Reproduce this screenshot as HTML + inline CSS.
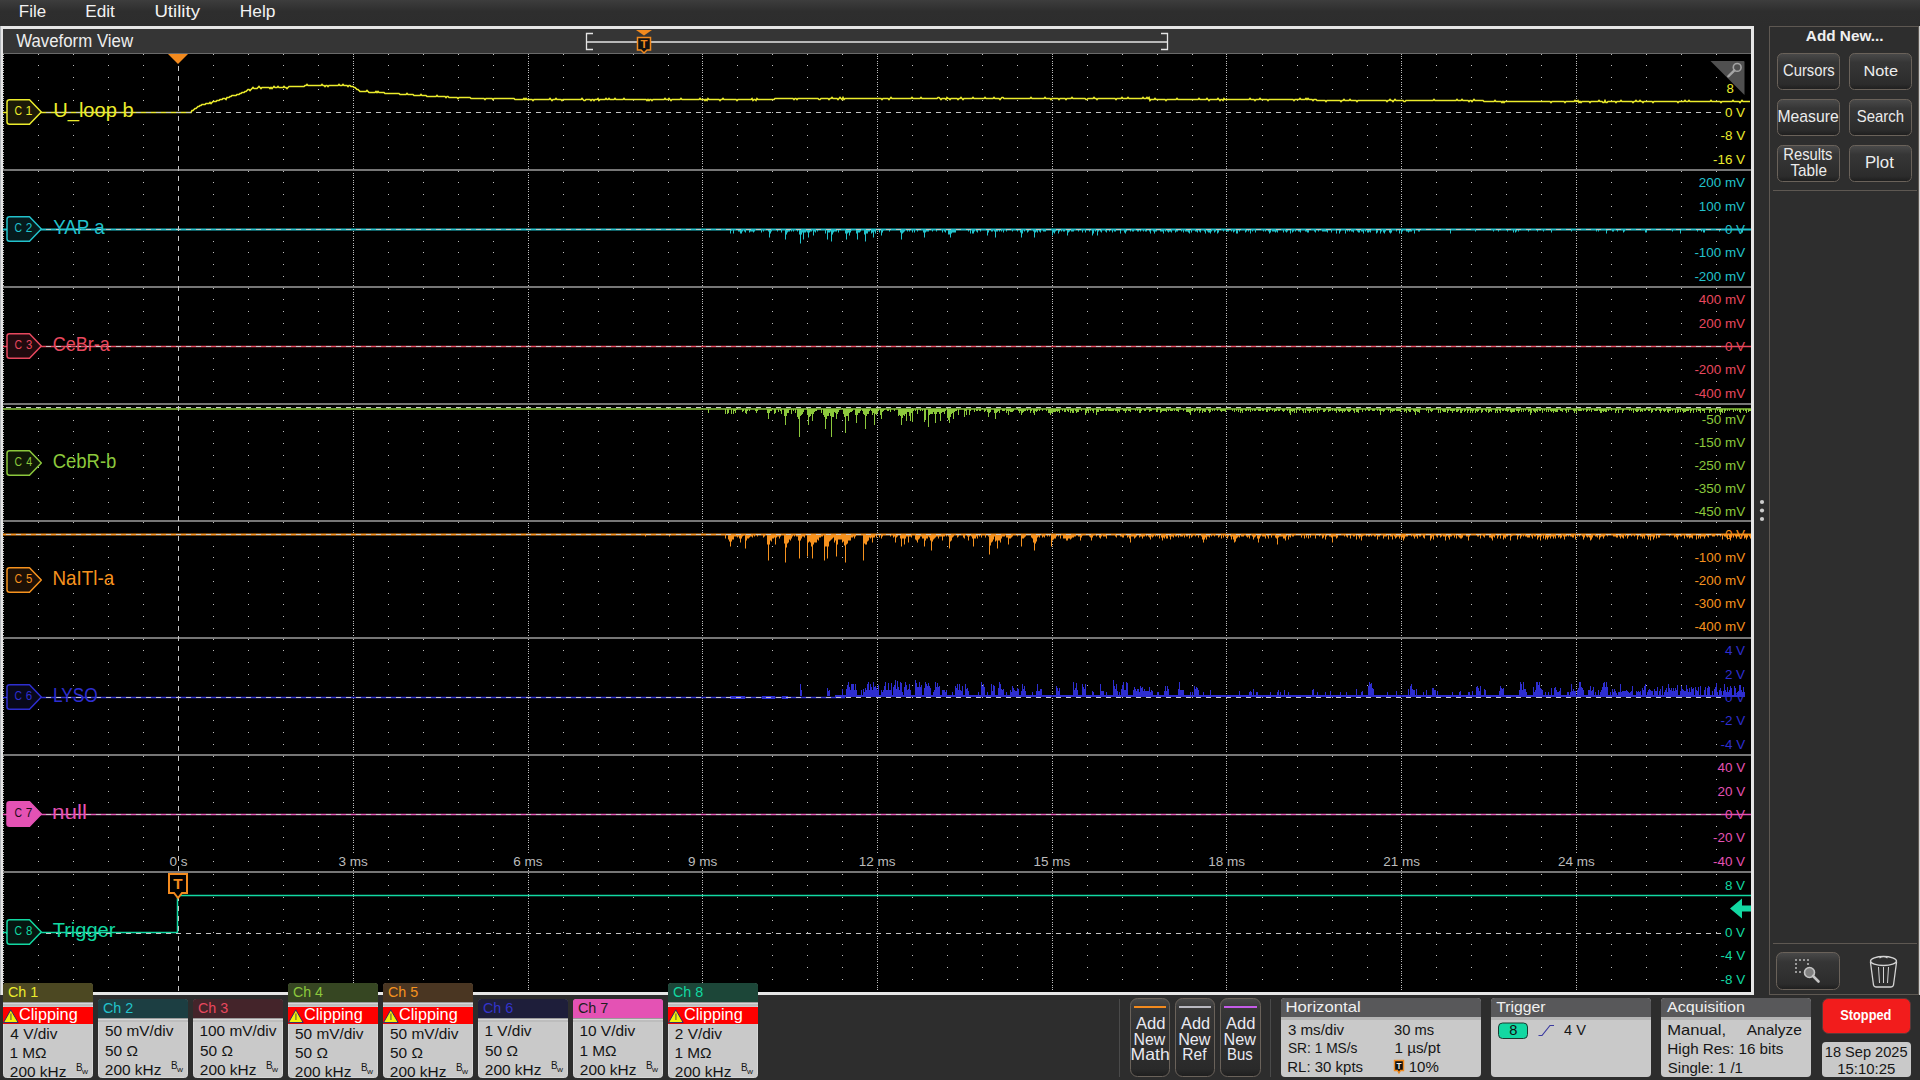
<!DOCTYPE html><html><head><meta charset="utf-8"><title>Waveform View</title><style>html,body{margin:0;padding:0;width:1920px;height:1080px;overflow:hidden;background:#2d2d2d;font-family:"Liberation Sans", sans-serif}</style></head><body><svg width="1920" height="1080" viewBox="0 0 1920 1080" style="position:absolute;left:0;top:0;font-family:'Liberation Sans', sans-serif"><rect x="0" y="0" width="1920" height="1080" fill="#2d2d2d" /><defs><linearGradient id="mb" x1="0" y1="0" x2="0" y2="1"><stop offset="0" stop-color="#3d3d3d"/><stop offset="0.45" stop-color="#2e2e2e"/><stop offset="1" stop-color="#2d2d2d"/></linearGradient><linearGradient id="btn" x1="0" y1="0" x2="0" y2="1"><stop offset="0" stop-color="#4a4a4a"/><stop offset="0.25" stop-color="#363636"/><stop offset="0.85" stop-color="#2c2c2c"/><stop offset="1" stop-color="#1e1e1e"/></linearGradient><linearGradient id="bbtn" x1="0" y1="0" x2="0" y2="1"><stop offset="0" stop-color="#4a4a4a"/><stop offset="0.15" stop-color="#363636"/><stop offset="0.9" stop-color="#2a2a2a"/><stop offset="1" stop-color="#1e1e1e"/></linearGradient></defs><rect x="0" y="0" width="1920" height="25" fill="url(#mb)" /><text x="18.85" y="17.10" font-size="16.42" font-weight="normal" fill="#f2f2f2" textLength="27.24" lengthAdjust="spacingAndGlyphs" >File</text><text x="85.23" y="17.10" font-size="16.42" font-weight="normal" fill="#f2f2f2" textLength="29.62" lengthAdjust="spacingAndGlyphs" >Edit</text><text x="154.40" y="17.10" font-size="16.42" font-weight="normal" fill="#f2f2f2" textLength="45.59" lengthAdjust="spacingAndGlyphs" >Utility</text><text x="239.71" y="17.10" font-size="16.42" font-weight="normal" fill="#f2f2f2" textLength="35.71" lengthAdjust="spacingAndGlyphs" >Help</text><rect x="0" y="26" width="1754" height="969" fill="#e6e6e6" /><rect x="0" y="26" width="1" height="969" fill="#b4b8bc" /><rect x="3" y="29" width="1748" height="25" fill="#353535" /><rect x="3" y="53" width="1748" height="1" fill="#6a6a6a" /><rect x="3" y="54" width="1748" height="938" fill="#000" /><text x="16.22" y="46.90" font-size="17.44" font-weight="normal" fill="#eeeeee" textLength="116.82" lengthAdjust="spacingAndGlyphs" >Waveform View</text><path d="M38 54h1v1h-1zM38 65h1v1h-1zM38 77h1v1h-1zM38 89h1v1h-1zM38 100h1v1h-1zM38 112h1v1h-1zM38 124h1v1h-1zM38 135h1v1h-1zM38 147h1v1h-1zM38 159h1v1h-1zM73 54h1v1h-1zM73 65h1v1h-1zM73 77h1v1h-1zM73 89h1v1h-1zM73 100h1v1h-1zM73 112h1v1h-1zM73 124h1v1h-1zM73 135h1v1h-1zM73 147h1v1h-1zM73 159h1v1h-1zM108 54h1v1h-1zM108 65h1v1h-1zM108 77h1v1h-1zM108 89h1v1h-1zM108 100h1v1h-1zM108 112h1v1h-1zM108 124h1v1h-1zM108 135h1v1h-1zM108 147h1v1h-1zM108 159h1v1h-1zM143 54h1v1h-1zM143 65h1v1h-1zM143 77h1v1h-1zM143 89h1v1h-1zM143 100h1v1h-1zM143 112h1v1h-1zM143 124h1v1h-1zM143 135h1v1h-1zM143 147h1v1h-1zM143 159h1v1h-1zM213 54h1v1h-1zM213 65h1v1h-1zM213 77h1v1h-1zM213 89h1v1h-1zM213 100h1v1h-1zM213 112h1v1h-1zM213 124h1v1h-1zM213 135h1v1h-1zM213 147h1v1h-1zM213 159h1v1h-1zM248 54h1v1h-1zM248 65h1v1h-1zM248 77h1v1h-1zM248 89h1v1h-1zM248 100h1v1h-1zM248 112h1v1h-1zM248 124h1v1h-1zM248 135h1v1h-1zM248 147h1v1h-1zM248 159h1v1h-1zM283 54h1v1h-1zM283 65h1v1h-1zM283 77h1v1h-1zM283 89h1v1h-1zM283 100h1v1h-1zM283 112h1v1h-1zM283 124h1v1h-1zM283 135h1v1h-1zM283 147h1v1h-1zM283 159h1v1h-1zM318 54h1v1h-1zM318 65h1v1h-1zM318 77h1v1h-1zM318 89h1v1h-1zM318 100h1v1h-1zM318 112h1v1h-1zM318 124h1v1h-1zM318 135h1v1h-1zM318 147h1v1h-1zM318 159h1v1h-1zM388 54h1v1h-1zM388 65h1v1h-1zM388 77h1v1h-1zM388 89h1v1h-1zM388 100h1v1h-1zM388 112h1v1h-1zM388 124h1v1h-1zM388 135h1v1h-1zM388 147h1v1h-1zM388 159h1v1h-1zM423 54h1v1h-1zM423 65h1v1h-1zM423 77h1v1h-1zM423 89h1v1h-1zM423 100h1v1h-1zM423 112h1v1h-1zM423 124h1v1h-1zM423 135h1v1h-1zM423 147h1v1h-1zM423 159h1v1h-1zM458 54h1v1h-1zM458 65h1v1h-1zM458 77h1v1h-1zM458 89h1v1h-1zM458 100h1v1h-1zM458 112h1v1h-1zM458 124h1v1h-1zM458 135h1v1h-1zM458 147h1v1h-1zM458 159h1v1h-1zM493 54h1v1h-1zM493 65h1v1h-1zM493 77h1v1h-1zM493 89h1v1h-1zM493 100h1v1h-1zM493 112h1v1h-1zM493 124h1v1h-1zM493 135h1v1h-1zM493 147h1v1h-1zM493 159h1v1h-1zM563 54h1v1h-1zM563 65h1v1h-1zM563 77h1v1h-1zM563 89h1v1h-1zM563 100h1v1h-1zM563 112h1v1h-1zM563 124h1v1h-1zM563 135h1v1h-1zM563 147h1v1h-1zM563 159h1v1h-1zM598 54h1v1h-1zM598 65h1v1h-1zM598 77h1v1h-1zM598 89h1v1h-1zM598 100h1v1h-1zM598 112h1v1h-1zM598 124h1v1h-1zM598 135h1v1h-1zM598 147h1v1h-1zM598 159h1v1h-1zM633 54h1v1h-1zM633 65h1v1h-1zM633 77h1v1h-1zM633 89h1v1h-1zM633 100h1v1h-1zM633 112h1v1h-1zM633 124h1v1h-1zM633 135h1v1h-1zM633 147h1v1h-1zM633 159h1v1h-1zM668 54h1v1h-1zM668 65h1v1h-1zM668 77h1v1h-1zM668 89h1v1h-1zM668 100h1v1h-1zM668 112h1v1h-1zM668 124h1v1h-1zM668 135h1v1h-1zM668 147h1v1h-1zM668 159h1v1h-1zM737 54h1v1h-1zM737 65h1v1h-1zM737 77h1v1h-1zM737 89h1v1h-1zM737 100h1v1h-1zM737 112h1v1h-1zM737 124h1v1h-1zM737 135h1v1h-1zM737 147h1v1h-1zM737 159h1v1h-1zM772 54h1v1h-1zM772 65h1v1h-1zM772 77h1v1h-1zM772 89h1v1h-1zM772 100h1v1h-1zM772 112h1v1h-1zM772 124h1v1h-1zM772 135h1v1h-1zM772 147h1v1h-1zM772 159h1v1h-1zM807 54h1v1h-1zM807 65h1v1h-1zM807 77h1v1h-1zM807 89h1v1h-1zM807 100h1v1h-1zM807 112h1v1h-1zM807 124h1v1h-1zM807 135h1v1h-1zM807 147h1v1h-1zM807 159h1v1h-1zM842 54h1v1h-1zM842 65h1v1h-1zM842 77h1v1h-1zM842 89h1v1h-1zM842 100h1v1h-1zM842 112h1v1h-1zM842 124h1v1h-1zM842 135h1v1h-1zM842 147h1v1h-1zM842 159h1v1h-1zM912 54h1v1h-1zM912 65h1v1h-1zM912 77h1v1h-1zM912 89h1v1h-1zM912 100h1v1h-1zM912 112h1v1h-1zM912 124h1v1h-1zM912 135h1v1h-1zM912 147h1v1h-1zM912 159h1v1h-1zM947 54h1v1h-1zM947 65h1v1h-1zM947 77h1v1h-1zM947 89h1v1h-1zM947 100h1v1h-1zM947 112h1v1h-1zM947 124h1v1h-1zM947 135h1v1h-1zM947 147h1v1h-1zM947 159h1v1h-1zM982 54h1v1h-1zM982 65h1v1h-1zM982 77h1v1h-1zM982 89h1v1h-1zM982 100h1v1h-1zM982 112h1v1h-1zM982 124h1v1h-1zM982 135h1v1h-1zM982 147h1v1h-1zM982 159h1v1h-1zM1017 54h1v1h-1zM1017 65h1v1h-1zM1017 77h1v1h-1zM1017 89h1v1h-1zM1017 100h1v1h-1zM1017 112h1v1h-1zM1017 124h1v1h-1zM1017 135h1v1h-1zM1017 147h1v1h-1zM1017 159h1v1h-1zM1087 54h1v1h-1zM1087 65h1v1h-1zM1087 77h1v1h-1zM1087 89h1v1h-1zM1087 100h1v1h-1zM1087 112h1v1h-1zM1087 124h1v1h-1zM1087 135h1v1h-1zM1087 147h1v1h-1zM1087 159h1v1h-1zM1122 54h1v1h-1zM1122 65h1v1h-1zM1122 77h1v1h-1zM1122 89h1v1h-1zM1122 100h1v1h-1zM1122 112h1v1h-1zM1122 124h1v1h-1zM1122 135h1v1h-1zM1122 147h1v1h-1zM1122 159h1v1h-1zM1157 54h1v1h-1zM1157 65h1v1h-1zM1157 77h1v1h-1zM1157 89h1v1h-1zM1157 100h1v1h-1zM1157 112h1v1h-1zM1157 124h1v1h-1zM1157 135h1v1h-1zM1157 147h1v1h-1zM1157 159h1v1h-1zM1192 54h1v1h-1zM1192 65h1v1h-1zM1192 77h1v1h-1zM1192 89h1v1h-1zM1192 100h1v1h-1zM1192 112h1v1h-1zM1192 124h1v1h-1zM1192 135h1v1h-1zM1192 147h1v1h-1zM1192 159h1v1h-1zM1262 54h1v1h-1zM1262 65h1v1h-1zM1262 77h1v1h-1zM1262 89h1v1h-1zM1262 100h1v1h-1zM1262 112h1v1h-1zM1262 124h1v1h-1zM1262 135h1v1h-1zM1262 147h1v1h-1zM1262 159h1v1h-1zM1297 54h1v1h-1zM1297 65h1v1h-1zM1297 77h1v1h-1zM1297 89h1v1h-1zM1297 100h1v1h-1zM1297 112h1v1h-1zM1297 124h1v1h-1zM1297 135h1v1h-1zM1297 147h1v1h-1zM1297 159h1v1h-1zM1332 54h1v1h-1zM1332 65h1v1h-1zM1332 77h1v1h-1zM1332 89h1v1h-1zM1332 100h1v1h-1zM1332 112h1v1h-1zM1332 124h1v1h-1zM1332 135h1v1h-1zM1332 147h1v1h-1zM1332 159h1v1h-1zM1367 54h1v1h-1zM1367 65h1v1h-1zM1367 77h1v1h-1zM1367 89h1v1h-1zM1367 100h1v1h-1zM1367 112h1v1h-1zM1367 124h1v1h-1zM1367 135h1v1h-1zM1367 147h1v1h-1zM1367 159h1v1h-1zM1436 54h1v1h-1zM1436 65h1v1h-1zM1436 77h1v1h-1zM1436 89h1v1h-1zM1436 100h1v1h-1zM1436 112h1v1h-1zM1436 124h1v1h-1zM1436 135h1v1h-1zM1436 147h1v1h-1zM1436 159h1v1h-1zM1471 54h1v1h-1zM1471 65h1v1h-1zM1471 77h1v1h-1zM1471 89h1v1h-1zM1471 100h1v1h-1zM1471 112h1v1h-1zM1471 124h1v1h-1zM1471 135h1v1h-1zM1471 147h1v1h-1zM1471 159h1v1h-1zM1506 54h1v1h-1zM1506 65h1v1h-1zM1506 77h1v1h-1zM1506 89h1v1h-1zM1506 100h1v1h-1zM1506 112h1v1h-1zM1506 124h1v1h-1zM1506 135h1v1h-1zM1506 147h1v1h-1zM1506 159h1v1h-1zM1541 54h1v1h-1zM1541 65h1v1h-1zM1541 77h1v1h-1zM1541 89h1v1h-1zM1541 100h1v1h-1zM1541 112h1v1h-1zM1541 124h1v1h-1zM1541 135h1v1h-1zM1541 147h1v1h-1zM1541 159h1v1h-1zM1611 54h1v1h-1zM1611 65h1v1h-1zM1611 77h1v1h-1zM1611 89h1v1h-1zM1611 100h1v1h-1zM1611 112h1v1h-1zM1611 124h1v1h-1zM1611 135h1v1h-1zM1611 147h1v1h-1zM1611 159h1v1h-1zM1646 54h1v1h-1zM1646 65h1v1h-1zM1646 77h1v1h-1zM1646 89h1v1h-1zM1646 100h1v1h-1zM1646 112h1v1h-1zM1646 124h1v1h-1zM1646 135h1v1h-1zM1646 147h1v1h-1zM1646 159h1v1h-1zM1681 54h1v1h-1zM1681 65h1v1h-1zM1681 77h1v1h-1zM1681 89h1v1h-1zM1681 100h1v1h-1zM1681 112h1v1h-1zM1681 124h1v1h-1zM1681 135h1v1h-1zM1681 147h1v1h-1zM1681 159h1v1h-1zM1716 54h1v1h-1zM1716 65h1v1h-1zM1716 77h1v1h-1zM1716 89h1v1h-1zM1716 100h1v1h-1zM1716 112h1v1h-1zM1716 124h1v1h-1zM1716 135h1v1h-1zM1716 147h1v1h-1zM1716 159h1v1h-1zM38 171h1v1h-1zM38 182h1v1h-1zM38 194h1v1h-1zM38 206h1v1h-1zM38 217h1v1h-1zM38 229h1v1h-1zM38 241h1v1h-1zM38 252h1v1h-1zM38 264h1v1h-1zM38 276h1v1h-1zM73 171h1v1h-1zM73 182h1v1h-1zM73 194h1v1h-1zM73 206h1v1h-1zM73 217h1v1h-1zM73 229h1v1h-1zM73 241h1v1h-1zM73 252h1v1h-1zM73 264h1v1h-1zM73 276h1v1h-1zM108 171h1v1h-1zM108 182h1v1h-1zM108 194h1v1h-1zM108 206h1v1h-1zM108 217h1v1h-1zM108 229h1v1h-1zM108 241h1v1h-1zM108 252h1v1h-1zM108 264h1v1h-1zM108 276h1v1h-1zM143 171h1v1h-1zM143 182h1v1h-1zM143 194h1v1h-1zM143 206h1v1h-1zM143 217h1v1h-1zM143 229h1v1h-1zM143 241h1v1h-1zM143 252h1v1h-1zM143 264h1v1h-1zM143 276h1v1h-1zM213 171h1v1h-1zM213 182h1v1h-1zM213 194h1v1h-1zM213 206h1v1h-1zM213 217h1v1h-1zM213 229h1v1h-1zM213 241h1v1h-1zM213 252h1v1h-1zM213 264h1v1h-1zM213 276h1v1h-1zM248 171h1v1h-1zM248 182h1v1h-1zM248 194h1v1h-1zM248 206h1v1h-1zM248 217h1v1h-1zM248 229h1v1h-1zM248 241h1v1h-1zM248 252h1v1h-1zM248 264h1v1h-1zM248 276h1v1h-1zM283 171h1v1h-1zM283 182h1v1h-1zM283 194h1v1h-1zM283 206h1v1h-1zM283 217h1v1h-1zM283 229h1v1h-1zM283 241h1v1h-1zM283 252h1v1h-1zM283 264h1v1h-1zM283 276h1v1h-1zM318 171h1v1h-1zM318 182h1v1h-1zM318 194h1v1h-1zM318 206h1v1h-1zM318 217h1v1h-1zM318 229h1v1h-1zM318 241h1v1h-1zM318 252h1v1h-1zM318 264h1v1h-1zM318 276h1v1h-1zM388 171h1v1h-1zM388 182h1v1h-1zM388 194h1v1h-1zM388 206h1v1h-1zM388 217h1v1h-1zM388 229h1v1h-1zM388 241h1v1h-1zM388 252h1v1h-1zM388 264h1v1h-1zM388 276h1v1h-1zM423 171h1v1h-1zM423 182h1v1h-1zM423 194h1v1h-1zM423 206h1v1h-1zM423 217h1v1h-1zM423 229h1v1h-1zM423 241h1v1h-1zM423 252h1v1h-1zM423 264h1v1h-1zM423 276h1v1h-1zM458 171h1v1h-1zM458 182h1v1h-1zM458 194h1v1h-1zM458 206h1v1h-1zM458 217h1v1h-1zM458 229h1v1h-1zM458 241h1v1h-1zM458 252h1v1h-1zM458 264h1v1h-1zM458 276h1v1h-1zM493 171h1v1h-1zM493 182h1v1h-1zM493 194h1v1h-1zM493 206h1v1h-1zM493 217h1v1h-1zM493 229h1v1h-1zM493 241h1v1h-1zM493 252h1v1h-1zM493 264h1v1h-1zM493 276h1v1h-1zM563 171h1v1h-1zM563 182h1v1h-1zM563 194h1v1h-1zM563 206h1v1h-1zM563 217h1v1h-1zM563 229h1v1h-1zM563 241h1v1h-1zM563 252h1v1h-1zM563 264h1v1h-1zM563 276h1v1h-1zM598 171h1v1h-1zM598 182h1v1h-1zM598 194h1v1h-1zM598 206h1v1h-1zM598 217h1v1h-1zM598 229h1v1h-1zM598 241h1v1h-1zM598 252h1v1h-1zM598 264h1v1h-1zM598 276h1v1h-1zM633 171h1v1h-1zM633 182h1v1h-1zM633 194h1v1h-1zM633 206h1v1h-1zM633 217h1v1h-1zM633 229h1v1h-1zM633 241h1v1h-1zM633 252h1v1h-1zM633 264h1v1h-1zM633 276h1v1h-1zM668 171h1v1h-1zM668 182h1v1h-1zM668 194h1v1h-1zM668 206h1v1h-1zM668 217h1v1h-1zM668 229h1v1h-1zM668 241h1v1h-1zM668 252h1v1h-1zM668 264h1v1h-1zM668 276h1v1h-1zM737 171h1v1h-1zM737 182h1v1h-1zM737 194h1v1h-1zM737 206h1v1h-1zM737 217h1v1h-1zM737 229h1v1h-1zM737 241h1v1h-1zM737 252h1v1h-1zM737 264h1v1h-1zM737 276h1v1h-1zM772 171h1v1h-1zM772 182h1v1h-1zM772 194h1v1h-1zM772 206h1v1h-1zM772 217h1v1h-1zM772 229h1v1h-1zM772 241h1v1h-1zM772 252h1v1h-1zM772 264h1v1h-1zM772 276h1v1h-1zM807 171h1v1h-1zM807 182h1v1h-1zM807 194h1v1h-1zM807 206h1v1h-1zM807 217h1v1h-1zM807 229h1v1h-1zM807 241h1v1h-1zM807 252h1v1h-1zM807 264h1v1h-1zM807 276h1v1h-1zM842 171h1v1h-1zM842 182h1v1h-1zM842 194h1v1h-1zM842 206h1v1h-1zM842 217h1v1h-1zM842 229h1v1h-1zM842 241h1v1h-1zM842 252h1v1h-1zM842 264h1v1h-1zM842 276h1v1h-1zM912 171h1v1h-1zM912 182h1v1h-1zM912 194h1v1h-1zM912 206h1v1h-1zM912 217h1v1h-1zM912 229h1v1h-1zM912 241h1v1h-1zM912 252h1v1h-1zM912 264h1v1h-1zM912 276h1v1h-1zM947 171h1v1h-1zM947 182h1v1h-1zM947 194h1v1h-1zM947 206h1v1h-1zM947 217h1v1h-1zM947 229h1v1h-1zM947 241h1v1h-1zM947 252h1v1h-1zM947 264h1v1h-1zM947 276h1v1h-1zM982 171h1v1h-1zM982 182h1v1h-1zM982 194h1v1h-1zM982 206h1v1h-1zM982 217h1v1h-1zM982 229h1v1h-1zM982 241h1v1h-1zM982 252h1v1h-1zM982 264h1v1h-1zM982 276h1v1h-1zM1017 171h1v1h-1zM1017 182h1v1h-1zM1017 194h1v1h-1zM1017 206h1v1h-1zM1017 217h1v1h-1zM1017 229h1v1h-1zM1017 241h1v1h-1zM1017 252h1v1h-1zM1017 264h1v1h-1zM1017 276h1v1h-1zM1087 171h1v1h-1zM1087 182h1v1h-1zM1087 194h1v1h-1zM1087 206h1v1h-1zM1087 217h1v1h-1zM1087 229h1v1h-1zM1087 241h1v1h-1zM1087 252h1v1h-1zM1087 264h1v1h-1zM1087 276h1v1h-1zM1122 171h1v1h-1zM1122 182h1v1h-1zM1122 194h1v1h-1zM1122 206h1v1h-1zM1122 217h1v1h-1zM1122 229h1v1h-1zM1122 241h1v1h-1zM1122 252h1v1h-1zM1122 264h1v1h-1zM1122 276h1v1h-1zM1157 171h1v1h-1zM1157 182h1v1h-1zM1157 194h1v1h-1zM1157 206h1v1h-1zM1157 217h1v1h-1zM1157 229h1v1h-1zM1157 241h1v1h-1zM1157 252h1v1h-1zM1157 264h1v1h-1zM1157 276h1v1h-1zM1192 171h1v1h-1zM1192 182h1v1h-1zM1192 194h1v1h-1zM1192 206h1v1h-1zM1192 217h1v1h-1zM1192 229h1v1h-1zM1192 241h1v1h-1zM1192 252h1v1h-1zM1192 264h1v1h-1zM1192 276h1v1h-1zM1262 171h1v1h-1zM1262 182h1v1h-1zM1262 194h1v1h-1zM1262 206h1v1h-1zM1262 217h1v1h-1zM1262 229h1v1h-1zM1262 241h1v1h-1zM1262 252h1v1h-1zM1262 264h1v1h-1zM1262 276h1v1h-1zM1297 171h1v1h-1zM1297 182h1v1h-1zM1297 194h1v1h-1zM1297 206h1v1h-1zM1297 217h1v1h-1zM1297 229h1v1h-1zM1297 241h1v1h-1zM1297 252h1v1h-1zM1297 264h1v1h-1zM1297 276h1v1h-1zM1332 171h1v1h-1zM1332 182h1v1h-1zM1332 194h1v1h-1zM1332 206h1v1h-1zM1332 217h1v1h-1zM1332 229h1v1h-1zM1332 241h1v1h-1zM1332 252h1v1h-1zM1332 264h1v1h-1zM1332 276h1v1h-1zM1367 171h1v1h-1zM1367 182h1v1h-1zM1367 194h1v1h-1zM1367 206h1v1h-1zM1367 217h1v1h-1zM1367 229h1v1h-1zM1367 241h1v1h-1zM1367 252h1v1h-1zM1367 264h1v1h-1zM1367 276h1v1h-1zM1436 171h1v1h-1zM1436 182h1v1h-1zM1436 194h1v1h-1zM1436 206h1v1h-1zM1436 217h1v1h-1zM1436 229h1v1h-1zM1436 241h1v1h-1zM1436 252h1v1h-1zM1436 264h1v1h-1zM1436 276h1v1h-1zM1471 171h1v1h-1zM1471 182h1v1h-1zM1471 194h1v1h-1zM1471 206h1v1h-1zM1471 217h1v1h-1zM1471 229h1v1h-1zM1471 241h1v1h-1zM1471 252h1v1h-1zM1471 264h1v1h-1zM1471 276h1v1h-1zM1506 171h1v1h-1zM1506 182h1v1h-1zM1506 194h1v1h-1zM1506 206h1v1h-1zM1506 217h1v1h-1zM1506 229h1v1h-1zM1506 241h1v1h-1zM1506 252h1v1h-1zM1506 264h1v1h-1zM1506 276h1v1h-1zM1541 171h1v1h-1zM1541 182h1v1h-1zM1541 194h1v1h-1zM1541 206h1v1h-1zM1541 217h1v1h-1zM1541 229h1v1h-1zM1541 241h1v1h-1zM1541 252h1v1h-1zM1541 264h1v1h-1zM1541 276h1v1h-1zM1611 171h1v1h-1zM1611 182h1v1h-1zM1611 194h1v1h-1zM1611 206h1v1h-1zM1611 217h1v1h-1zM1611 229h1v1h-1zM1611 241h1v1h-1zM1611 252h1v1h-1zM1611 264h1v1h-1zM1611 276h1v1h-1zM1646 171h1v1h-1zM1646 182h1v1h-1zM1646 194h1v1h-1zM1646 206h1v1h-1zM1646 217h1v1h-1zM1646 229h1v1h-1zM1646 241h1v1h-1zM1646 252h1v1h-1zM1646 264h1v1h-1zM1646 276h1v1h-1zM1681 171h1v1h-1zM1681 182h1v1h-1zM1681 194h1v1h-1zM1681 206h1v1h-1zM1681 217h1v1h-1zM1681 229h1v1h-1zM1681 241h1v1h-1zM1681 252h1v1h-1zM1681 264h1v1h-1zM1681 276h1v1h-1zM1716 171h1v1h-1zM1716 182h1v1h-1zM1716 194h1v1h-1zM1716 206h1v1h-1zM1716 217h1v1h-1zM1716 229h1v1h-1zM1716 241h1v1h-1zM1716 252h1v1h-1zM1716 264h1v1h-1zM1716 276h1v1h-1zM38 288h1v1h-1zM38 299h1v1h-1zM38 311h1v1h-1zM38 323h1v1h-1zM38 334h1v1h-1zM38 346h1v1h-1zM38 358h1v1h-1zM38 369h1v1h-1zM38 381h1v1h-1zM38 393h1v1h-1zM73 288h1v1h-1zM73 299h1v1h-1zM73 311h1v1h-1zM73 323h1v1h-1zM73 334h1v1h-1zM73 346h1v1h-1zM73 358h1v1h-1zM73 369h1v1h-1zM73 381h1v1h-1zM73 393h1v1h-1zM108 288h1v1h-1zM108 299h1v1h-1zM108 311h1v1h-1zM108 323h1v1h-1zM108 334h1v1h-1zM108 346h1v1h-1zM108 358h1v1h-1zM108 369h1v1h-1zM108 381h1v1h-1zM108 393h1v1h-1zM143 288h1v1h-1zM143 299h1v1h-1zM143 311h1v1h-1zM143 323h1v1h-1zM143 334h1v1h-1zM143 346h1v1h-1zM143 358h1v1h-1zM143 369h1v1h-1zM143 381h1v1h-1zM143 393h1v1h-1zM213 288h1v1h-1zM213 299h1v1h-1zM213 311h1v1h-1zM213 323h1v1h-1zM213 334h1v1h-1zM213 346h1v1h-1zM213 358h1v1h-1zM213 369h1v1h-1zM213 381h1v1h-1zM213 393h1v1h-1zM248 288h1v1h-1zM248 299h1v1h-1zM248 311h1v1h-1zM248 323h1v1h-1zM248 334h1v1h-1zM248 346h1v1h-1zM248 358h1v1h-1zM248 369h1v1h-1zM248 381h1v1h-1zM248 393h1v1h-1zM283 288h1v1h-1zM283 299h1v1h-1zM283 311h1v1h-1zM283 323h1v1h-1zM283 334h1v1h-1zM283 346h1v1h-1zM283 358h1v1h-1zM283 369h1v1h-1zM283 381h1v1h-1zM283 393h1v1h-1zM318 288h1v1h-1zM318 299h1v1h-1zM318 311h1v1h-1zM318 323h1v1h-1zM318 334h1v1h-1zM318 346h1v1h-1zM318 358h1v1h-1zM318 369h1v1h-1zM318 381h1v1h-1zM318 393h1v1h-1zM388 288h1v1h-1zM388 299h1v1h-1zM388 311h1v1h-1zM388 323h1v1h-1zM388 334h1v1h-1zM388 346h1v1h-1zM388 358h1v1h-1zM388 369h1v1h-1zM388 381h1v1h-1zM388 393h1v1h-1zM423 288h1v1h-1zM423 299h1v1h-1zM423 311h1v1h-1zM423 323h1v1h-1zM423 334h1v1h-1zM423 346h1v1h-1zM423 358h1v1h-1zM423 369h1v1h-1zM423 381h1v1h-1zM423 393h1v1h-1zM458 288h1v1h-1zM458 299h1v1h-1zM458 311h1v1h-1zM458 323h1v1h-1zM458 334h1v1h-1zM458 346h1v1h-1zM458 358h1v1h-1zM458 369h1v1h-1zM458 381h1v1h-1zM458 393h1v1h-1zM493 288h1v1h-1zM493 299h1v1h-1zM493 311h1v1h-1zM493 323h1v1h-1zM493 334h1v1h-1zM493 346h1v1h-1zM493 358h1v1h-1zM493 369h1v1h-1zM493 381h1v1h-1zM493 393h1v1h-1zM563 288h1v1h-1zM563 299h1v1h-1zM563 311h1v1h-1zM563 323h1v1h-1zM563 334h1v1h-1zM563 346h1v1h-1zM563 358h1v1h-1zM563 369h1v1h-1zM563 381h1v1h-1zM563 393h1v1h-1zM598 288h1v1h-1zM598 299h1v1h-1zM598 311h1v1h-1zM598 323h1v1h-1zM598 334h1v1h-1zM598 346h1v1h-1zM598 358h1v1h-1zM598 369h1v1h-1zM598 381h1v1h-1zM598 393h1v1h-1zM633 288h1v1h-1zM633 299h1v1h-1zM633 311h1v1h-1zM633 323h1v1h-1zM633 334h1v1h-1zM633 346h1v1h-1zM633 358h1v1h-1zM633 369h1v1h-1zM633 381h1v1h-1zM633 393h1v1h-1zM668 288h1v1h-1zM668 299h1v1h-1zM668 311h1v1h-1zM668 323h1v1h-1zM668 334h1v1h-1zM668 346h1v1h-1zM668 358h1v1h-1zM668 369h1v1h-1zM668 381h1v1h-1zM668 393h1v1h-1zM737 288h1v1h-1zM737 299h1v1h-1zM737 311h1v1h-1zM737 323h1v1h-1zM737 334h1v1h-1zM737 346h1v1h-1zM737 358h1v1h-1zM737 369h1v1h-1zM737 381h1v1h-1zM737 393h1v1h-1zM772 288h1v1h-1zM772 299h1v1h-1zM772 311h1v1h-1zM772 323h1v1h-1zM772 334h1v1h-1zM772 346h1v1h-1zM772 358h1v1h-1zM772 369h1v1h-1zM772 381h1v1h-1zM772 393h1v1h-1zM807 288h1v1h-1zM807 299h1v1h-1zM807 311h1v1h-1zM807 323h1v1h-1zM807 334h1v1h-1zM807 346h1v1h-1zM807 358h1v1h-1zM807 369h1v1h-1zM807 381h1v1h-1zM807 393h1v1h-1zM842 288h1v1h-1zM842 299h1v1h-1zM842 311h1v1h-1zM842 323h1v1h-1zM842 334h1v1h-1zM842 346h1v1h-1zM842 358h1v1h-1zM842 369h1v1h-1zM842 381h1v1h-1zM842 393h1v1h-1zM912 288h1v1h-1zM912 299h1v1h-1zM912 311h1v1h-1zM912 323h1v1h-1zM912 334h1v1h-1zM912 346h1v1h-1zM912 358h1v1h-1zM912 369h1v1h-1zM912 381h1v1h-1zM912 393h1v1h-1zM947 288h1v1h-1zM947 299h1v1h-1zM947 311h1v1h-1zM947 323h1v1h-1zM947 334h1v1h-1zM947 346h1v1h-1zM947 358h1v1h-1zM947 369h1v1h-1zM947 381h1v1h-1zM947 393h1v1h-1zM982 288h1v1h-1zM982 299h1v1h-1zM982 311h1v1h-1zM982 323h1v1h-1zM982 334h1v1h-1zM982 346h1v1h-1zM982 358h1v1h-1zM982 369h1v1h-1zM982 381h1v1h-1zM982 393h1v1h-1zM1017 288h1v1h-1zM1017 299h1v1h-1zM1017 311h1v1h-1zM1017 323h1v1h-1zM1017 334h1v1h-1zM1017 346h1v1h-1zM1017 358h1v1h-1zM1017 369h1v1h-1zM1017 381h1v1h-1zM1017 393h1v1h-1zM1087 288h1v1h-1zM1087 299h1v1h-1zM1087 311h1v1h-1zM1087 323h1v1h-1zM1087 334h1v1h-1zM1087 346h1v1h-1zM1087 358h1v1h-1zM1087 369h1v1h-1zM1087 381h1v1h-1zM1087 393h1v1h-1zM1122 288h1v1h-1zM1122 299h1v1h-1zM1122 311h1v1h-1zM1122 323h1v1h-1zM1122 334h1v1h-1zM1122 346h1v1h-1zM1122 358h1v1h-1zM1122 369h1v1h-1zM1122 381h1v1h-1zM1122 393h1v1h-1zM1157 288h1v1h-1zM1157 299h1v1h-1zM1157 311h1v1h-1zM1157 323h1v1h-1zM1157 334h1v1h-1zM1157 346h1v1h-1zM1157 358h1v1h-1zM1157 369h1v1h-1zM1157 381h1v1h-1zM1157 393h1v1h-1zM1192 288h1v1h-1zM1192 299h1v1h-1zM1192 311h1v1h-1zM1192 323h1v1h-1zM1192 334h1v1h-1zM1192 346h1v1h-1zM1192 358h1v1h-1zM1192 369h1v1h-1zM1192 381h1v1h-1zM1192 393h1v1h-1zM1262 288h1v1h-1zM1262 299h1v1h-1zM1262 311h1v1h-1zM1262 323h1v1h-1zM1262 334h1v1h-1zM1262 346h1v1h-1zM1262 358h1v1h-1zM1262 369h1v1h-1zM1262 381h1v1h-1zM1262 393h1v1h-1zM1297 288h1v1h-1zM1297 299h1v1h-1zM1297 311h1v1h-1zM1297 323h1v1h-1zM1297 334h1v1h-1zM1297 346h1v1h-1zM1297 358h1v1h-1zM1297 369h1v1h-1zM1297 381h1v1h-1zM1297 393h1v1h-1zM1332 288h1v1h-1zM1332 299h1v1h-1zM1332 311h1v1h-1zM1332 323h1v1h-1zM1332 334h1v1h-1zM1332 346h1v1h-1zM1332 358h1v1h-1zM1332 369h1v1h-1zM1332 381h1v1h-1zM1332 393h1v1h-1zM1367 288h1v1h-1zM1367 299h1v1h-1zM1367 311h1v1h-1zM1367 323h1v1h-1zM1367 334h1v1h-1zM1367 346h1v1h-1zM1367 358h1v1h-1zM1367 369h1v1h-1zM1367 381h1v1h-1zM1367 393h1v1h-1zM1436 288h1v1h-1zM1436 299h1v1h-1zM1436 311h1v1h-1zM1436 323h1v1h-1zM1436 334h1v1h-1zM1436 346h1v1h-1zM1436 358h1v1h-1zM1436 369h1v1h-1zM1436 381h1v1h-1zM1436 393h1v1h-1zM1471 288h1v1h-1zM1471 299h1v1h-1zM1471 311h1v1h-1zM1471 323h1v1h-1zM1471 334h1v1h-1zM1471 346h1v1h-1zM1471 358h1v1h-1zM1471 369h1v1h-1zM1471 381h1v1h-1zM1471 393h1v1h-1zM1506 288h1v1h-1zM1506 299h1v1h-1zM1506 311h1v1h-1zM1506 323h1v1h-1zM1506 334h1v1h-1zM1506 346h1v1h-1zM1506 358h1v1h-1zM1506 369h1v1h-1zM1506 381h1v1h-1zM1506 393h1v1h-1zM1541 288h1v1h-1zM1541 299h1v1h-1zM1541 311h1v1h-1zM1541 323h1v1h-1zM1541 334h1v1h-1zM1541 346h1v1h-1zM1541 358h1v1h-1zM1541 369h1v1h-1zM1541 381h1v1h-1zM1541 393h1v1h-1zM1611 288h1v1h-1zM1611 299h1v1h-1zM1611 311h1v1h-1zM1611 323h1v1h-1zM1611 334h1v1h-1zM1611 346h1v1h-1zM1611 358h1v1h-1zM1611 369h1v1h-1zM1611 381h1v1h-1zM1611 393h1v1h-1zM1646 288h1v1h-1zM1646 299h1v1h-1zM1646 311h1v1h-1zM1646 323h1v1h-1zM1646 334h1v1h-1zM1646 346h1v1h-1zM1646 358h1v1h-1zM1646 369h1v1h-1zM1646 381h1v1h-1zM1646 393h1v1h-1zM1681 288h1v1h-1zM1681 299h1v1h-1zM1681 311h1v1h-1zM1681 323h1v1h-1zM1681 334h1v1h-1zM1681 346h1v1h-1zM1681 358h1v1h-1zM1681 369h1v1h-1zM1681 381h1v1h-1zM1681 393h1v1h-1zM1716 288h1v1h-1zM1716 299h1v1h-1zM1716 311h1v1h-1zM1716 323h1v1h-1zM1716 334h1v1h-1zM1716 346h1v1h-1zM1716 358h1v1h-1zM1716 369h1v1h-1zM1716 381h1v1h-1zM1716 393h1v1h-1zM38 408h1v1h-1zM38 420h1v1h-1zM38 431h1v1h-1zM38 443h1v1h-1zM38 455h1v1h-1zM38 467h1v1h-1zM38 478h1v1h-1zM38 490h1v1h-1zM38 502h1v1h-1zM38 513h1v1h-1zM73 408h1v1h-1zM73 420h1v1h-1zM73 431h1v1h-1zM73 443h1v1h-1zM73 455h1v1h-1zM73 467h1v1h-1zM73 478h1v1h-1zM73 490h1v1h-1zM73 502h1v1h-1zM73 513h1v1h-1zM108 408h1v1h-1zM108 420h1v1h-1zM108 431h1v1h-1zM108 443h1v1h-1zM108 455h1v1h-1zM108 467h1v1h-1zM108 478h1v1h-1zM108 490h1v1h-1zM108 502h1v1h-1zM108 513h1v1h-1zM143 408h1v1h-1zM143 420h1v1h-1zM143 431h1v1h-1zM143 443h1v1h-1zM143 455h1v1h-1zM143 467h1v1h-1zM143 478h1v1h-1zM143 490h1v1h-1zM143 502h1v1h-1zM143 513h1v1h-1zM213 408h1v1h-1zM213 420h1v1h-1zM213 431h1v1h-1zM213 443h1v1h-1zM213 455h1v1h-1zM213 467h1v1h-1zM213 478h1v1h-1zM213 490h1v1h-1zM213 502h1v1h-1zM213 513h1v1h-1zM248 408h1v1h-1zM248 420h1v1h-1zM248 431h1v1h-1zM248 443h1v1h-1zM248 455h1v1h-1zM248 467h1v1h-1zM248 478h1v1h-1zM248 490h1v1h-1zM248 502h1v1h-1zM248 513h1v1h-1zM283 408h1v1h-1zM283 420h1v1h-1zM283 431h1v1h-1zM283 443h1v1h-1zM283 455h1v1h-1zM283 467h1v1h-1zM283 478h1v1h-1zM283 490h1v1h-1zM283 502h1v1h-1zM283 513h1v1h-1zM318 408h1v1h-1zM318 420h1v1h-1zM318 431h1v1h-1zM318 443h1v1h-1zM318 455h1v1h-1zM318 467h1v1h-1zM318 478h1v1h-1zM318 490h1v1h-1zM318 502h1v1h-1zM318 513h1v1h-1zM388 408h1v1h-1zM388 420h1v1h-1zM388 431h1v1h-1zM388 443h1v1h-1zM388 455h1v1h-1zM388 467h1v1h-1zM388 478h1v1h-1zM388 490h1v1h-1zM388 502h1v1h-1zM388 513h1v1h-1zM423 408h1v1h-1zM423 420h1v1h-1zM423 431h1v1h-1zM423 443h1v1h-1zM423 455h1v1h-1zM423 467h1v1h-1zM423 478h1v1h-1zM423 490h1v1h-1zM423 502h1v1h-1zM423 513h1v1h-1zM458 408h1v1h-1zM458 420h1v1h-1zM458 431h1v1h-1zM458 443h1v1h-1zM458 455h1v1h-1zM458 467h1v1h-1zM458 478h1v1h-1zM458 490h1v1h-1zM458 502h1v1h-1zM458 513h1v1h-1zM493 408h1v1h-1zM493 420h1v1h-1zM493 431h1v1h-1zM493 443h1v1h-1zM493 455h1v1h-1zM493 467h1v1h-1zM493 478h1v1h-1zM493 490h1v1h-1zM493 502h1v1h-1zM493 513h1v1h-1zM563 408h1v1h-1zM563 420h1v1h-1zM563 431h1v1h-1zM563 443h1v1h-1zM563 455h1v1h-1zM563 467h1v1h-1zM563 478h1v1h-1zM563 490h1v1h-1zM563 502h1v1h-1zM563 513h1v1h-1zM598 408h1v1h-1zM598 420h1v1h-1zM598 431h1v1h-1zM598 443h1v1h-1zM598 455h1v1h-1zM598 467h1v1h-1zM598 478h1v1h-1zM598 490h1v1h-1zM598 502h1v1h-1zM598 513h1v1h-1zM633 408h1v1h-1zM633 420h1v1h-1zM633 431h1v1h-1zM633 443h1v1h-1zM633 455h1v1h-1zM633 467h1v1h-1zM633 478h1v1h-1zM633 490h1v1h-1zM633 502h1v1h-1zM633 513h1v1h-1zM668 408h1v1h-1zM668 420h1v1h-1zM668 431h1v1h-1zM668 443h1v1h-1zM668 455h1v1h-1zM668 467h1v1h-1zM668 478h1v1h-1zM668 490h1v1h-1zM668 502h1v1h-1zM668 513h1v1h-1zM737 408h1v1h-1zM737 420h1v1h-1zM737 431h1v1h-1zM737 443h1v1h-1zM737 455h1v1h-1zM737 467h1v1h-1zM737 478h1v1h-1zM737 490h1v1h-1zM737 502h1v1h-1zM737 513h1v1h-1zM772 408h1v1h-1zM772 420h1v1h-1zM772 431h1v1h-1zM772 443h1v1h-1zM772 455h1v1h-1zM772 467h1v1h-1zM772 478h1v1h-1zM772 490h1v1h-1zM772 502h1v1h-1zM772 513h1v1h-1zM807 408h1v1h-1zM807 420h1v1h-1zM807 431h1v1h-1zM807 443h1v1h-1zM807 455h1v1h-1zM807 467h1v1h-1zM807 478h1v1h-1zM807 490h1v1h-1zM807 502h1v1h-1zM807 513h1v1h-1zM842 408h1v1h-1zM842 420h1v1h-1zM842 431h1v1h-1zM842 443h1v1h-1zM842 455h1v1h-1zM842 467h1v1h-1zM842 478h1v1h-1zM842 490h1v1h-1zM842 502h1v1h-1zM842 513h1v1h-1zM912 408h1v1h-1zM912 420h1v1h-1zM912 431h1v1h-1zM912 443h1v1h-1zM912 455h1v1h-1zM912 467h1v1h-1zM912 478h1v1h-1zM912 490h1v1h-1zM912 502h1v1h-1zM912 513h1v1h-1zM947 408h1v1h-1zM947 420h1v1h-1zM947 431h1v1h-1zM947 443h1v1h-1zM947 455h1v1h-1zM947 467h1v1h-1zM947 478h1v1h-1zM947 490h1v1h-1zM947 502h1v1h-1zM947 513h1v1h-1zM982 408h1v1h-1zM982 420h1v1h-1zM982 431h1v1h-1zM982 443h1v1h-1zM982 455h1v1h-1zM982 467h1v1h-1zM982 478h1v1h-1zM982 490h1v1h-1zM982 502h1v1h-1zM982 513h1v1h-1zM1017 408h1v1h-1zM1017 420h1v1h-1zM1017 431h1v1h-1zM1017 443h1v1h-1zM1017 455h1v1h-1zM1017 467h1v1h-1zM1017 478h1v1h-1zM1017 490h1v1h-1zM1017 502h1v1h-1zM1017 513h1v1h-1zM1087 408h1v1h-1zM1087 420h1v1h-1zM1087 431h1v1h-1zM1087 443h1v1h-1zM1087 455h1v1h-1zM1087 467h1v1h-1zM1087 478h1v1h-1zM1087 490h1v1h-1zM1087 502h1v1h-1zM1087 513h1v1h-1zM1122 408h1v1h-1zM1122 420h1v1h-1zM1122 431h1v1h-1zM1122 443h1v1h-1zM1122 455h1v1h-1zM1122 467h1v1h-1zM1122 478h1v1h-1zM1122 490h1v1h-1zM1122 502h1v1h-1zM1122 513h1v1h-1zM1157 408h1v1h-1zM1157 420h1v1h-1zM1157 431h1v1h-1zM1157 443h1v1h-1zM1157 455h1v1h-1zM1157 467h1v1h-1zM1157 478h1v1h-1zM1157 490h1v1h-1zM1157 502h1v1h-1zM1157 513h1v1h-1zM1192 408h1v1h-1zM1192 420h1v1h-1zM1192 431h1v1h-1zM1192 443h1v1h-1zM1192 455h1v1h-1zM1192 467h1v1h-1zM1192 478h1v1h-1zM1192 490h1v1h-1zM1192 502h1v1h-1zM1192 513h1v1h-1zM1262 408h1v1h-1zM1262 420h1v1h-1zM1262 431h1v1h-1zM1262 443h1v1h-1zM1262 455h1v1h-1zM1262 467h1v1h-1zM1262 478h1v1h-1zM1262 490h1v1h-1zM1262 502h1v1h-1zM1262 513h1v1h-1zM1297 408h1v1h-1zM1297 420h1v1h-1zM1297 431h1v1h-1zM1297 443h1v1h-1zM1297 455h1v1h-1zM1297 467h1v1h-1zM1297 478h1v1h-1zM1297 490h1v1h-1zM1297 502h1v1h-1zM1297 513h1v1h-1zM1332 408h1v1h-1zM1332 420h1v1h-1zM1332 431h1v1h-1zM1332 443h1v1h-1zM1332 455h1v1h-1zM1332 467h1v1h-1zM1332 478h1v1h-1zM1332 490h1v1h-1zM1332 502h1v1h-1zM1332 513h1v1h-1zM1367 408h1v1h-1zM1367 420h1v1h-1zM1367 431h1v1h-1zM1367 443h1v1h-1zM1367 455h1v1h-1zM1367 467h1v1h-1zM1367 478h1v1h-1zM1367 490h1v1h-1zM1367 502h1v1h-1zM1367 513h1v1h-1zM1436 408h1v1h-1zM1436 420h1v1h-1zM1436 431h1v1h-1zM1436 443h1v1h-1zM1436 455h1v1h-1zM1436 467h1v1h-1zM1436 478h1v1h-1zM1436 490h1v1h-1zM1436 502h1v1h-1zM1436 513h1v1h-1zM1471 408h1v1h-1zM1471 420h1v1h-1zM1471 431h1v1h-1zM1471 443h1v1h-1zM1471 455h1v1h-1zM1471 467h1v1h-1zM1471 478h1v1h-1zM1471 490h1v1h-1zM1471 502h1v1h-1zM1471 513h1v1h-1zM1506 408h1v1h-1zM1506 420h1v1h-1zM1506 431h1v1h-1zM1506 443h1v1h-1zM1506 455h1v1h-1zM1506 467h1v1h-1zM1506 478h1v1h-1zM1506 490h1v1h-1zM1506 502h1v1h-1zM1506 513h1v1h-1zM1541 408h1v1h-1zM1541 420h1v1h-1zM1541 431h1v1h-1zM1541 443h1v1h-1zM1541 455h1v1h-1zM1541 467h1v1h-1zM1541 478h1v1h-1zM1541 490h1v1h-1zM1541 502h1v1h-1zM1541 513h1v1h-1zM1611 408h1v1h-1zM1611 420h1v1h-1zM1611 431h1v1h-1zM1611 443h1v1h-1zM1611 455h1v1h-1zM1611 467h1v1h-1zM1611 478h1v1h-1zM1611 490h1v1h-1zM1611 502h1v1h-1zM1611 513h1v1h-1zM1646 408h1v1h-1zM1646 420h1v1h-1zM1646 431h1v1h-1zM1646 443h1v1h-1zM1646 455h1v1h-1zM1646 467h1v1h-1zM1646 478h1v1h-1zM1646 490h1v1h-1zM1646 502h1v1h-1zM1646 513h1v1h-1zM1681 408h1v1h-1zM1681 420h1v1h-1zM1681 431h1v1h-1zM1681 443h1v1h-1zM1681 455h1v1h-1zM1681 467h1v1h-1zM1681 478h1v1h-1zM1681 490h1v1h-1zM1681 502h1v1h-1zM1681 513h1v1h-1zM1716 408h1v1h-1zM1716 420h1v1h-1zM1716 431h1v1h-1zM1716 443h1v1h-1zM1716 455h1v1h-1zM1716 467h1v1h-1zM1716 478h1v1h-1zM1716 490h1v1h-1zM1716 502h1v1h-1zM1716 513h1v1h-1zM38 522h1v1h-1zM38 534h1v1h-1zM38 546h1v1h-1zM38 557h1v1h-1zM38 569h1v1h-1zM38 581h1v1h-1zM38 593h1v1h-1zM38 604h1v1h-1zM38 616h1v1h-1zM38 628h1v1h-1zM73 522h1v1h-1zM73 534h1v1h-1zM73 546h1v1h-1zM73 557h1v1h-1zM73 569h1v1h-1zM73 581h1v1h-1zM73 593h1v1h-1zM73 604h1v1h-1zM73 616h1v1h-1zM73 628h1v1h-1zM108 522h1v1h-1zM108 534h1v1h-1zM108 546h1v1h-1zM108 557h1v1h-1zM108 569h1v1h-1zM108 581h1v1h-1zM108 593h1v1h-1zM108 604h1v1h-1zM108 616h1v1h-1zM108 628h1v1h-1zM143 522h1v1h-1zM143 534h1v1h-1zM143 546h1v1h-1zM143 557h1v1h-1zM143 569h1v1h-1zM143 581h1v1h-1zM143 593h1v1h-1zM143 604h1v1h-1zM143 616h1v1h-1zM143 628h1v1h-1zM213 522h1v1h-1zM213 534h1v1h-1zM213 546h1v1h-1zM213 557h1v1h-1zM213 569h1v1h-1zM213 581h1v1h-1zM213 593h1v1h-1zM213 604h1v1h-1zM213 616h1v1h-1zM213 628h1v1h-1zM248 522h1v1h-1zM248 534h1v1h-1zM248 546h1v1h-1zM248 557h1v1h-1zM248 569h1v1h-1zM248 581h1v1h-1zM248 593h1v1h-1zM248 604h1v1h-1zM248 616h1v1h-1zM248 628h1v1h-1zM283 522h1v1h-1zM283 534h1v1h-1zM283 546h1v1h-1zM283 557h1v1h-1zM283 569h1v1h-1zM283 581h1v1h-1zM283 593h1v1h-1zM283 604h1v1h-1zM283 616h1v1h-1zM283 628h1v1h-1zM318 522h1v1h-1zM318 534h1v1h-1zM318 546h1v1h-1zM318 557h1v1h-1zM318 569h1v1h-1zM318 581h1v1h-1zM318 593h1v1h-1zM318 604h1v1h-1zM318 616h1v1h-1zM318 628h1v1h-1zM388 522h1v1h-1zM388 534h1v1h-1zM388 546h1v1h-1zM388 557h1v1h-1zM388 569h1v1h-1zM388 581h1v1h-1zM388 593h1v1h-1zM388 604h1v1h-1zM388 616h1v1h-1zM388 628h1v1h-1zM423 522h1v1h-1zM423 534h1v1h-1zM423 546h1v1h-1zM423 557h1v1h-1zM423 569h1v1h-1zM423 581h1v1h-1zM423 593h1v1h-1zM423 604h1v1h-1zM423 616h1v1h-1zM423 628h1v1h-1zM458 522h1v1h-1zM458 534h1v1h-1zM458 546h1v1h-1zM458 557h1v1h-1zM458 569h1v1h-1zM458 581h1v1h-1zM458 593h1v1h-1zM458 604h1v1h-1zM458 616h1v1h-1zM458 628h1v1h-1zM493 522h1v1h-1zM493 534h1v1h-1zM493 546h1v1h-1zM493 557h1v1h-1zM493 569h1v1h-1zM493 581h1v1h-1zM493 593h1v1h-1zM493 604h1v1h-1zM493 616h1v1h-1zM493 628h1v1h-1zM563 522h1v1h-1zM563 534h1v1h-1zM563 546h1v1h-1zM563 557h1v1h-1zM563 569h1v1h-1zM563 581h1v1h-1zM563 593h1v1h-1zM563 604h1v1h-1zM563 616h1v1h-1zM563 628h1v1h-1zM598 522h1v1h-1zM598 534h1v1h-1zM598 546h1v1h-1zM598 557h1v1h-1zM598 569h1v1h-1zM598 581h1v1h-1zM598 593h1v1h-1zM598 604h1v1h-1zM598 616h1v1h-1zM598 628h1v1h-1zM633 522h1v1h-1zM633 534h1v1h-1zM633 546h1v1h-1zM633 557h1v1h-1zM633 569h1v1h-1zM633 581h1v1h-1zM633 593h1v1h-1zM633 604h1v1h-1zM633 616h1v1h-1zM633 628h1v1h-1zM668 522h1v1h-1zM668 534h1v1h-1zM668 546h1v1h-1zM668 557h1v1h-1zM668 569h1v1h-1zM668 581h1v1h-1zM668 593h1v1h-1zM668 604h1v1h-1zM668 616h1v1h-1zM668 628h1v1h-1zM737 522h1v1h-1zM737 534h1v1h-1zM737 546h1v1h-1zM737 557h1v1h-1zM737 569h1v1h-1zM737 581h1v1h-1zM737 593h1v1h-1zM737 604h1v1h-1zM737 616h1v1h-1zM737 628h1v1h-1zM772 522h1v1h-1zM772 534h1v1h-1zM772 546h1v1h-1zM772 557h1v1h-1zM772 569h1v1h-1zM772 581h1v1h-1zM772 593h1v1h-1zM772 604h1v1h-1zM772 616h1v1h-1zM772 628h1v1h-1zM807 522h1v1h-1zM807 534h1v1h-1zM807 546h1v1h-1zM807 557h1v1h-1zM807 569h1v1h-1zM807 581h1v1h-1zM807 593h1v1h-1zM807 604h1v1h-1zM807 616h1v1h-1zM807 628h1v1h-1zM842 522h1v1h-1zM842 534h1v1h-1zM842 546h1v1h-1zM842 557h1v1h-1zM842 569h1v1h-1zM842 581h1v1h-1zM842 593h1v1h-1zM842 604h1v1h-1zM842 616h1v1h-1zM842 628h1v1h-1zM912 522h1v1h-1zM912 534h1v1h-1zM912 546h1v1h-1zM912 557h1v1h-1zM912 569h1v1h-1zM912 581h1v1h-1zM912 593h1v1h-1zM912 604h1v1h-1zM912 616h1v1h-1zM912 628h1v1h-1zM947 522h1v1h-1zM947 534h1v1h-1zM947 546h1v1h-1zM947 557h1v1h-1zM947 569h1v1h-1zM947 581h1v1h-1zM947 593h1v1h-1zM947 604h1v1h-1zM947 616h1v1h-1zM947 628h1v1h-1zM982 522h1v1h-1zM982 534h1v1h-1zM982 546h1v1h-1zM982 557h1v1h-1zM982 569h1v1h-1zM982 581h1v1h-1zM982 593h1v1h-1zM982 604h1v1h-1zM982 616h1v1h-1zM982 628h1v1h-1zM1017 522h1v1h-1zM1017 534h1v1h-1zM1017 546h1v1h-1zM1017 557h1v1h-1zM1017 569h1v1h-1zM1017 581h1v1h-1zM1017 593h1v1h-1zM1017 604h1v1h-1zM1017 616h1v1h-1zM1017 628h1v1h-1zM1087 522h1v1h-1zM1087 534h1v1h-1zM1087 546h1v1h-1zM1087 557h1v1h-1zM1087 569h1v1h-1zM1087 581h1v1h-1zM1087 593h1v1h-1zM1087 604h1v1h-1zM1087 616h1v1h-1zM1087 628h1v1h-1zM1122 522h1v1h-1zM1122 534h1v1h-1zM1122 546h1v1h-1zM1122 557h1v1h-1zM1122 569h1v1h-1zM1122 581h1v1h-1zM1122 593h1v1h-1zM1122 604h1v1h-1zM1122 616h1v1h-1zM1122 628h1v1h-1zM1157 522h1v1h-1zM1157 534h1v1h-1zM1157 546h1v1h-1zM1157 557h1v1h-1zM1157 569h1v1h-1zM1157 581h1v1h-1zM1157 593h1v1h-1zM1157 604h1v1h-1zM1157 616h1v1h-1zM1157 628h1v1h-1zM1192 522h1v1h-1zM1192 534h1v1h-1zM1192 546h1v1h-1zM1192 557h1v1h-1zM1192 569h1v1h-1zM1192 581h1v1h-1zM1192 593h1v1h-1zM1192 604h1v1h-1zM1192 616h1v1h-1zM1192 628h1v1h-1zM1262 522h1v1h-1zM1262 534h1v1h-1zM1262 546h1v1h-1zM1262 557h1v1h-1zM1262 569h1v1h-1zM1262 581h1v1h-1zM1262 593h1v1h-1zM1262 604h1v1h-1zM1262 616h1v1h-1zM1262 628h1v1h-1zM1297 522h1v1h-1zM1297 534h1v1h-1zM1297 546h1v1h-1zM1297 557h1v1h-1zM1297 569h1v1h-1zM1297 581h1v1h-1zM1297 593h1v1h-1zM1297 604h1v1h-1zM1297 616h1v1h-1zM1297 628h1v1h-1zM1332 522h1v1h-1zM1332 534h1v1h-1zM1332 546h1v1h-1zM1332 557h1v1h-1zM1332 569h1v1h-1zM1332 581h1v1h-1zM1332 593h1v1h-1zM1332 604h1v1h-1zM1332 616h1v1h-1zM1332 628h1v1h-1zM1367 522h1v1h-1zM1367 534h1v1h-1zM1367 546h1v1h-1zM1367 557h1v1h-1zM1367 569h1v1h-1zM1367 581h1v1h-1zM1367 593h1v1h-1zM1367 604h1v1h-1zM1367 616h1v1h-1zM1367 628h1v1h-1zM1436 522h1v1h-1zM1436 534h1v1h-1zM1436 546h1v1h-1zM1436 557h1v1h-1zM1436 569h1v1h-1zM1436 581h1v1h-1zM1436 593h1v1h-1zM1436 604h1v1h-1zM1436 616h1v1h-1zM1436 628h1v1h-1zM1471 522h1v1h-1zM1471 534h1v1h-1zM1471 546h1v1h-1zM1471 557h1v1h-1zM1471 569h1v1h-1zM1471 581h1v1h-1zM1471 593h1v1h-1zM1471 604h1v1h-1zM1471 616h1v1h-1zM1471 628h1v1h-1zM1506 522h1v1h-1zM1506 534h1v1h-1zM1506 546h1v1h-1zM1506 557h1v1h-1zM1506 569h1v1h-1zM1506 581h1v1h-1zM1506 593h1v1h-1zM1506 604h1v1h-1zM1506 616h1v1h-1zM1506 628h1v1h-1zM1541 522h1v1h-1zM1541 534h1v1h-1zM1541 546h1v1h-1zM1541 557h1v1h-1zM1541 569h1v1h-1zM1541 581h1v1h-1zM1541 593h1v1h-1zM1541 604h1v1h-1zM1541 616h1v1h-1zM1541 628h1v1h-1zM1611 522h1v1h-1zM1611 534h1v1h-1zM1611 546h1v1h-1zM1611 557h1v1h-1zM1611 569h1v1h-1zM1611 581h1v1h-1zM1611 593h1v1h-1zM1611 604h1v1h-1zM1611 616h1v1h-1zM1611 628h1v1h-1zM1646 522h1v1h-1zM1646 534h1v1h-1zM1646 546h1v1h-1zM1646 557h1v1h-1zM1646 569h1v1h-1zM1646 581h1v1h-1zM1646 593h1v1h-1zM1646 604h1v1h-1zM1646 616h1v1h-1zM1646 628h1v1h-1zM1681 522h1v1h-1zM1681 534h1v1h-1zM1681 546h1v1h-1zM1681 557h1v1h-1zM1681 569h1v1h-1zM1681 581h1v1h-1zM1681 593h1v1h-1zM1681 604h1v1h-1zM1681 616h1v1h-1zM1681 628h1v1h-1zM1716 522h1v1h-1zM1716 534h1v1h-1zM1716 546h1v1h-1zM1716 557h1v1h-1zM1716 569h1v1h-1zM1716 581h1v1h-1zM1716 593h1v1h-1zM1716 604h1v1h-1zM1716 616h1v1h-1zM1716 628h1v1h-1zM38 639h1v1h-1zM38 650h1v1h-1zM38 662h1v1h-1zM38 674h1v1h-1zM38 685h1v1h-1zM38 697h1v1h-1zM38 709h1v1h-1zM38 720h1v1h-1zM38 732h1v1h-1zM38 744h1v1h-1zM73 639h1v1h-1zM73 650h1v1h-1zM73 662h1v1h-1zM73 674h1v1h-1zM73 685h1v1h-1zM73 697h1v1h-1zM73 709h1v1h-1zM73 720h1v1h-1zM73 732h1v1h-1zM73 744h1v1h-1zM108 639h1v1h-1zM108 650h1v1h-1zM108 662h1v1h-1zM108 674h1v1h-1zM108 685h1v1h-1zM108 697h1v1h-1zM108 709h1v1h-1zM108 720h1v1h-1zM108 732h1v1h-1zM108 744h1v1h-1zM143 639h1v1h-1zM143 650h1v1h-1zM143 662h1v1h-1zM143 674h1v1h-1zM143 685h1v1h-1zM143 697h1v1h-1zM143 709h1v1h-1zM143 720h1v1h-1zM143 732h1v1h-1zM143 744h1v1h-1zM213 639h1v1h-1zM213 650h1v1h-1zM213 662h1v1h-1zM213 674h1v1h-1zM213 685h1v1h-1zM213 697h1v1h-1zM213 709h1v1h-1zM213 720h1v1h-1zM213 732h1v1h-1zM213 744h1v1h-1zM248 639h1v1h-1zM248 650h1v1h-1zM248 662h1v1h-1zM248 674h1v1h-1zM248 685h1v1h-1zM248 697h1v1h-1zM248 709h1v1h-1zM248 720h1v1h-1zM248 732h1v1h-1zM248 744h1v1h-1zM283 639h1v1h-1zM283 650h1v1h-1zM283 662h1v1h-1zM283 674h1v1h-1zM283 685h1v1h-1zM283 697h1v1h-1zM283 709h1v1h-1zM283 720h1v1h-1zM283 732h1v1h-1zM283 744h1v1h-1zM318 639h1v1h-1zM318 650h1v1h-1zM318 662h1v1h-1zM318 674h1v1h-1zM318 685h1v1h-1zM318 697h1v1h-1zM318 709h1v1h-1zM318 720h1v1h-1zM318 732h1v1h-1zM318 744h1v1h-1zM388 639h1v1h-1zM388 650h1v1h-1zM388 662h1v1h-1zM388 674h1v1h-1zM388 685h1v1h-1zM388 697h1v1h-1zM388 709h1v1h-1zM388 720h1v1h-1zM388 732h1v1h-1zM388 744h1v1h-1zM423 639h1v1h-1zM423 650h1v1h-1zM423 662h1v1h-1zM423 674h1v1h-1zM423 685h1v1h-1zM423 697h1v1h-1zM423 709h1v1h-1zM423 720h1v1h-1zM423 732h1v1h-1zM423 744h1v1h-1zM458 639h1v1h-1zM458 650h1v1h-1zM458 662h1v1h-1zM458 674h1v1h-1zM458 685h1v1h-1zM458 697h1v1h-1zM458 709h1v1h-1zM458 720h1v1h-1zM458 732h1v1h-1zM458 744h1v1h-1zM493 639h1v1h-1zM493 650h1v1h-1zM493 662h1v1h-1zM493 674h1v1h-1zM493 685h1v1h-1zM493 697h1v1h-1zM493 709h1v1h-1zM493 720h1v1h-1zM493 732h1v1h-1zM493 744h1v1h-1zM563 639h1v1h-1zM563 650h1v1h-1zM563 662h1v1h-1zM563 674h1v1h-1zM563 685h1v1h-1zM563 697h1v1h-1zM563 709h1v1h-1zM563 720h1v1h-1zM563 732h1v1h-1zM563 744h1v1h-1zM598 639h1v1h-1zM598 650h1v1h-1zM598 662h1v1h-1zM598 674h1v1h-1zM598 685h1v1h-1zM598 697h1v1h-1zM598 709h1v1h-1zM598 720h1v1h-1zM598 732h1v1h-1zM598 744h1v1h-1zM633 639h1v1h-1zM633 650h1v1h-1zM633 662h1v1h-1zM633 674h1v1h-1zM633 685h1v1h-1zM633 697h1v1h-1zM633 709h1v1h-1zM633 720h1v1h-1zM633 732h1v1h-1zM633 744h1v1h-1zM668 639h1v1h-1zM668 650h1v1h-1zM668 662h1v1h-1zM668 674h1v1h-1zM668 685h1v1h-1zM668 697h1v1h-1zM668 709h1v1h-1zM668 720h1v1h-1zM668 732h1v1h-1zM668 744h1v1h-1zM737 639h1v1h-1zM737 650h1v1h-1zM737 662h1v1h-1zM737 674h1v1h-1zM737 685h1v1h-1zM737 697h1v1h-1zM737 709h1v1h-1zM737 720h1v1h-1zM737 732h1v1h-1zM737 744h1v1h-1zM772 639h1v1h-1zM772 650h1v1h-1zM772 662h1v1h-1zM772 674h1v1h-1zM772 685h1v1h-1zM772 697h1v1h-1zM772 709h1v1h-1zM772 720h1v1h-1zM772 732h1v1h-1zM772 744h1v1h-1zM807 639h1v1h-1zM807 650h1v1h-1zM807 662h1v1h-1zM807 674h1v1h-1zM807 685h1v1h-1zM807 697h1v1h-1zM807 709h1v1h-1zM807 720h1v1h-1zM807 732h1v1h-1zM807 744h1v1h-1zM842 639h1v1h-1zM842 650h1v1h-1zM842 662h1v1h-1zM842 674h1v1h-1zM842 685h1v1h-1zM842 697h1v1h-1zM842 709h1v1h-1zM842 720h1v1h-1zM842 732h1v1h-1zM842 744h1v1h-1zM912 639h1v1h-1zM912 650h1v1h-1zM912 662h1v1h-1zM912 674h1v1h-1zM912 685h1v1h-1zM912 697h1v1h-1zM912 709h1v1h-1zM912 720h1v1h-1zM912 732h1v1h-1zM912 744h1v1h-1zM947 639h1v1h-1zM947 650h1v1h-1zM947 662h1v1h-1zM947 674h1v1h-1zM947 685h1v1h-1zM947 697h1v1h-1zM947 709h1v1h-1zM947 720h1v1h-1zM947 732h1v1h-1zM947 744h1v1h-1zM982 639h1v1h-1zM982 650h1v1h-1zM982 662h1v1h-1zM982 674h1v1h-1zM982 685h1v1h-1zM982 697h1v1h-1zM982 709h1v1h-1zM982 720h1v1h-1zM982 732h1v1h-1zM982 744h1v1h-1zM1017 639h1v1h-1zM1017 650h1v1h-1zM1017 662h1v1h-1zM1017 674h1v1h-1zM1017 685h1v1h-1zM1017 697h1v1h-1zM1017 709h1v1h-1zM1017 720h1v1h-1zM1017 732h1v1h-1zM1017 744h1v1h-1zM1087 639h1v1h-1zM1087 650h1v1h-1zM1087 662h1v1h-1zM1087 674h1v1h-1zM1087 685h1v1h-1zM1087 697h1v1h-1zM1087 709h1v1h-1zM1087 720h1v1h-1zM1087 732h1v1h-1zM1087 744h1v1h-1zM1122 639h1v1h-1zM1122 650h1v1h-1zM1122 662h1v1h-1zM1122 674h1v1h-1zM1122 685h1v1h-1zM1122 697h1v1h-1zM1122 709h1v1h-1zM1122 720h1v1h-1zM1122 732h1v1h-1zM1122 744h1v1h-1zM1157 639h1v1h-1zM1157 650h1v1h-1zM1157 662h1v1h-1zM1157 674h1v1h-1zM1157 685h1v1h-1zM1157 697h1v1h-1zM1157 709h1v1h-1zM1157 720h1v1h-1zM1157 732h1v1h-1zM1157 744h1v1h-1zM1192 639h1v1h-1zM1192 650h1v1h-1zM1192 662h1v1h-1zM1192 674h1v1h-1zM1192 685h1v1h-1zM1192 697h1v1h-1zM1192 709h1v1h-1zM1192 720h1v1h-1zM1192 732h1v1h-1zM1192 744h1v1h-1zM1262 639h1v1h-1zM1262 650h1v1h-1zM1262 662h1v1h-1zM1262 674h1v1h-1zM1262 685h1v1h-1zM1262 697h1v1h-1zM1262 709h1v1h-1zM1262 720h1v1h-1zM1262 732h1v1h-1zM1262 744h1v1h-1zM1297 639h1v1h-1zM1297 650h1v1h-1zM1297 662h1v1h-1zM1297 674h1v1h-1zM1297 685h1v1h-1zM1297 697h1v1h-1zM1297 709h1v1h-1zM1297 720h1v1h-1zM1297 732h1v1h-1zM1297 744h1v1h-1zM1332 639h1v1h-1zM1332 650h1v1h-1zM1332 662h1v1h-1zM1332 674h1v1h-1zM1332 685h1v1h-1zM1332 697h1v1h-1zM1332 709h1v1h-1zM1332 720h1v1h-1zM1332 732h1v1h-1zM1332 744h1v1h-1zM1367 639h1v1h-1zM1367 650h1v1h-1zM1367 662h1v1h-1zM1367 674h1v1h-1zM1367 685h1v1h-1zM1367 697h1v1h-1zM1367 709h1v1h-1zM1367 720h1v1h-1zM1367 732h1v1h-1zM1367 744h1v1h-1zM1436 639h1v1h-1zM1436 650h1v1h-1zM1436 662h1v1h-1zM1436 674h1v1h-1zM1436 685h1v1h-1zM1436 697h1v1h-1zM1436 709h1v1h-1zM1436 720h1v1h-1zM1436 732h1v1h-1zM1436 744h1v1h-1zM1471 639h1v1h-1zM1471 650h1v1h-1zM1471 662h1v1h-1zM1471 674h1v1h-1zM1471 685h1v1h-1zM1471 697h1v1h-1zM1471 709h1v1h-1zM1471 720h1v1h-1zM1471 732h1v1h-1zM1471 744h1v1h-1zM1506 639h1v1h-1zM1506 650h1v1h-1zM1506 662h1v1h-1zM1506 674h1v1h-1zM1506 685h1v1h-1zM1506 697h1v1h-1zM1506 709h1v1h-1zM1506 720h1v1h-1zM1506 732h1v1h-1zM1506 744h1v1h-1zM1541 639h1v1h-1zM1541 650h1v1h-1zM1541 662h1v1h-1zM1541 674h1v1h-1zM1541 685h1v1h-1zM1541 697h1v1h-1zM1541 709h1v1h-1zM1541 720h1v1h-1zM1541 732h1v1h-1zM1541 744h1v1h-1zM1611 639h1v1h-1zM1611 650h1v1h-1zM1611 662h1v1h-1zM1611 674h1v1h-1zM1611 685h1v1h-1zM1611 697h1v1h-1zM1611 709h1v1h-1zM1611 720h1v1h-1zM1611 732h1v1h-1zM1611 744h1v1h-1zM1646 639h1v1h-1zM1646 650h1v1h-1zM1646 662h1v1h-1zM1646 674h1v1h-1zM1646 685h1v1h-1zM1646 697h1v1h-1zM1646 709h1v1h-1zM1646 720h1v1h-1zM1646 732h1v1h-1zM1646 744h1v1h-1zM1681 639h1v1h-1zM1681 650h1v1h-1zM1681 662h1v1h-1zM1681 674h1v1h-1zM1681 685h1v1h-1zM1681 697h1v1h-1zM1681 709h1v1h-1zM1681 720h1v1h-1zM1681 732h1v1h-1zM1681 744h1v1h-1zM1716 639h1v1h-1zM1716 650h1v1h-1zM1716 662h1v1h-1zM1716 674h1v1h-1zM1716 685h1v1h-1zM1716 697h1v1h-1zM1716 709h1v1h-1zM1716 720h1v1h-1zM1716 732h1v1h-1zM1716 744h1v1h-1zM38 756h1v1h-1zM38 767h1v1h-1zM38 779h1v1h-1zM38 791h1v1h-1zM38 802h1v1h-1zM38 814h1v1h-1zM38 826h1v1h-1zM38 837h1v1h-1zM38 849h1v1h-1zM38 861h1v1h-1zM73 756h1v1h-1zM73 767h1v1h-1zM73 779h1v1h-1zM73 791h1v1h-1zM73 802h1v1h-1zM73 814h1v1h-1zM73 826h1v1h-1zM73 837h1v1h-1zM73 849h1v1h-1zM73 861h1v1h-1zM108 756h1v1h-1zM108 767h1v1h-1zM108 779h1v1h-1zM108 791h1v1h-1zM108 802h1v1h-1zM108 814h1v1h-1zM108 826h1v1h-1zM108 837h1v1h-1zM108 849h1v1h-1zM108 861h1v1h-1zM143 756h1v1h-1zM143 767h1v1h-1zM143 779h1v1h-1zM143 791h1v1h-1zM143 802h1v1h-1zM143 814h1v1h-1zM143 826h1v1h-1zM143 837h1v1h-1zM143 849h1v1h-1zM143 861h1v1h-1zM213 756h1v1h-1zM213 767h1v1h-1zM213 779h1v1h-1zM213 791h1v1h-1zM213 802h1v1h-1zM213 814h1v1h-1zM213 826h1v1h-1zM213 837h1v1h-1zM213 849h1v1h-1zM213 861h1v1h-1zM248 756h1v1h-1zM248 767h1v1h-1zM248 779h1v1h-1zM248 791h1v1h-1zM248 802h1v1h-1zM248 814h1v1h-1zM248 826h1v1h-1zM248 837h1v1h-1zM248 849h1v1h-1zM248 861h1v1h-1zM283 756h1v1h-1zM283 767h1v1h-1zM283 779h1v1h-1zM283 791h1v1h-1zM283 802h1v1h-1zM283 814h1v1h-1zM283 826h1v1h-1zM283 837h1v1h-1zM283 849h1v1h-1zM283 861h1v1h-1zM318 756h1v1h-1zM318 767h1v1h-1zM318 779h1v1h-1zM318 791h1v1h-1zM318 802h1v1h-1zM318 814h1v1h-1zM318 826h1v1h-1zM318 837h1v1h-1zM318 849h1v1h-1zM318 861h1v1h-1zM388 756h1v1h-1zM388 767h1v1h-1zM388 779h1v1h-1zM388 791h1v1h-1zM388 802h1v1h-1zM388 814h1v1h-1zM388 826h1v1h-1zM388 837h1v1h-1zM388 849h1v1h-1zM388 861h1v1h-1zM423 756h1v1h-1zM423 767h1v1h-1zM423 779h1v1h-1zM423 791h1v1h-1zM423 802h1v1h-1zM423 814h1v1h-1zM423 826h1v1h-1zM423 837h1v1h-1zM423 849h1v1h-1zM423 861h1v1h-1zM458 756h1v1h-1zM458 767h1v1h-1zM458 779h1v1h-1zM458 791h1v1h-1zM458 802h1v1h-1zM458 814h1v1h-1zM458 826h1v1h-1zM458 837h1v1h-1zM458 849h1v1h-1zM458 861h1v1h-1zM493 756h1v1h-1zM493 767h1v1h-1zM493 779h1v1h-1zM493 791h1v1h-1zM493 802h1v1h-1zM493 814h1v1h-1zM493 826h1v1h-1zM493 837h1v1h-1zM493 849h1v1h-1zM493 861h1v1h-1zM563 756h1v1h-1zM563 767h1v1h-1zM563 779h1v1h-1zM563 791h1v1h-1zM563 802h1v1h-1zM563 814h1v1h-1zM563 826h1v1h-1zM563 837h1v1h-1zM563 849h1v1h-1zM563 861h1v1h-1zM598 756h1v1h-1zM598 767h1v1h-1zM598 779h1v1h-1zM598 791h1v1h-1zM598 802h1v1h-1zM598 814h1v1h-1zM598 826h1v1h-1zM598 837h1v1h-1zM598 849h1v1h-1zM598 861h1v1h-1zM633 756h1v1h-1zM633 767h1v1h-1zM633 779h1v1h-1zM633 791h1v1h-1zM633 802h1v1h-1zM633 814h1v1h-1zM633 826h1v1h-1zM633 837h1v1h-1zM633 849h1v1h-1zM633 861h1v1h-1zM668 756h1v1h-1zM668 767h1v1h-1zM668 779h1v1h-1zM668 791h1v1h-1zM668 802h1v1h-1zM668 814h1v1h-1zM668 826h1v1h-1zM668 837h1v1h-1zM668 849h1v1h-1zM668 861h1v1h-1zM737 756h1v1h-1zM737 767h1v1h-1zM737 779h1v1h-1zM737 791h1v1h-1zM737 802h1v1h-1zM737 814h1v1h-1zM737 826h1v1h-1zM737 837h1v1h-1zM737 849h1v1h-1zM737 861h1v1h-1zM772 756h1v1h-1zM772 767h1v1h-1zM772 779h1v1h-1zM772 791h1v1h-1zM772 802h1v1h-1zM772 814h1v1h-1zM772 826h1v1h-1zM772 837h1v1h-1zM772 849h1v1h-1zM772 861h1v1h-1zM807 756h1v1h-1zM807 767h1v1h-1zM807 779h1v1h-1zM807 791h1v1h-1zM807 802h1v1h-1zM807 814h1v1h-1zM807 826h1v1h-1zM807 837h1v1h-1zM807 849h1v1h-1zM807 861h1v1h-1zM842 756h1v1h-1zM842 767h1v1h-1zM842 779h1v1h-1zM842 791h1v1h-1zM842 802h1v1h-1zM842 814h1v1h-1zM842 826h1v1h-1zM842 837h1v1h-1zM842 849h1v1h-1zM842 861h1v1h-1zM912 756h1v1h-1zM912 767h1v1h-1zM912 779h1v1h-1zM912 791h1v1h-1zM912 802h1v1h-1zM912 814h1v1h-1zM912 826h1v1h-1zM912 837h1v1h-1zM912 849h1v1h-1zM912 861h1v1h-1zM947 756h1v1h-1zM947 767h1v1h-1zM947 779h1v1h-1zM947 791h1v1h-1zM947 802h1v1h-1zM947 814h1v1h-1zM947 826h1v1h-1zM947 837h1v1h-1zM947 849h1v1h-1zM947 861h1v1h-1zM982 756h1v1h-1zM982 767h1v1h-1zM982 779h1v1h-1zM982 791h1v1h-1zM982 802h1v1h-1zM982 814h1v1h-1zM982 826h1v1h-1zM982 837h1v1h-1zM982 849h1v1h-1zM982 861h1v1h-1zM1017 756h1v1h-1zM1017 767h1v1h-1zM1017 779h1v1h-1zM1017 791h1v1h-1zM1017 802h1v1h-1zM1017 814h1v1h-1zM1017 826h1v1h-1zM1017 837h1v1h-1zM1017 849h1v1h-1zM1017 861h1v1h-1zM1087 756h1v1h-1zM1087 767h1v1h-1zM1087 779h1v1h-1zM1087 791h1v1h-1zM1087 802h1v1h-1zM1087 814h1v1h-1zM1087 826h1v1h-1zM1087 837h1v1h-1zM1087 849h1v1h-1zM1087 861h1v1h-1zM1122 756h1v1h-1zM1122 767h1v1h-1zM1122 779h1v1h-1zM1122 791h1v1h-1zM1122 802h1v1h-1zM1122 814h1v1h-1zM1122 826h1v1h-1zM1122 837h1v1h-1zM1122 849h1v1h-1zM1122 861h1v1h-1zM1157 756h1v1h-1zM1157 767h1v1h-1zM1157 779h1v1h-1zM1157 791h1v1h-1zM1157 802h1v1h-1zM1157 814h1v1h-1zM1157 826h1v1h-1zM1157 837h1v1h-1zM1157 849h1v1h-1zM1157 861h1v1h-1zM1192 756h1v1h-1zM1192 767h1v1h-1zM1192 779h1v1h-1zM1192 791h1v1h-1zM1192 802h1v1h-1zM1192 814h1v1h-1zM1192 826h1v1h-1zM1192 837h1v1h-1zM1192 849h1v1h-1zM1192 861h1v1h-1zM1262 756h1v1h-1zM1262 767h1v1h-1zM1262 779h1v1h-1zM1262 791h1v1h-1zM1262 802h1v1h-1zM1262 814h1v1h-1zM1262 826h1v1h-1zM1262 837h1v1h-1zM1262 849h1v1h-1zM1262 861h1v1h-1zM1297 756h1v1h-1zM1297 767h1v1h-1zM1297 779h1v1h-1zM1297 791h1v1h-1zM1297 802h1v1h-1zM1297 814h1v1h-1zM1297 826h1v1h-1zM1297 837h1v1h-1zM1297 849h1v1h-1zM1297 861h1v1h-1zM1332 756h1v1h-1zM1332 767h1v1h-1zM1332 779h1v1h-1zM1332 791h1v1h-1zM1332 802h1v1h-1zM1332 814h1v1h-1zM1332 826h1v1h-1zM1332 837h1v1h-1zM1332 849h1v1h-1zM1332 861h1v1h-1zM1367 756h1v1h-1zM1367 767h1v1h-1zM1367 779h1v1h-1zM1367 791h1v1h-1zM1367 802h1v1h-1zM1367 814h1v1h-1zM1367 826h1v1h-1zM1367 837h1v1h-1zM1367 849h1v1h-1zM1367 861h1v1h-1zM1436 756h1v1h-1zM1436 767h1v1h-1zM1436 779h1v1h-1zM1436 791h1v1h-1zM1436 802h1v1h-1zM1436 814h1v1h-1zM1436 826h1v1h-1zM1436 837h1v1h-1zM1436 849h1v1h-1zM1436 861h1v1h-1zM1471 756h1v1h-1zM1471 767h1v1h-1zM1471 779h1v1h-1zM1471 791h1v1h-1zM1471 802h1v1h-1zM1471 814h1v1h-1zM1471 826h1v1h-1zM1471 837h1v1h-1zM1471 849h1v1h-1zM1471 861h1v1h-1zM1506 756h1v1h-1zM1506 767h1v1h-1zM1506 779h1v1h-1zM1506 791h1v1h-1zM1506 802h1v1h-1zM1506 814h1v1h-1zM1506 826h1v1h-1zM1506 837h1v1h-1zM1506 849h1v1h-1zM1506 861h1v1h-1zM1541 756h1v1h-1zM1541 767h1v1h-1zM1541 779h1v1h-1zM1541 791h1v1h-1zM1541 802h1v1h-1zM1541 814h1v1h-1zM1541 826h1v1h-1zM1541 837h1v1h-1zM1541 849h1v1h-1zM1541 861h1v1h-1zM1611 756h1v1h-1zM1611 767h1v1h-1zM1611 779h1v1h-1zM1611 791h1v1h-1zM1611 802h1v1h-1zM1611 814h1v1h-1zM1611 826h1v1h-1zM1611 837h1v1h-1zM1611 849h1v1h-1zM1611 861h1v1h-1zM1646 756h1v1h-1zM1646 767h1v1h-1zM1646 779h1v1h-1zM1646 791h1v1h-1zM1646 802h1v1h-1zM1646 814h1v1h-1zM1646 826h1v1h-1zM1646 837h1v1h-1zM1646 849h1v1h-1zM1646 861h1v1h-1zM1681 756h1v1h-1zM1681 767h1v1h-1zM1681 779h1v1h-1zM1681 791h1v1h-1zM1681 802h1v1h-1zM1681 814h1v1h-1zM1681 826h1v1h-1zM1681 837h1v1h-1zM1681 849h1v1h-1zM1681 861h1v1h-1zM1716 756h1v1h-1zM1716 767h1v1h-1zM1716 779h1v1h-1zM1716 791h1v1h-1zM1716 802h1v1h-1zM1716 814h1v1h-1zM1716 826h1v1h-1zM1716 837h1v1h-1zM1716 849h1v1h-1zM1716 861h1v1h-1zM38 874h1v1h-1zM38 885h1v1h-1zM38 897h1v1h-1zM38 909h1v1h-1zM38 920h1v1h-1zM38 932h1v1h-1zM38 944h1v1h-1zM38 955h1v1h-1zM38 967h1v1h-1zM38 979h1v1h-1zM73 874h1v1h-1zM73 885h1v1h-1zM73 897h1v1h-1zM73 909h1v1h-1zM73 920h1v1h-1zM73 932h1v1h-1zM73 944h1v1h-1zM73 955h1v1h-1zM73 967h1v1h-1zM73 979h1v1h-1zM108 874h1v1h-1zM108 885h1v1h-1zM108 897h1v1h-1zM108 909h1v1h-1zM108 920h1v1h-1zM108 932h1v1h-1zM108 944h1v1h-1zM108 955h1v1h-1zM108 967h1v1h-1zM108 979h1v1h-1zM143 874h1v1h-1zM143 885h1v1h-1zM143 897h1v1h-1zM143 909h1v1h-1zM143 920h1v1h-1zM143 932h1v1h-1zM143 944h1v1h-1zM143 955h1v1h-1zM143 967h1v1h-1zM143 979h1v1h-1zM213 874h1v1h-1zM213 885h1v1h-1zM213 897h1v1h-1zM213 909h1v1h-1zM213 920h1v1h-1zM213 932h1v1h-1zM213 944h1v1h-1zM213 955h1v1h-1zM213 967h1v1h-1zM213 979h1v1h-1zM248 874h1v1h-1zM248 885h1v1h-1zM248 897h1v1h-1zM248 909h1v1h-1zM248 920h1v1h-1zM248 932h1v1h-1zM248 944h1v1h-1zM248 955h1v1h-1zM248 967h1v1h-1zM248 979h1v1h-1zM283 874h1v1h-1zM283 885h1v1h-1zM283 897h1v1h-1zM283 909h1v1h-1zM283 920h1v1h-1zM283 932h1v1h-1zM283 944h1v1h-1zM283 955h1v1h-1zM283 967h1v1h-1zM283 979h1v1h-1zM318 874h1v1h-1zM318 885h1v1h-1zM318 897h1v1h-1zM318 909h1v1h-1zM318 920h1v1h-1zM318 932h1v1h-1zM318 944h1v1h-1zM318 955h1v1h-1zM318 967h1v1h-1zM318 979h1v1h-1zM388 874h1v1h-1zM388 885h1v1h-1zM388 897h1v1h-1zM388 909h1v1h-1zM388 920h1v1h-1zM388 932h1v1h-1zM388 944h1v1h-1zM388 955h1v1h-1zM388 967h1v1h-1zM388 979h1v1h-1zM423 874h1v1h-1zM423 885h1v1h-1zM423 897h1v1h-1zM423 909h1v1h-1zM423 920h1v1h-1zM423 932h1v1h-1zM423 944h1v1h-1zM423 955h1v1h-1zM423 967h1v1h-1zM423 979h1v1h-1zM458 874h1v1h-1zM458 885h1v1h-1zM458 897h1v1h-1zM458 909h1v1h-1zM458 920h1v1h-1zM458 932h1v1h-1zM458 944h1v1h-1zM458 955h1v1h-1zM458 967h1v1h-1zM458 979h1v1h-1zM493 874h1v1h-1zM493 885h1v1h-1zM493 897h1v1h-1zM493 909h1v1h-1zM493 920h1v1h-1zM493 932h1v1h-1zM493 944h1v1h-1zM493 955h1v1h-1zM493 967h1v1h-1zM493 979h1v1h-1zM563 874h1v1h-1zM563 885h1v1h-1zM563 897h1v1h-1zM563 909h1v1h-1zM563 920h1v1h-1zM563 932h1v1h-1zM563 944h1v1h-1zM563 955h1v1h-1zM563 967h1v1h-1zM563 979h1v1h-1zM598 874h1v1h-1zM598 885h1v1h-1zM598 897h1v1h-1zM598 909h1v1h-1zM598 920h1v1h-1zM598 932h1v1h-1zM598 944h1v1h-1zM598 955h1v1h-1zM598 967h1v1h-1zM598 979h1v1h-1zM633 874h1v1h-1zM633 885h1v1h-1zM633 897h1v1h-1zM633 909h1v1h-1zM633 920h1v1h-1zM633 932h1v1h-1zM633 944h1v1h-1zM633 955h1v1h-1zM633 967h1v1h-1zM633 979h1v1h-1zM668 874h1v1h-1zM668 885h1v1h-1zM668 897h1v1h-1zM668 909h1v1h-1zM668 920h1v1h-1zM668 932h1v1h-1zM668 944h1v1h-1zM668 955h1v1h-1zM668 967h1v1h-1zM668 979h1v1h-1zM737 874h1v1h-1zM737 885h1v1h-1zM737 897h1v1h-1zM737 909h1v1h-1zM737 920h1v1h-1zM737 932h1v1h-1zM737 944h1v1h-1zM737 955h1v1h-1zM737 967h1v1h-1zM737 979h1v1h-1zM772 874h1v1h-1zM772 885h1v1h-1zM772 897h1v1h-1zM772 909h1v1h-1zM772 920h1v1h-1zM772 932h1v1h-1zM772 944h1v1h-1zM772 955h1v1h-1zM772 967h1v1h-1zM772 979h1v1h-1zM807 874h1v1h-1zM807 885h1v1h-1zM807 897h1v1h-1zM807 909h1v1h-1zM807 920h1v1h-1zM807 932h1v1h-1zM807 944h1v1h-1zM807 955h1v1h-1zM807 967h1v1h-1zM807 979h1v1h-1zM842 874h1v1h-1zM842 885h1v1h-1zM842 897h1v1h-1zM842 909h1v1h-1zM842 920h1v1h-1zM842 932h1v1h-1zM842 944h1v1h-1zM842 955h1v1h-1zM842 967h1v1h-1zM842 979h1v1h-1zM912 874h1v1h-1zM912 885h1v1h-1zM912 897h1v1h-1zM912 909h1v1h-1zM912 920h1v1h-1zM912 932h1v1h-1zM912 944h1v1h-1zM912 955h1v1h-1zM912 967h1v1h-1zM912 979h1v1h-1zM947 874h1v1h-1zM947 885h1v1h-1zM947 897h1v1h-1zM947 909h1v1h-1zM947 920h1v1h-1zM947 932h1v1h-1zM947 944h1v1h-1zM947 955h1v1h-1zM947 967h1v1h-1zM947 979h1v1h-1zM982 874h1v1h-1zM982 885h1v1h-1zM982 897h1v1h-1zM982 909h1v1h-1zM982 920h1v1h-1zM982 932h1v1h-1zM982 944h1v1h-1zM982 955h1v1h-1zM982 967h1v1h-1zM982 979h1v1h-1zM1017 874h1v1h-1zM1017 885h1v1h-1zM1017 897h1v1h-1zM1017 909h1v1h-1zM1017 920h1v1h-1zM1017 932h1v1h-1zM1017 944h1v1h-1zM1017 955h1v1h-1zM1017 967h1v1h-1zM1017 979h1v1h-1zM1087 874h1v1h-1zM1087 885h1v1h-1zM1087 897h1v1h-1zM1087 909h1v1h-1zM1087 920h1v1h-1zM1087 932h1v1h-1zM1087 944h1v1h-1zM1087 955h1v1h-1zM1087 967h1v1h-1zM1087 979h1v1h-1zM1122 874h1v1h-1zM1122 885h1v1h-1zM1122 897h1v1h-1zM1122 909h1v1h-1zM1122 920h1v1h-1zM1122 932h1v1h-1zM1122 944h1v1h-1zM1122 955h1v1h-1zM1122 967h1v1h-1zM1122 979h1v1h-1zM1157 874h1v1h-1zM1157 885h1v1h-1zM1157 897h1v1h-1zM1157 909h1v1h-1zM1157 920h1v1h-1zM1157 932h1v1h-1zM1157 944h1v1h-1zM1157 955h1v1h-1zM1157 967h1v1h-1zM1157 979h1v1h-1zM1192 874h1v1h-1zM1192 885h1v1h-1zM1192 897h1v1h-1zM1192 909h1v1h-1zM1192 920h1v1h-1zM1192 932h1v1h-1zM1192 944h1v1h-1zM1192 955h1v1h-1zM1192 967h1v1h-1zM1192 979h1v1h-1zM1262 874h1v1h-1zM1262 885h1v1h-1zM1262 897h1v1h-1zM1262 909h1v1h-1zM1262 920h1v1h-1zM1262 932h1v1h-1zM1262 944h1v1h-1zM1262 955h1v1h-1zM1262 967h1v1h-1zM1262 979h1v1h-1zM1297 874h1v1h-1zM1297 885h1v1h-1zM1297 897h1v1h-1zM1297 909h1v1h-1zM1297 920h1v1h-1zM1297 932h1v1h-1zM1297 944h1v1h-1zM1297 955h1v1h-1zM1297 967h1v1h-1zM1297 979h1v1h-1zM1332 874h1v1h-1zM1332 885h1v1h-1zM1332 897h1v1h-1zM1332 909h1v1h-1zM1332 920h1v1h-1zM1332 932h1v1h-1zM1332 944h1v1h-1zM1332 955h1v1h-1zM1332 967h1v1h-1zM1332 979h1v1h-1zM1367 874h1v1h-1zM1367 885h1v1h-1zM1367 897h1v1h-1zM1367 909h1v1h-1zM1367 920h1v1h-1zM1367 932h1v1h-1zM1367 944h1v1h-1zM1367 955h1v1h-1zM1367 967h1v1h-1zM1367 979h1v1h-1zM1436 874h1v1h-1zM1436 885h1v1h-1zM1436 897h1v1h-1zM1436 909h1v1h-1zM1436 920h1v1h-1zM1436 932h1v1h-1zM1436 944h1v1h-1zM1436 955h1v1h-1zM1436 967h1v1h-1zM1436 979h1v1h-1zM1471 874h1v1h-1zM1471 885h1v1h-1zM1471 897h1v1h-1zM1471 909h1v1h-1zM1471 920h1v1h-1zM1471 932h1v1h-1zM1471 944h1v1h-1zM1471 955h1v1h-1zM1471 967h1v1h-1zM1471 979h1v1h-1zM1506 874h1v1h-1zM1506 885h1v1h-1zM1506 897h1v1h-1zM1506 909h1v1h-1zM1506 920h1v1h-1zM1506 932h1v1h-1zM1506 944h1v1h-1zM1506 955h1v1h-1zM1506 967h1v1h-1zM1506 979h1v1h-1zM1541 874h1v1h-1zM1541 885h1v1h-1zM1541 897h1v1h-1zM1541 909h1v1h-1zM1541 920h1v1h-1zM1541 932h1v1h-1zM1541 944h1v1h-1zM1541 955h1v1h-1zM1541 967h1v1h-1zM1541 979h1v1h-1zM1611 874h1v1h-1zM1611 885h1v1h-1zM1611 897h1v1h-1zM1611 909h1v1h-1zM1611 920h1v1h-1zM1611 932h1v1h-1zM1611 944h1v1h-1zM1611 955h1v1h-1zM1611 967h1v1h-1zM1611 979h1v1h-1zM1646 874h1v1h-1zM1646 885h1v1h-1zM1646 897h1v1h-1zM1646 909h1v1h-1zM1646 920h1v1h-1zM1646 932h1v1h-1zM1646 944h1v1h-1zM1646 955h1v1h-1zM1646 967h1v1h-1zM1646 979h1v1h-1zM1681 874h1v1h-1zM1681 885h1v1h-1zM1681 897h1v1h-1zM1681 909h1v1h-1zM1681 920h1v1h-1zM1681 932h1v1h-1zM1681 944h1v1h-1zM1681 955h1v1h-1zM1681 967h1v1h-1zM1681 979h1v1h-1zM1716 874h1v1h-1zM1716 885h1v1h-1zM1716 897h1v1h-1zM1716 909h1v1h-1zM1716 920h1v1h-1zM1716 932h1v1h-1zM1716 944h1v1h-1zM1716 955h1v1h-1zM1716 967h1v1h-1zM1716 979h1v1h-1z" fill="#bdbdbd"/><line x1="3.5" y1="54" x2="3.5" y2="992" stroke="#bdbdbd" stroke-width="1" stroke-dasharray="1 1 1 1 1 2"/><line x1="353.5" y1="54" x2="353.5" y2="992" stroke="#bdbdbd" stroke-width="1" stroke-dasharray="1 1 1 1 1 2"/><line x1="528.5" y1="54" x2="528.5" y2="992" stroke="#bdbdbd" stroke-width="1" stroke-dasharray="1 1 1 1 1 2"/><line x1="702.5" y1="54" x2="702.5" y2="992" stroke="#bdbdbd" stroke-width="1" stroke-dasharray="1 1 1 1 1 2"/><line x1="877.5" y1="54" x2="877.5" y2="992" stroke="#bdbdbd" stroke-width="1" stroke-dasharray="1 1 1 1 1 2"/><line x1="1052.5" y1="54" x2="1052.5" y2="992" stroke="#bdbdbd" stroke-width="1" stroke-dasharray="1 1 1 1 1 2"/><line x1="1226.5" y1="54" x2="1226.5" y2="992" stroke="#bdbdbd" stroke-width="1" stroke-dasharray="1 1 1 1 1 2"/><line x1="1401.5" y1="54" x2="1401.5" y2="992" stroke="#bdbdbd" stroke-width="1" stroke-dasharray="1 1 1 1 1 2"/><line x1="1576.5" y1="54" x2="1576.5" y2="992" stroke="#bdbdbd" stroke-width="1" stroke-dasharray="1 1 1 1 1 2"/><rect x="3" y="169" width="1748" height="2" fill="#767676" /><rect x="3" y="286" width="1748" height="2" fill="#767676" /><rect x="3" y="403" width="1748" height="2" fill="#767676" /><rect x="3" y="520" width="1748" height="2" fill="#767676" /><rect x="3" y="637" width="1748" height="2" fill="#767676" /><rect x="3" y="754" width="1748" height="2" fill="#767676" /><rect x="3" y="871" width="1748" height="2" fill="#767676" /><rect x="587" y="41" width="580" height="2" fill="#b8b8b8" /><path d="M593 33.5H586.5V49.5H593M1161 33.5H1167.5V49.5H1161" fill="none" stroke="#e4e4e4" stroke-width="1.3"/><path d="M636 30H652L644 35.5Z" fill="#f28a1e"/><path d="M637.5 37.5H650.5V50H647L644 53L641 50H637.5Z" fill="#111" stroke="#f28a1e" stroke-width="1.5"/><text x="640.48" y="47.60" font-size="11.63" font-weight="bold" fill="#f28a1e" textLength="7.04" lengthAdjust="spacingAndGlyphs" >T</text><rect x="1723.5" y="105.9" width="22.5" height="13" fill="#000"/><text x="1724.93" y="116.90" font-size="13.04" font-weight="normal" fill="#ecec2c" textLength="20.15" lengthAdjust="spacingAndGlyphs" >0 V</text><rect x="1719.1" y="129.2" width="26.9" height="13" fill="#000"/><text x="1720.51" y="140.25" font-size="13.04" font-weight="normal" fill="#ecec2c" textLength="24.62" lengthAdjust="spacingAndGlyphs" >-8 V</text><rect x="1711.6" y="152.6" width="34.4" height="13" fill="#000"/><text x="1712.99" y="163.60" font-size="13.04" font-weight="normal" fill="#ecec2c" textLength="32.08" lengthAdjust="spacingAndGlyphs" >-16 V</text><rect x="1697.5" y="176.2" width="48.5" height="13" fill="#000"/><text x="1698.83" y="187.20" font-size="13.04" font-weight="normal" fill="#22c2cc" textLength="46.26" lengthAdjust="spacingAndGlyphs" >200 mV</text><rect x="1697.8" y="199.6" width="48.2" height="13" fill="#000"/><text x="1698.83" y="210.55" font-size="13.04" font-weight="normal" fill="#22c2cc" textLength="46.26" lengthAdjust="spacingAndGlyphs" >100 mV</text><rect x="1723.5" y="222.9" width="22.5" height="13" fill="#000"/><text x="1724.93" y="233.90" font-size="13.04" font-weight="normal" fill="#22c2cc" textLength="20.15" lengthAdjust="spacingAndGlyphs" >0 V</text><rect x="1693.0" y="246.2" width="53.0" height="13" fill="#000"/><text x="1694.40" y="257.25" font-size="13.04" font-weight="normal" fill="#22c2cc" textLength="50.73" lengthAdjust="spacingAndGlyphs" >-100 mV</text><rect x="1693.0" y="269.6" width="53.0" height="13" fill="#000"/><text x="1694.40" y="280.60" font-size="13.04" font-weight="normal" fill="#22c2cc" textLength="50.73" lengthAdjust="spacingAndGlyphs" >-200 mV</text><rect x="1697.1" y="293.2" width="48.9" height="13" fill="#000"/><text x="1698.83" y="304.20" font-size="13.04" font-weight="normal" fill="#e8485e" textLength="46.26" lengthAdjust="spacingAndGlyphs" >400 mV</text><rect x="1697.5" y="316.5" width="48.5" height="13" fill="#000"/><text x="1698.83" y="327.55" font-size="13.04" font-weight="normal" fill="#e8485e" textLength="46.26" lengthAdjust="spacingAndGlyphs" >200 mV</text><rect x="1723.5" y="339.9" width="22.5" height="13" fill="#000"/><text x="1724.93" y="350.90" font-size="13.04" font-weight="normal" fill="#e8485e" textLength="20.15" lengthAdjust="spacingAndGlyphs" >0 V</text><rect x="1693.0" y="363.2" width="53.0" height="13" fill="#000"/><text x="1694.40" y="374.25" font-size="13.04" font-weight="normal" fill="#e8485e" textLength="50.73" lengthAdjust="spacingAndGlyphs" >-200 mV</text><rect x="1693.0" y="386.6" width="53.0" height="13" fill="#000"/><text x="1694.40" y="397.60" font-size="13.04" font-weight="normal" fill="#e8485e" textLength="50.73" lengthAdjust="spacingAndGlyphs" >-400 mV</text><rect x="1700.5" y="412.7" width="45.5" height="13" fill="#000"/><text x="1701.85" y="423.70" font-size="13.04" font-weight="normal" fill="#8cc83c" textLength="43.26" lengthAdjust="spacingAndGlyphs" >-50 mV</text><rect x="1693.0" y="435.8" width="53.0" height="13" fill="#000"/><text x="1694.40" y="446.75" font-size="13.04" font-weight="normal" fill="#8cc83c" textLength="50.73" lengthAdjust="spacingAndGlyphs" >-150 mV</text><rect x="1693.0" y="458.8" width="53.0" height="13" fill="#000"/><text x="1694.40" y="469.80" font-size="13.04" font-weight="normal" fill="#8cc83c" textLength="50.73" lengthAdjust="spacingAndGlyphs" >-250 mV</text><rect x="1693.0" y="481.9" width="53.0" height="13" fill="#000"/><text x="1694.40" y="492.85" font-size="13.04" font-weight="normal" fill="#8cc83c" textLength="50.73" lengthAdjust="spacingAndGlyphs" >-350 mV</text><rect x="1693.0" y="504.9" width="53.0" height="13" fill="#000"/><text x="1694.40" y="515.90" font-size="13.04" font-weight="normal" fill="#8cc83c" textLength="50.73" lengthAdjust="spacingAndGlyphs" >-450 mV</text><rect x="1723.5" y="527.6" width="22.5" height="13" fill="#000"/><text x="1724.93" y="538.60" font-size="13.04" font-weight="normal" fill="#f6921e" textLength="20.15" lengthAdjust="spacingAndGlyphs" >0 V</text><rect x="1693.0" y="550.7" width="53.0" height="13" fill="#000"/><text x="1694.40" y="561.70" font-size="13.04" font-weight="normal" fill="#f6921e" textLength="50.73" lengthAdjust="spacingAndGlyphs" >-100 mV</text><rect x="1693.0" y="573.8" width="53.0" height="13" fill="#000"/><text x="1694.40" y="584.80" font-size="13.04" font-weight="normal" fill="#f6921e" textLength="50.73" lengthAdjust="spacingAndGlyphs" >-200 mV</text><rect x="1693.0" y="596.9" width="53.0" height="13" fill="#000"/><text x="1694.40" y="607.90" font-size="13.04" font-weight="normal" fill="#f6921e" textLength="50.73" lengthAdjust="spacingAndGlyphs" >-300 mV</text><rect x="1693.0" y="620.0" width="53.0" height="13" fill="#000"/><text x="1694.40" y="631.00" font-size="13.04" font-weight="normal" fill="#f6921e" textLength="50.73" lengthAdjust="spacingAndGlyphs" >-400 mV</text><rect x="1723.2" y="644.2" width="22.8" height="13" fill="#000"/><text x="1724.93" y="655.20" font-size="13.04" font-weight="normal" fill="#2e2ed0" textLength="20.15" lengthAdjust="spacingAndGlyphs" >4 V</text><rect x="1723.6" y="667.5" width="22.4" height="13" fill="#000"/><text x="1724.93" y="678.55" font-size="13.04" font-weight="normal" fill="#2e2ed0" textLength="20.15" lengthAdjust="spacingAndGlyphs" >2 V</text><rect x="1723.5" y="690.9" width="22.5" height="13" fill="#000"/><text x="1724.93" y="701.90" font-size="13.04" font-weight="normal" fill="#2e2ed0" textLength="20.15" lengthAdjust="spacingAndGlyphs" >0 V</text><rect x="1719.1" y="714.2" width="26.9" height="13" fill="#000"/><text x="1720.51" y="725.25" font-size="13.04" font-weight="normal" fill="#2e2ed0" textLength="24.62" lengthAdjust="spacingAndGlyphs" >-2 V</text><rect x="1719.1" y="737.6" width="26.9" height="13" fill="#000"/><text x="1720.51" y="748.60" font-size="13.04" font-weight="normal" fill="#2e2ed0" textLength="24.62" lengthAdjust="spacingAndGlyphs" >-4 V</text><rect x="1715.8" y="761.2" width="30.2" height="13" fill="#000"/><text x="1717.49" y="772.20" font-size="13.04" font-weight="normal" fill="#e452b4" textLength="27.61" lengthAdjust="spacingAndGlyphs" >40 V</text><rect x="1716.2" y="784.5" width="29.8" height="13" fill="#000"/><text x="1717.49" y="795.55" font-size="13.04" font-weight="normal" fill="#e452b4" textLength="27.61" lengthAdjust="spacingAndGlyphs" >20 V</text><rect x="1723.5" y="807.9" width="22.5" height="13" fill="#000"/><text x="1724.93" y="818.90" font-size="13.04" font-weight="normal" fill="#e452b4" textLength="20.15" lengthAdjust="spacingAndGlyphs" >0 V</text><rect x="1711.6" y="831.2" width="34.4" height="13" fill="#000"/><text x="1712.99" y="842.25" font-size="13.04" font-weight="normal" fill="#e452b4" textLength="32.08" lengthAdjust="spacingAndGlyphs" >-20 V</text><rect x="1711.6" y="854.6" width="34.4" height="13" fill="#000"/><text x="1712.99" y="865.60" font-size="13.04" font-weight="normal" fill="#e452b4" textLength="32.08" lengthAdjust="spacingAndGlyphs" >-40 V</text><rect x="1723.5" y="879.2" width="22.5" height="13" fill="#000"/><text x="1724.93" y="890.20" font-size="13.04" font-weight="normal" fill="#12d8a2" textLength="20.15" lengthAdjust="spacingAndGlyphs" >8 V</text><rect x="1723.5" y="925.9" width="22.5" height="13" fill="#000"/><text x="1724.93" y="936.90" font-size="13.04" font-weight="normal" fill="#12d8a2" textLength="20.15" lengthAdjust="spacingAndGlyphs" >0 V</text><rect x="1719.1" y="949.2" width="26.9" height="13" fill="#000"/><text x="1720.51" y="960.25" font-size="13.04" font-weight="normal" fill="#12d8a2" textLength="24.62" lengthAdjust="spacingAndGlyphs" >-4 V</text><rect x="1719.1" y="972.6" width="26.9" height="13" fill="#000"/><text x="1720.51" y="983.60" font-size="13.04" font-weight="normal" fill="#12d8a2" textLength="24.62" lengthAdjust="spacingAndGlyphs" >-8 V</text><line x1="3" y1="346.5" x2="1751" y2="346.5" stroke="#e8485e" stroke-width="1.3"/><line x1="3" y1="814.5" x2="1751" y2="814.5" stroke="#e452b4" stroke-width="1.3"/><line x1="3" y1="229.5" x2="1751" y2="229.5" stroke="#22c2cc" stroke-width="1.8"/><path d="M730.5 229.5v4M731.5 229.5v1M733.5 229.5v4M738.5 229.5v2M739.5 229.5v2M740.5 229.5v4M741.5 229.5v4M742.5 229.5v2M744.5 229.5v2M745.5 229.5v3M749.5 229.5v3M750.5 229.5v2M751.5 229.5v2M752.5 229.5v2M753.5 229.5v3M754.5 229.5v2M761.5 229.5v3M763.5 229.5v2M768.5 229.5v2M769.5 229.5v8M770.5 229.5v4M771.5 229.5v2M777.5 229.5v2M781.5 229.5v3M785.5 229.5v10M786.5 229.5v5M787.5 229.5v3M788.5 229.5v2M789.5 229.5v2M791.5 229.5v2M793.5 229.5v2M797.5 229.5v2M799.5 229.5v5M800.5 229.5v14M801.5 229.5v5M802.5 229.5v3M803.5 229.5v10M804.5 229.5v3M805.5 229.5v3M806.5 229.5v2M807.5 229.5v3M808.5 229.5v8M809.5 229.5v3M810.5 229.5v2M811.5 229.5v2M813.5 229.5v6M814.5 229.5v2M815.5 229.5v3M817.5 229.5v2M825.5 229.5v4M827.5 229.5v10M828.5 229.5v3M829.5 229.5v3M830.5 229.5v2M831.5 229.5v12M832.5 229.5v5M833.5 229.5v3M834.5 229.5v2M835.5 229.5v2M836.5 229.5v2M838.5 229.5v3M845.5 229.5v4M846.5 229.5v10M847.5 229.5v4M848.5 229.5v3M849.5 229.5v6M850.5 229.5v3M851.5 229.5v1M856.5 229.5v4M857.5 229.5v10M858.5 229.5v3M859.5 229.5v3M860.5 229.5v2M864.5 229.5v5M865.5 229.5v12M866.5 229.5v4M867.5 229.5v4M868.5 229.5v2M869.5 229.5v2M871.5 229.5v4M872.5 229.5v3M873.5 229.5v8M874.5 229.5v2M875.5 229.5v4M879.5 229.5v3M881.5 229.5v6M882.5 229.5v3M883.5 229.5v1M889.5 229.5v2M900.5 229.5v3M901.5 229.5v10M902.5 229.5v4M903.5 229.5v3M904.5 229.5v2M907.5 229.5v2M909.5 229.5v2M912.5 229.5v3M914.5 229.5v3M917.5 229.5v2M923.5 229.5v3M924.5 229.5v8M925.5 229.5v3M926.5 229.5v2M927.5 229.5v2M928.5 229.5v2M932.5 229.5v2M936.5 229.5v2M942.5 229.5v3M944.5 229.5v2M945.5 229.5v3M948.5 229.5v5M949.5 229.5v5M950.5 229.5v8M951.5 229.5v4M952.5 229.5v3M953.5 229.5v3M954.5 229.5v3M955.5 229.5v3M968.5 229.5v2M970.5 229.5v4M972.5 229.5v4M973.5 229.5v4M974.5 229.5v2M976.5 229.5v2M977.5 229.5v3M980.5 229.5v2M987.5 229.5v6M988.5 229.5v3M991.5 229.5v2M992.5 229.5v2M994.5 229.5v2M995.5 229.5v8M996.5 229.5v2M997.5 229.5v2M999.5 229.5v2M1001.5 229.5v2M1003.5 229.5v3M1006.5 229.5v2M1012.5 229.5v2M1017.5 229.5v2M1020.5 229.5v3M1021.5 229.5v8M1022.5 229.5v4M1024.5 229.5v2M1027.5 229.5v3M1028.5 229.5v2M1033.5 229.5v2M1034.5 229.5v8M1035.5 229.5v3M1036.5 229.5v2M1037.5 229.5v3M1039.5 229.5v2M1040.5 229.5v3M1043.5 229.5v2M1044.5 229.5v2M1045.5 229.5v2M1052.5 229.5v6M1053.5 229.5v3M1054.5 229.5v4M1055.5 229.5v2M1056.5 229.5v1M1058.5 229.5v4M1059.5 229.5v2M1061.5 229.5v2M1063.5 229.5v2M1064.5 229.5v2M1067.5 229.5v6M1068.5 229.5v3M1069.5 229.5v2M1071.5 229.5v2M1072.5 229.5v2M1073.5 229.5v2M1078.5 229.5v2M1082.5 229.5v3M1085.5 229.5v3M1089.5 229.5v2M1092.5 229.5v6M1093.5 229.5v4M1095.5 229.5v2M1097.5 229.5v6M1098.5 229.5v2M1100.5 229.5v2M1101.5 229.5v3M1105.5 229.5v2M1106.5 229.5v3M1109.5 229.5v2M1112.5 229.5v3M1114.5 229.5v2M1115.5 229.5v2M1120.5 229.5v4M1124.5 229.5v3M1125.5 229.5v4M1126.5 229.5v2M1130.5 229.5v2M1132.5 229.5v2M1133.5 229.5v2M1137.5 229.5v2M1138.5 229.5v2M1140.5 229.5v2M1143.5 229.5v2M1145.5 229.5v2M1146.5 229.5v2M1149.5 229.5v2M1150.5 229.5v4M1153.5 229.5v2M1154.5 229.5v4M1155.5 229.5v2M1156.5 229.5v2M1160.5 229.5v2M1161.5 229.5v2M1162.5 229.5v2M1163.5 229.5v4M1165.5 229.5v2M1167.5 229.5v2M1168.5 229.5v3M1169.5 229.5v2M1170.5 229.5v2M1171.5 229.5v3M1175.5 229.5v3M1176.5 229.5v2M1177.5 229.5v2M1181.5 229.5v2M1183.5 229.5v3M1185.5 229.5v2M1186.5 229.5v2M1187.5 229.5v2M1188.5 229.5v3M1189.5 229.5v4M1191.5 229.5v3M1195.5 229.5v2M1196.5 229.5v2M1197.5 229.5v3M1199.5 229.5v2M1200.5 229.5v3M1204.5 229.5v2M1205.5 229.5v4M1207.5 229.5v2M1208.5 229.5v3M1209.5 229.5v3M1210.5 229.5v4M1211.5 229.5v2M1214.5 229.5v3M1215.5 229.5v2M1217.5 229.5v4M1218.5 229.5v3M1223.5 229.5v2M1226.5 229.5v2M1227.5 229.5v2M1228.5 229.5v2M1231.5 229.5v2M1233.5 229.5v3M1234.5 229.5v2M1236.5 229.5v4M1237.5 229.5v4M1239.5 229.5v2M1245.5 229.5v3M1246.5 229.5v2M1248.5 229.5v2M1250.5 229.5v4M1252.5 229.5v2M1255.5 229.5v3M1263.5 229.5v2M1265.5 229.5v2M1268.5 229.5v2M1269.5 229.5v4M1270.5 229.5v3M1272.5 229.5v2M1273.5 229.5v2M1274.5 229.5v2M1275.5 229.5v3M1276.5 229.5v2M1277.5 229.5v3M1283.5 229.5v3M1285.5 229.5v2M1286.5 229.5v3M1287.5 229.5v2M1290.5 229.5v4M1292.5 229.5v3M1293.5 229.5v2M1295.5 229.5v2M1298.5 229.5v2M1299.5 229.5v2M1300.5 229.5v3M1305.5 229.5v2M1306.5 229.5v2M1307.5 229.5v3M1308.5 229.5v3M1314.5 229.5v2M1315.5 229.5v3M1318.5 229.5v2M1322.5 229.5v2M1323.5 229.5v2M1324.5 229.5v2M1325.5 229.5v2M1326.5 229.5v2M1327.5 229.5v3M1331.5 229.5v3M1336.5 229.5v4M1339.5 229.5v4M1340.5 229.5v2M1345.5 229.5v4M1347.5 229.5v2M1349.5 229.5v2M1351.5 229.5v2M1352.5 229.5v2M1353.5 229.5v3M1357.5 229.5v2M1358.5 229.5v3M1359.5 229.5v3M1361.5 229.5v2M1362.5 229.5v2M1363.5 229.5v4M1365.5 229.5v2M1367.5 229.5v3M1368.5 229.5v3M1369.5 229.5v2M1370.5 229.5v3M1376.5 229.5v4M1377.5 229.5v3M1380.5 229.5v4M1381.5 229.5v2M1383.5 229.5v3M1384.5 229.5v4M1385.5 229.5v2M1389.5 229.5v3M1390.5 229.5v4M1391.5 229.5v3M1396.5 229.5v2M1399.5 229.5v4M1401.5 229.5v4M1402.5 229.5v2M1406.5 229.5v2M1407.5 229.5v2M1408.5 229.5v3M1409.5 229.5v2M1410.5 229.5v2M1411.5 229.5v2M1414.5 229.5v4M1418.5 229.5v2M1419.5 229.5v2M1450.5 229.5v4M1475.5 229.5v2M1493.5 229.5v2M1498.5 229.5v2M1507.5 229.5v2M1513.5 229.5v3M1515.5 229.5v3M1516.5 229.5v2M1518.5 229.5v2M1528.5 229.5v2M1537.5 229.5v2M1543.5 229.5v2M1551.5 229.5v3M1571.5 229.5v2M1596.5 229.5v2M1598.5 229.5v2M1606.5 229.5v4M1607.5 229.5v1M1612.5 229.5v2M1613.5 229.5v2M1617.5 229.5v2M1623.5 229.5v3M1624.5 229.5v2M1645.5 229.5v3M1646.5 229.5v3M1672.5 229.5v2M1680.5 229.5v4M1697.5 229.5v2M1701.5 229.5v2M1703.5 229.5v3M1704.5 229.5v3M1719.5 229.5v2M1726.5 229.5v2M1741.5 229.5v3M1742.5 229.5v3" stroke="#22c2cc" stroke-width="1" fill="none"/><line x1="3" y1="409.0" x2="1751" y2="409.0" stroke="#8cc83c" stroke-width="1.5"/><path d="M708.5 409.0v4M725.5 409.0v5M727.5 409.0v5M728.5 409.0v4M731.5 409.0v5M733.5 409.0v5M734.5 409.0v2M735.5 409.0v4M736.5 409.0v1M742.5 409.0v3M743.5 409.0v2M745.5 409.0v4M746.5 409.0v5M747.5 409.0v2M749.5 409.0v2M755.5 409.0v2M756.5 409.0v4M757.5 409.0v2M767.5 409.0v4M768.5 409.0v10M769.5 409.0v4M770.5 409.0v2M771.5 409.0v2M774.5 409.0v5M775.5 409.0v4M778.5 409.0v3M780.5 409.0v2M781.5 409.0v5M784.5 409.0v7M785.5 409.0v16M786.5 409.0v7M787.5 409.0v4M788.5 409.0v4M789.5 409.0v1M791.5 409.0v5M793.5 409.0v2M795.5 409.0v4M797.5 409.0v8M798.5 409.0v10M799.5 409.0v28M800.5 409.0v7M801.5 409.0v6M802.5 409.0v5M803.5 409.0v3M807.5 409.0v6M808.5 409.0v16M809.5 409.0v8M810.5 409.0v7M811.5 409.0v5M812.5 409.0v12M813.5 409.0v5M814.5 409.0v3M815.5 409.0v2M816.5 409.0v2M821.5 409.0v4M823.5 409.0v6M824.5 409.0v8M825.5 409.0v20M826.5 409.0v10M827.5 409.0v7M828.5 409.0v7M829.5 409.0v4M830.5 409.0v7M831.5 409.0v28M832.5 409.0v8M833.5 409.0v8M834.5 409.0v3M835.5 409.0v4M836.5 409.0v10M837.5 409.0v5M838.5 409.0v3M839.5 409.0v1M843.5 409.0v5M844.5 409.0v8M845.5 409.0v24M846.5 409.0v7M847.5 409.0v7M848.5 409.0v12M849.5 409.0v4M850.5 409.0v3M851.5 409.0v3M852.5 409.0v2M855.5 409.0v6M856.5 409.0v14M857.5 409.0v6M858.5 409.0v4M859.5 409.0v4M860.5 409.0v2M862.5 409.0v2M863.5 409.0v5M864.5 409.0v6M865.5 409.0v20M866.5 409.0v7M867.5 409.0v5M868.5 409.0v5M869.5 409.0v2M871.5 409.0v2M872.5 409.0v6M873.5 409.0v4M874.5 409.0v16M875.5 409.0v5M876.5 409.0v6M877.5 409.0v4M878.5 409.0v2M880.5 409.0v6M881.5 409.0v10M882.5 409.0v3M883.5 409.0v2M884.5 409.0v1M887.5 409.0v2M888.5 409.0v2M890.5 409.0v3M894.5 409.0v2M898.5 409.0v7M899.5 409.0v6M900.5 409.0v7M901.5 409.0v16M902.5 409.0v9M903.5 409.0v6M904.5 409.0v7M905.5 409.0v5M906.5 409.0v12M907.5 409.0v3M908.5 409.0v3M909.5 409.0v7M910.5 409.0v12M911.5 409.0v4M912.5 409.0v13M913.5 409.0v2M915.5 409.0v2M917.5 409.0v5M920.5 409.0v2M922.5 409.0v2M924.5 409.0v13M925.5 409.0v11M928.5 409.0v18M929.5 409.0v6M930.5 409.0v5M931.5 409.0v5M932.5 409.0v5M933.5 409.0v3M934.5 409.0v5M935.5 409.0v14M936.5 409.0v5M937.5 409.0v3M938.5 409.0v3M939.5 409.0v5M940.5 409.0v12M941.5 409.0v4M942.5 409.0v3M943.5 409.0v3M944.5 409.0v5M945.5 409.0v2M947.5 409.0v9M948.5 409.0v11M949.5 409.0v14M950.5 409.0v8M951.5 409.0v5M952.5 409.0v4M953.5 409.0v10M954.5 409.0v3M955.5 409.0v2M956.5 409.0v2M958.5 409.0v6M964.5 409.0v8M965.5 409.0v2M966.5 409.0v6M969.5 409.0v6M970.5 409.0v2M974.5 409.0v3M976.5 409.0v2M977.5 409.0v2M979.5 409.0v2M980.5 409.0v2M984.5 409.0v3M985.5 409.0v2M987.5 409.0v3M988.5 409.0v8M989.5 409.0v4M990.5 409.0v3M994.5 409.0v4M995.5 409.0v10M996.5 409.0v4M997.5 409.0v3M998.5 409.0v2M999.5 409.0v4M1002.5 409.0v2M1003.5 409.0v2M1004.5 409.0v2M1006.5 409.0v4M1007.5 409.0v2M1008.5 409.0v6M1009.5 409.0v2M1010.5 409.0v3M1011.5 409.0v3M1012.5 409.0v3M1013.5 409.0v2M1018.5 409.0v2M1019.5 409.0v4M1020.5 409.0v2M1021.5 409.0v6M1022.5 409.0v4M1023.5 409.0v3M1024.5 409.0v2M1025.5 409.0v2M1027.5 409.0v2M1030.5 409.0v4M1031.5 409.0v2M1033.5 409.0v4M1034.5 409.0v6M1035.5 409.0v2M1036.5 409.0v3M1037.5 409.0v2M1039.5 409.0v2M1042.5 409.0v2M1046.5 409.0v2M1048.5 409.0v4M1049.5 409.0v4M1050.5 409.0v6M1051.5 409.0v4M1052.5 409.0v4M1053.5 409.0v3M1054.5 409.0v3M1055.5 409.0v3M1056.5 409.0v2M1057.5 409.0v3M1058.5 409.0v2M1059.5 409.0v4M1062.5 409.0v2M1064.5 409.0v3M1065.5 409.0v3M1067.5 409.0v2M1068.5 409.0v3M1070.5 409.0v4M1071.5 409.0v2M1072.5 409.0v4M1073.5 409.0v4M1075.5 409.0v2M1076.5 409.0v4M1077.5 409.0v3M1078.5 409.0v3M1081.5 409.0v2M1085.5 409.0v6M1086.5 409.0v4M1087.5 409.0v2M1088.5 409.0v4M1090.5 409.0v2M1092.5 409.0v2M1093.5 409.0v4M1096.5 409.0v6M1097.5 409.0v3M1098.5 409.0v3M1100.5 409.0v2M1101.5 409.0v2M1102.5 409.0v2M1103.5 409.0v2M1105.5 409.0v2M1106.5 409.0v2M1108.5 409.0v2M1109.5 409.0v2M1110.5 409.0v2M1111.5 409.0v2M1112.5 409.0v2M1113.5 409.0v2M1115.5 409.0v2M1116.5 409.0v2M1117.5 409.0v4M1118.5 409.0v2M1119.5 409.0v3M1123.5 409.0v2M1124.5 409.0v2M1125.5 409.0v4M1126.5 409.0v2M1128.5 409.0v2M1129.5 409.0v2M1130.5 409.0v3M1135.5 409.0v2M1137.5 409.0v2M1139.5 409.0v4M1140.5 409.0v4M1141.5 409.0v2M1144.5 409.0v2M1145.5 409.0v2M1149.5 409.0v3M1150.5 409.0v2M1151.5 409.0v2M1156.5 409.0v3M1157.5 409.0v3M1160.5 409.0v4M1161.5 409.0v3M1162.5 409.0v2M1163.5 409.0v2M1164.5 409.0v2M1165.5 409.0v2M1166.5 409.0v3M1168.5 409.0v2M1170.5 409.0v2M1171.5 409.0v2M1172.5 409.0v2M1174.5 409.0v2M1176.5 409.0v2M1177.5 409.0v2M1178.5 409.0v3M1183.5 409.0v2M1186.5 409.0v3M1187.5 409.0v3M1188.5 409.0v3M1189.5 409.0v4M1190.5 409.0v6M1191.5 409.0v2M1192.5 409.0v2M1194.5 409.0v3M1195.5 409.0v2M1197.5 409.0v2M1199.5 409.0v4M1200.5 409.0v2M1202.5 409.0v4M1203.5 409.0v2M1204.5 409.0v3M1205.5 409.0v3M1208.5 409.0v2M1209.5 409.0v4M1210.5 409.0v3M1212.5 409.0v2M1214.5 409.0v2M1217.5 409.0v2M1220.5 409.0v2M1221.5 409.0v3M1222.5 409.0v2M1223.5 409.0v2M1224.5 409.0v2M1225.5 409.0v3M1232.5 409.0v2M1234.5 409.0v3M1236.5 409.0v2M1238.5 409.0v3M1240.5 409.0v4M1241.5 409.0v2M1242.5 409.0v4M1245.5 409.0v2M1246.5 409.0v2M1248.5 409.0v2M1250.5 409.0v3M1252.5 409.0v2M1254.5 409.0v2M1255.5 409.0v2M1258.5 409.0v2M1259.5 409.0v2M1260.5 409.0v2M1262.5 409.0v2M1263.5 409.0v2M1266.5 409.0v3M1267.5 409.0v3M1269.5 409.0v2M1272.5 409.0v2M1274.5 409.0v3M1275.5 409.0v2M1276.5 409.0v2M1278.5 409.0v2M1279.5 409.0v2M1282.5 409.0v2M1283.5 409.0v3M1284.5 409.0v2M1287.5 409.0v2M1289.5 409.0v4M1290.5 409.0v6M1291.5 409.0v2M1292.5 409.0v3M1293.5 409.0v2M1294.5 409.0v4M1296.5 409.0v4M1299.5 409.0v2M1302.5 409.0v2M1303.5 409.0v4M1305.5 409.0v4M1307.5 409.0v2M1308.5 409.0v2M1309.5 409.0v4M1310.5 409.0v2M1311.5 409.0v2M1313.5 409.0v3M1315.5 409.0v2M1317.5 409.0v4M1319.5 409.0v2M1323.5 409.0v3M1324.5 409.0v3M1325.5 409.0v2M1328.5 409.0v3M1329.5 409.0v2M1330.5 409.0v2M1332.5 409.0v2M1334.5 409.0v2M1335.5 409.0v2M1336.5 409.0v4M1338.5 409.0v2M1339.5 409.0v3M1340.5 409.0v2M1341.5 409.0v2M1342.5 409.0v4M1343.5 409.0v2M1344.5 409.0v3M1345.5 409.0v2M1347.5 409.0v2M1348.5 409.0v3M1349.5 409.0v3M1350.5 409.0v2M1353.5 409.0v2M1354.5 409.0v4M1356.5 409.0v3M1357.5 409.0v3M1358.5 409.0v4M1362.5 409.0v3M1365.5 409.0v2M1368.5 409.0v2M1369.5 409.0v2M1372.5 409.0v2M1373.5 409.0v2M1374.5 409.0v2M1377.5 409.0v2M1379.5 409.0v2M1380.5 409.0v6M1381.5 409.0v2M1382.5 409.0v2M1383.5 409.0v3M1384.5 409.0v2M1388.5 409.0v2M1390.5 409.0v4M1391.5 409.0v2M1392.5 409.0v3M1393.5 409.0v2M1394.5 409.0v2M1396.5 409.0v2M1397.5 409.0v2M1398.5 409.0v2M1399.5 409.0v2M1400.5 409.0v3M1404.5 409.0v3M1405.5 409.0v2M1406.5 409.0v4M1408.5 409.0v2M1409.5 409.0v3M1410.5 409.0v3M1413.5 409.0v2M1414.5 409.0v3M1415.5 409.0v6M1416.5 409.0v2M1417.5 409.0v3M1418.5 409.0v3M1419.5 409.0v4M1426.5 409.0v2M1428.5 409.0v4M1430.5 409.0v2M1431.5 409.0v3M1432.5 409.0v2M1438.5 409.0v4M1440.5 409.0v4M1442.5 409.0v2M1443.5 409.0v3M1444.5 409.0v3M1445.5 409.0v3M1447.5 409.0v4M1448.5 409.0v2M1450.5 409.0v2M1451.5 409.0v2M1452.5 409.0v4M1453.5 409.0v2M1454.5 409.0v2M1456.5 409.0v3M1457.5 409.0v3M1458.5 409.0v2M1460.5 409.0v4M1461.5 409.0v4M1462.5 409.0v2M1464.5 409.0v3M1465.5 409.0v2M1467.5 409.0v4M1468.5 409.0v2M1470.5 409.0v4M1471.5 409.0v2M1472.5 409.0v4M1473.5 409.0v2M1475.5 409.0v4M1476.5 409.0v2M1477.5 409.0v3M1478.5 409.0v2M1481.5 409.0v4M1482.5 409.0v3M1485.5 409.0v2M1486.5 409.0v3M1488.5 409.0v4M1489.5 409.0v3M1490.5 409.0v2M1491.5 409.0v3M1495.5 409.0v4M1496.5 409.0v2M1497.5 409.0v4M1499.5 409.0v2M1500.5 409.0v4M1502.5 409.0v2M1503.5 409.0v2M1505.5 409.0v2M1506.5 409.0v2M1507.5 409.0v3M1508.5 409.0v2M1510.5 409.0v3M1511.5 409.0v4M1512.5 409.0v3M1513.5 409.0v3M1514.5 409.0v3M1516.5 409.0v2M1517.5 409.0v2M1518.5 409.0v4M1519.5 409.0v2M1521.5 409.0v3M1523.5 409.0v3M1525.5 409.0v2M1528.5 409.0v3M1529.5 409.0v2M1530.5 409.0v6M1531.5 409.0v4M1533.5 409.0v2M1534.5 409.0v3M1535.5 409.0v4M1536.5 409.0v2M1537.5 409.0v3M1539.5 409.0v2M1540.5 409.0v2M1542.5 409.0v4M1544.5 409.0v2M1546.5 409.0v3M1548.5 409.0v3M1550.5 409.0v2M1551.5 409.0v3M1552.5 409.0v2M1553.5 409.0v4M1554.5 409.0v2M1555.5 409.0v3M1556.5 409.0v3M1557.5 409.0v3M1560.5 409.0v2M1561.5 409.0v2M1562.5 409.0v3M1565.5 409.0v2M1566.5 409.0v4M1568.5 409.0v3M1573.5 409.0v2M1574.5 409.0v4M1575.5 409.0v2M1576.5 409.0v4M1578.5 409.0v2M1579.5 409.0v2M1580.5 409.0v2M1581.5 409.0v2M1583.5 409.0v2M1586.5 409.0v3M1587.5 409.0v2M1589.5 409.0v2M1591.5 409.0v3M1594.5 409.0v2M1595.5 409.0v2M1596.5 409.0v2M1597.5 409.0v2M1599.5 409.0v2M1600.5 409.0v4M1601.5 409.0v4M1602.5 409.0v2M1603.5 409.0v3M1604.5 409.0v2M1605.5 409.0v3M1606.5 409.0v3M1608.5 409.0v2M1611.5 409.0v2M1615.5 409.0v4M1616.5 409.0v2M1618.5 409.0v4M1622.5 409.0v4M1623.5 409.0v2M1629.5 409.0v2M1631.5 409.0v2M1633.5 409.0v4M1635.5 409.0v2M1636.5 409.0v3M1637.5 409.0v3M1638.5 409.0v2M1640.5 409.0v3M1641.5 409.0v2M1642.5 409.0v3M1644.5 409.0v2M1645.5 409.0v2M1648.5 409.0v2M1649.5 409.0v2M1651.5 409.0v4M1652.5 409.0v3M1655.5 409.0v2M1656.5 409.0v2M1659.5 409.0v2M1660.5 409.0v4M1661.5 409.0v2M1663.5 409.0v2M1664.5 409.0v3M1665.5 409.0v2M1667.5 409.0v3M1668.5 409.0v4M1669.5 409.0v2M1670.5 409.0v2M1672.5 409.0v2M1675.5 409.0v4M1677.5 409.0v4M1678.5 409.0v3M1680.5 409.0v3M1682.5 409.0v2M1683.5 409.0v4M1684.5 409.0v3M1685.5 409.0v3M1686.5 409.0v2M1687.5 409.0v2M1688.5 409.0v2M1690.5 409.0v4M1691.5 409.0v2M1693.5 409.0v4M1696.5 409.0v3M1698.5 409.0v2M1699.5 409.0v2M1700.5 409.0v4M1702.5 409.0v2M1703.5 409.0v2M1704.5 409.0v4M1709.5 409.0v4M1710.5 409.0v2M1711.5 409.0v3M1715.5 409.0v4M1717.5 409.0v2M1719.5 409.0v3M1720.5 409.0v6M1721.5 409.0v3M1722.5 409.0v4M1724.5 409.0v4M1725.5 409.0v2M1727.5 409.0v2M1729.5 409.0v2M1733.5 409.0v3M1735.5 409.0v2M1737.5 409.0v2M1739.5 409.0v3M1740.5 409.0v4M1743.5 409.0v2M1745.5 409.0v2M1746.5 409.0v4M1748.5 409.0v3M1749.5 409.0v2M1750.5 409.0v2" stroke="#8cc83c" stroke-width="1" fill="none"/><line x1="3" y1="534.5" x2="1751" y2="534.5" stroke="#f6921e" stroke-width="1.8"/><path d="M645.5 534.5v2M669.5 534.5v2M725.5 534.5v4M728.5 534.5v5M729.5 534.5v7M730.5 534.5v12M731.5 534.5v7M732.5 534.5v5M733.5 534.5v5M734.5 534.5v2M735.5 534.5v2M736.5 534.5v2M737.5 534.5v3M738.5 534.5v2M739.5 534.5v4M740.5 534.5v8M741.5 534.5v4M742.5 534.5v2M743.5 534.5v1M745.5 534.5v14M746.5 534.5v6M747.5 534.5v4M748.5 534.5v4M749.5 534.5v3M750.5 534.5v2M751.5 534.5v2M752.5 534.5v3M754.5 534.5v2M757.5 534.5v2M763.5 534.5v3M764.5 534.5v2M767.5 534.5v10M768.5 534.5v26M769.5 534.5v10M770.5 534.5v6M771.5 534.5v7M772.5 534.5v4M773.5 534.5v4M774.5 534.5v3M775.5 534.5v10M776.5 534.5v3M777.5 534.5v2M778.5 534.5v2M779.5 534.5v4M780.5 534.5v2M784.5 534.5v9M785.5 534.5v28M786.5 534.5v13M787.5 534.5v9M788.5 534.5v8M789.5 534.5v5M790.5 534.5v6M791.5 534.5v4M792.5 534.5v2M794.5 534.5v2M796.5 534.5v2M797.5 534.5v2M798.5 534.5v6M799.5 534.5v24M800.5 534.5v6M801.5 534.5v4M802.5 534.5v2M803.5 534.5v2M804.5 534.5v3M807.5 534.5v22M808.5 534.5v8M809.5 534.5v7M810.5 534.5v8M811.5 534.5v12M812.5 534.5v24M813.5 534.5v10M814.5 534.5v8M815.5 534.5v8M816.5 534.5v8M817.5 534.5v5M818.5 534.5v6M819.5 534.5v3M820.5 534.5v3M821.5 534.5v2M822.5 534.5v2M824.5 534.5v26M825.5 534.5v12M826.5 534.5v12M827.5 534.5v24M828.5 534.5v12M829.5 534.5v7M830.5 534.5v6M831.5 534.5v5M832.5 534.5v4M833.5 534.5v3M834.5 534.5v8M835.5 534.5v6M836.5 534.5v22M837.5 534.5v10M838.5 534.5v5M839.5 534.5v5M840.5 534.5v5M841.5 534.5v5M842.5 534.5v8M843.5 534.5v7M844.5 534.5v11M845.5 534.5v28M846.5 534.5v10M847.5 534.5v9M848.5 534.5v6M849.5 534.5v6M850.5 534.5v6M851.5 534.5v3M852.5 534.5v3M853.5 534.5v2M854.5 534.5v4M855.5 534.5v2M863.5 534.5v26M864.5 534.5v9M865.5 534.5v10M866.5 534.5v10M867.5 534.5v7M868.5 534.5v6M869.5 534.5v3M870.5 534.5v4M871.5 534.5v3M872.5 534.5v8M873.5 534.5v3M874.5 534.5v3M875.5 534.5v1M876.5 534.5v3M879.5 534.5v3M881.5 534.5v4M882.5 534.5v2M890.5 534.5v2M893.5 534.5v3M894.5 534.5v2M895.5 534.5v8M896.5 534.5v3M897.5 534.5v2M900.5 534.5v4M901.5 534.5v12M902.5 534.5v4M903.5 534.5v4M904.5 534.5v10M905.5 534.5v4M906.5 534.5v2M907.5 534.5v2M908.5 534.5v8M909.5 534.5v2M910.5 534.5v2M911.5 534.5v3M915.5 534.5v5M916.5 534.5v6M917.5 534.5v8M918.5 534.5v5M919.5 534.5v4M920.5 534.5v2M921.5 534.5v2M922.5 534.5v4M923.5 534.5v4M924.5 534.5v12M925.5 534.5v6M926.5 534.5v4M927.5 534.5v4M928.5 534.5v2M929.5 534.5v3M930.5 534.5v6M931.5 534.5v16M932.5 534.5v7M933.5 534.5v5M934.5 534.5v4M935.5 534.5v3M936.5 534.5v2M937.5 534.5v2M938.5 534.5v4M939.5 534.5v2M940.5 534.5v2M941.5 534.5v2M942.5 534.5v6M943.5 534.5v2M944.5 534.5v2M946.5 534.5v2M948.5 534.5v2M949.5 534.5v14M950.5 534.5v7M951.5 534.5v6M952.5 534.5v3M953.5 534.5v2M957.5 534.5v3M958.5 534.5v2M963.5 534.5v3M964.5 534.5v4M967.5 534.5v2M968.5 534.5v6M969.5 534.5v2M970.5 534.5v1M971.5 534.5v2M972.5 534.5v4M973.5 534.5v12M974.5 534.5v4M975.5 534.5v4M976.5 534.5v2M977.5 534.5v4M979.5 534.5v2M981.5 534.5v3M985.5 534.5v3M988.5 534.5v2M989.5 534.5v20M990.5 534.5v11M991.5 534.5v8M992.5 534.5v7M993.5 534.5v5M994.5 534.5v2M995.5 534.5v7M996.5 534.5v6M997.5 534.5v14M998.5 534.5v6M999.5 534.5v6M1000.5 534.5v8M1001.5 534.5v4M1002.5 534.5v2M1003.5 534.5v2M1004.5 534.5v2M1006.5 534.5v3M1007.5 534.5v3M1008.5 534.5v10M1009.5 534.5v4M1010.5 534.5v4M1011.5 534.5v3M1012.5 534.5v2M1017.5 534.5v2M1021.5 534.5v12M1022.5 534.5v4M1023.5 534.5v4M1024.5 534.5v3M1025.5 534.5v2M1031.5 534.5v3M1032.5 534.5v4M1033.5 534.5v8M1034.5 534.5v16M1035.5 534.5v9M1036.5 534.5v7M1037.5 534.5v3M1038.5 534.5v2M1039.5 534.5v3M1042.5 534.5v3M1043.5 534.5v2M1044.5 534.5v3M1047.5 534.5v2M1049.5 534.5v2M1051.5 534.5v12M1052.5 534.5v6M1053.5 534.5v5M1054.5 534.5v4M1055.5 534.5v4M1056.5 534.5v2M1058.5 534.5v2M1060.5 534.5v4M1063.5 534.5v4M1064.5 534.5v4M1065.5 534.5v4M1066.5 534.5v6M1067.5 534.5v6M1068.5 534.5v4M1069.5 534.5v4M1070.5 534.5v5M1071.5 534.5v4M1072.5 534.5v3M1073.5 534.5v3M1074.5 534.5v2M1075.5 534.5v2M1078.5 534.5v2M1079.5 534.5v2M1080.5 534.5v6M1081.5 534.5v3M1082.5 534.5v1M1089.5 534.5v2M1090.5 534.5v3M1091.5 534.5v6M1092.5 534.5v3M1093.5 534.5v1M1096.5 534.5v2M1099.5 534.5v3M1100.5 534.5v4M1101.5 534.5v2M1103.5 534.5v2M1104.5 534.5v2M1105.5 534.5v2M1106.5 534.5v4M1115.5 534.5v2M1116.5 534.5v3M1120.5 534.5v2M1121.5 534.5v2M1122.5 534.5v3M1123.5 534.5v3M1127.5 534.5v3M1128.5 534.5v2M1129.5 534.5v4M1130.5 534.5v8M1131.5 534.5v2M1132.5 534.5v2M1133.5 534.5v2M1134.5 534.5v4M1135.5 534.5v3M1136.5 534.5v2M1139.5 534.5v3M1140.5 534.5v2M1141.5 534.5v2M1142.5 534.5v4M1143.5 534.5v2M1144.5 534.5v2M1146.5 534.5v2M1148.5 534.5v2M1149.5 534.5v3M1150.5 534.5v5M1151.5 534.5v2M1152.5 534.5v3M1153.5 534.5v2M1155.5 534.5v2M1157.5 534.5v2M1159.5 534.5v4M1161.5 534.5v3M1162.5 534.5v6M1163.5 534.5v3M1164.5 534.5v4M1165.5 534.5v2M1166.5 534.5v4M1167.5 534.5v4M1169.5 534.5v2M1170.5 534.5v5M1171.5 534.5v2M1172.5 534.5v2M1173.5 534.5v3M1175.5 534.5v2M1176.5 534.5v2M1178.5 534.5v3M1180.5 534.5v2M1181.5 534.5v2M1182.5 534.5v2M1184.5 534.5v3M1186.5 534.5v2M1187.5 534.5v2M1189.5 534.5v4M1191.5 534.5v3M1192.5 534.5v2M1195.5 534.5v2M1198.5 534.5v3M1201.5 534.5v2M1202.5 534.5v5M1203.5 534.5v8M1204.5 534.5v5M1205.5 534.5v3M1206.5 534.5v5M1207.5 534.5v2M1208.5 534.5v2M1209.5 534.5v3M1211.5 534.5v2M1214.5 534.5v2M1218.5 534.5v3M1219.5 534.5v2M1221.5 534.5v4M1223.5 534.5v3M1225.5 534.5v2M1226.5 534.5v2M1227.5 534.5v4M1228.5 534.5v2M1230.5 534.5v2M1231.5 534.5v5M1232.5 534.5v2M1233.5 534.5v5M1234.5 534.5v8M1235.5 534.5v7M1236.5 534.5v4M1237.5 534.5v3M1238.5 534.5v2M1239.5 534.5v3M1241.5 534.5v2M1242.5 534.5v2M1243.5 534.5v2M1246.5 534.5v2M1247.5 534.5v3M1248.5 534.5v2M1249.5 534.5v4M1252.5 534.5v2M1253.5 534.5v5M1254.5 534.5v3M1255.5 534.5v2M1257.5 534.5v4M1258.5 534.5v8M1259.5 534.5v4M1260.5 534.5v2M1262.5 534.5v2M1263.5 534.5v2M1264.5 534.5v2M1265.5 534.5v4M1267.5 534.5v2M1268.5 534.5v4M1271.5 534.5v3M1275.5 534.5v3M1276.5 534.5v4M1277.5 534.5v10M1278.5 534.5v3M1279.5 534.5v2M1280.5 534.5v2M1281.5 534.5v2M1282.5 534.5v2M1283.5 534.5v4M1284.5 534.5v4M1285.5 534.5v6M1286.5 534.5v2M1288.5 534.5v5M1289.5 534.5v2M1290.5 534.5v3M1292.5 534.5v2M1293.5 534.5v2M1301.5 534.5v3M1304.5 534.5v4M1306.5 534.5v3M1308.5 534.5v4M1310.5 534.5v3M1315.5 534.5v4M1319.5 534.5v2M1322.5 534.5v4M1323.5 534.5v3M1325.5 534.5v5M1326.5 534.5v2M1329.5 534.5v2M1330.5 534.5v2M1331.5 534.5v3M1332.5 534.5v8M1333.5 534.5v2M1334.5 534.5v2M1335.5 534.5v2M1336.5 534.5v4M1337.5 534.5v3M1344.5 534.5v2M1346.5 534.5v2M1347.5 534.5v3M1350.5 534.5v4M1353.5 534.5v2M1354.5 534.5v2M1356.5 534.5v5M1358.5 534.5v2M1359.5 534.5v4M1360.5 534.5v2M1361.5 534.5v6M1362.5 534.5v2M1363.5 534.5v1M1366.5 534.5v2M1368.5 534.5v2M1369.5 534.5v2M1371.5 534.5v2M1374.5 534.5v2M1375.5 534.5v2M1377.5 534.5v5M1378.5 534.5v2M1379.5 534.5v2M1383.5 534.5v4M1384.5 534.5v2M1385.5 534.5v2M1386.5 534.5v2M1388.5 534.5v5M1390.5 534.5v2M1391.5 534.5v2M1392.5 534.5v5M1394.5 534.5v2M1395.5 534.5v4M1396.5 534.5v3M1397.5 534.5v2M1398.5 534.5v2M1399.5 534.5v4M1400.5 534.5v2M1401.5 534.5v5M1402.5 534.5v3M1403.5 534.5v6M1404.5 534.5v4M1405.5 534.5v2M1406.5 534.5v2M1407.5 534.5v2M1411.5 534.5v2M1413.5 534.5v2M1414.5 534.5v4M1415.5 534.5v2M1416.5 534.5v2M1417.5 534.5v4M1419.5 534.5v2M1420.5 534.5v2M1423.5 534.5v3M1424.5 534.5v4M1430.5 534.5v6M1431.5 534.5v4M1432.5 534.5v2M1433.5 534.5v5M1436.5 534.5v2M1437.5 534.5v3M1440.5 534.5v3M1441.5 534.5v2M1443.5 534.5v2M1444.5 534.5v2M1445.5 534.5v6M1446.5 534.5v2M1447.5 534.5v1M1448.5 534.5v3M1449.5 534.5v5M1450.5 534.5v2M1451.5 534.5v2M1454.5 534.5v3M1456.5 534.5v4M1458.5 534.5v2M1459.5 534.5v3M1460.5 534.5v4M1461.5 534.5v4M1462.5 534.5v3M1466.5 534.5v2M1467.5 534.5v2M1468.5 534.5v6M1469.5 534.5v2M1477.5 534.5v2M1478.5 534.5v2M1480.5 534.5v4M1483.5 534.5v2M1484.5 534.5v3M1489.5 534.5v3M1490.5 534.5v3M1491.5 534.5v4M1492.5 534.5v6M1493.5 534.5v2M1494.5 534.5v3M1497.5 534.5v4M1498.5 534.5v2M1500.5 534.5v4M1503.5 534.5v5M1504.5 534.5v3M1505.5 534.5v4M1506.5 534.5v2M1507.5 534.5v2M1510.5 534.5v6M1511.5 534.5v2M1512.5 534.5v1M1517.5 534.5v5M1518.5 534.5v2M1520.5 534.5v4M1521.5 534.5v2M1523.5 534.5v2M1525.5 534.5v2M1526.5 534.5v2M1527.5 534.5v3M1528.5 534.5v3M1529.5 534.5v3M1531.5 534.5v2M1532.5 534.5v4M1534.5 534.5v2M1535.5 534.5v2M1537.5 534.5v5M1538.5 534.5v3M1539.5 534.5v2M1540.5 534.5v6M1541.5 534.5v2M1543.5 534.5v4M1545.5 534.5v5M1546.5 534.5v3M1547.5 534.5v5M1548.5 534.5v3M1549.5 534.5v2M1550.5 534.5v4M1551.5 534.5v2M1552.5 534.5v2M1553.5 534.5v4M1554.5 534.5v2M1555.5 534.5v4M1558.5 534.5v3M1559.5 534.5v2M1560.5 534.5v4M1561.5 534.5v3M1563.5 534.5v2M1564.5 534.5v5M1565.5 534.5v2M1566.5 534.5v2M1568.5 534.5v2M1570.5 534.5v2M1571.5 534.5v2M1572.5 534.5v3M1573.5 534.5v3M1575.5 534.5v5M1577.5 534.5v2M1579.5 534.5v2M1582.5 534.5v2M1583.5 534.5v5M1584.5 534.5v3M1586.5 534.5v2M1587.5 534.5v3M1588.5 534.5v2M1589.5 534.5v3M1590.5 534.5v6M1591.5 534.5v5M1592.5 534.5v3M1595.5 534.5v2M1596.5 534.5v2M1597.5 534.5v3M1599.5 534.5v5M1600.5 534.5v3M1601.5 534.5v2M1602.5 534.5v2M1603.5 534.5v4M1604.5 534.5v2M1607.5 534.5v2M1613.5 534.5v2M1614.5 534.5v2M1615.5 534.5v2M1616.5 534.5v3M1617.5 534.5v3M1619.5 534.5v2M1620.5 534.5v4M1621.5 534.5v2M1622.5 534.5v3M1623.5 534.5v4M1625.5 534.5v2M1627.5 534.5v4M1628.5 534.5v2M1631.5 534.5v2M1634.5 534.5v2M1637.5 534.5v5M1638.5 534.5v2M1640.5 534.5v2M1641.5 534.5v2M1642.5 534.5v4M1643.5 534.5v2M1644.5 534.5v4M1647.5 534.5v2M1648.5 534.5v5M1649.5 534.5v2M1650.5 534.5v6M1651.5 534.5v2M1652.5 534.5v2M1653.5 534.5v5M1654.5 534.5v3M1656.5 534.5v4M1658.5 534.5v3M1659.5 534.5v3M1669.5 534.5v2M1674.5 534.5v3M1675.5 534.5v2M1676.5 534.5v3M1677.5 534.5v5M1678.5 534.5v2M1680.5 534.5v2M1681.5 534.5v2M1684.5 534.5v4M1686.5 534.5v2M1687.5 534.5v3M1688.5 534.5v2M1689.5 534.5v4M1690.5 534.5v3M1691.5 534.5v3M1692.5 534.5v4M1696.5 534.5v5M1698.5 534.5v4M1699.5 534.5v2M1700.5 534.5v4M1701.5 534.5v2M1702.5 534.5v2M1703.5 534.5v2M1704.5 534.5v4M1705.5 534.5v2M1707.5 534.5v2M1708.5 534.5v3M1712.5 534.5v2M1713.5 534.5v2M1714.5 534.5v2M1717.5 534.5v2M1720.5 534.5v2M1722.5 534.5v5M1724.5 534.5v2M1725.5 534.5v2M1727.5 534.5v5M1729.5 534.5v3M1730.5 534.5v6M1731.5 534.5v2M1733.5 534.5v3M1735.5 534.5v2M1736.5 534.5v4M1737.5 534.5v2M1738.5 534.5v2M1739.5 534.5v2M1741.5 534.5v2M1744.5 534.5v4M1745.5 534.5v3M1746.5 534.5v5M1747.5 534.5v3M1749.5 534.5v2M1750.5 534.5v4" stroke="#f6921e" stroke-width="1" fill="none"/><line x1="3" y1="697.5" x2="845" y2="697.5" stroke="#2e2ed0" stroke-width="1.5"/><path d="M730 697.5h15M762 697.5h13M782 697.5h6" stroke="#2e2ed0" stroke-width="3"/><line x1="835" y1="696" x2="1745" y2="696" stroke="#2e2ed0" stroke-width="2"/><path d="M800.5 696v-12M801.5 696v-6M827.5 696v-8M828.5 696v-5M829.5 696v-6M842.5 696v-7M846.5 696v-7M847.5 696v-11M848.5 696v-14M849.5 696v-9M850.5 696v-6M851.5 696v-12M852.5 696v-12M853.5 696v-12M854.5 696v-6M855.5 696v-12M856.5 696v-6M861.5 696v-6M863.5 696v-7M864.5 696v-4M865.5 696v-8M866.5 696v-6M867.5 696v-12M868.5 696v-14M869.5 696v-6M870.5 696v-12M871.5 696v-9M872.5 696v-6M873.5 696v-14M874.5 696v-9M875.5 696v-10M876.5 696v-8M877.5 696v-6M878.5 696v-11M881.5 696v-6M882.5 696v-4M883.5 696v-6M884.5 696v-10M885.5 696v-14M886.5 696v-6M887.5 696v-6M888.5 696v-13M889.5 696v-6M890.5 696v-6M891.5 696v-13M893.5 696v-9M894.5 696v-11M895.5 696v-16M896.5 696v-7M897.5 696v-15M898.5 696v-9M899.5 696v-6M900.5 696v-14M901.5 696v-13M902.5 696v-4M904.5 696v-9M905.5 696v-14M906.5 696v-11M907.5 696v-6M908.5 696v-7M909.5 696v-12M910.5 696v-6M915.5 696v-16M916.5 696v-13M917.5 696v-9M918.5 696v-9M919.5 696v-14M920.5 696v-9M921.5 696v-11M924.5 696v-8M925.5 696v-14M926.5 696v-12M927.5 696v-10M928.5 696v-13M929.5 696v-10M930.5 696v-8M933.5 696v-4M934.5 696v-6M935.5 696v-14M936.5 696v-9M937.5 696v-13M938.5 696v-9M939.5 696v-10M942.5 696v-6M943.5 696v-6M944.5 696v-6M945.5 696v-4M946.5 696v-6M952.5 696v-4M955.5 696v-10M956.5 696v-8M957.5 696v-12M958.5 696v-6M959.5 696v-12M960.5 696v-6M961.5 696v-5M962.5 696v-10M965.5 696v-12M966.5 696v-7M967.5 696v-8M968.5 696v-5M978.5 696v-4M981.5 696v-14M982.5 696v-10M983.5 696v-12M984.5 696v-9M987.5 696v-4M991.5 696v-12M992.5 696v-5M993.5 696v-11M994.5 696v-10M998.5 696v-8M999.5 696v-14M1000.5 696v-12M1001.5 696v-7M1002.5 696v-6M1003.5 696v-7M1006.5 696v-4M1010.5 696v-6M1011.5 696v-4M1012.5 696v-10M1013.5 696v-8M1014.5 696v-6M1015.5 696v-5M1016.5 696v-5M1017.5 696v-8M1018.5 696v-7M1021.5 696v-5M1022.5 696v-12M1023.5 696v-7M1024.5 696v-10M1025.5 696v-5M1032.5 696v-4M1036.5 696v-5M1037.5 696v-12M1038.5 696v-5M1039.5 696v-5M1040.5 696v-7M1041.5 696v-7M1056.5 696v-10M1057.5 696v-8M1058.5 696v-5M1059.5 696v-8M1073.5 696v-14M1074.5 696v-6M1075.5 696v-8M1076.5 696v-13M1077.5 696v-6M1082.5 696v-12M1083.5 696v-9M1084.5 696v-7M1085.5 696v-12M1092.5 696v-5M1093.5 696v-4M1100.5 696v-12M1101.5 696v-5M1102.5 696v-5M1103.5 696v-5M1106.5 696v-4M1113.5 696v-16M1114.5 696v-10M1115.5 696v-7M1116.5 696v-12M1117.5 696v-5M1119.5 696v-4M1121.5 696v-7M1122.5 696v-11M1123.5 696v-14M1124.5 696v-6M1125.5 696v-6M1126.5 696v-14M1127.5 696v-13M1133.5 696v-6M1134.5 696v-9M1135.5 696v-7M1136.5 696v-5M1137.5 696v-7M1138.5 696v-7M1139.5 696v-4M1140.5 696v-10M1141.5 696v-8M1142.5 696v-9M1143.5 696v-5M1144.5 696v-7M1145.5 696v-5M1146.5 696v-5M1147.5 696v-5M1148.5 696v-5M1149.5 696v-9M1150.5 696v-4M1151.5 696v-6M1152.5 696v-5M1157.5 696v-4M1158.5 696v-4M1164.5 696v-5M1165.5 696v-10M1166.5 696v-5M1167.5 696v-10M1168.5 696v-7M1178.5 696v-7M1179.5 696v-14M1180.5 696v-6M1181.5 696v-6M1182.5 696v-6M1183.5 696v-6M1190.5 696v-4M1192.5 696v-4M1194.5 696v-10M1195.5 696v-7M1196.5 696v-9M1197.5 696v-8M1198.5 696v-6M1203.5 696v-4M1210.5 696v-6M1239.5 696v-5M1249.5 696v-4M1250.5 696v-5M1251.5 696v-4M1253.5 696v-7M1256.5 696v-4M1257.5 696v-4M1270.5 696v-4M1277.5 696v-4M1278.5 696v-6M1280.5 696v-4M1284.5 696v-6M1288.5 696v-4M1312.5 696v-6M1313.5 696v-7M1317.5 696v-4M1325.5 696v-4M1330.5 696v-5M1340.5 696v-4M1346.5 696v-4M1356.5 696v-7M1361.5 696v-4M1362.5 696v-5M1368.5 696v-10M1369.5 696v-14M1370.5 696v-12M1371.5 696v-13M1372.5 696v-8M1373.5 696v-7M1387.5 696v-4M1396.5 696v-5M1408.5 696v-7M1410.5 696v-10M1411.5 696v-12M1412.5 696v-7M1413.5 696v-6M1414.5 696v-6M1416.5 696v-7M1423.5 696v-4M1426.5 696v-6M1432.5 696v-8M1433.5 696v-8M1434.5 696v-6M1435.5 696v-6M1437.5 696v-5M1452.5 696v-4M1459.5 696v-4M1460.5 696v-5M1468.5 696v-4M1469.5 696v-4M1472.5 696v-5M1476.5 696v-9M1477.5 696v-10M1478.5 696v-8M1479.5 696v-5M1480.5 696v-10M1484.5 696v-7M1485.5 696v-6M1499.5 696v-5M1500.5 696v-10M1501.5 696v-8M1502.5 696v-7M1503.5 696v-8M1519.5 696v-6M1520.5 696v-14M1521.5 696v-12M1522.5 696v-6M1523.5 696v-14M1524.5 696v-7M1525.5 696v-7M1526.5 696v-4M1533.5 696v-9M1534.5 696v-4M1535.5 696v-6M1536.5 696v-14M1537.5 696v-14M1538.5 696v-11M1539.5 696v-14M1540.5 696v-8M1541.5 696v-7M1542.5 696v-6M1545.5 696v-4M1548.5 696v-4M1551.5 696v-8M1554.5 696v-8M1555.5 696v-9M1556.5 696v-6M1557.5 696v-4M1558.5 696v-4M1559.5 696v-5M1560.5 696v-8M1567.5 696v-4M1568.5 696v-4M1570.5 696v-4M1571.5 696v-12M1572.5 696v-5M1573.5 696v-7M1574.5 696v-5M1575.5 696v-5M1577.5 696v-6M1578.5 696v-8M1579.5 696v-14M1580.5 696v-14M1581.5 696v-9M1582.5 696v-8M1583.5 696v-6M1588.5 696v-6M1589.5 696v-6M1590.5 696v-10M1591.5 696v-5M1592.5 696v-6M1593.5 696v-9M1595.5 696v-4M1598.5 696v-6M1600.5 696v-4M1601.5 696v-6M1602.5 696v-9M1603.5 696v-13M1604.5 696v-14M1605.5 696v-9M1606.5 696v-14M1607.5 696v-9M1610.5 696v-4M1612.5 696v-7M1613.5 696v-4M1614.5 696v-7M1615.5 696v-5M1619.5 696v-4M1620.5 696v-12M1626.5 696v-6M1630.5 696v-4M1632.5 696v-10M1636.5 696v-5M1639.5 696v-4M1642.5 696v-8M1643.5 696v-4M1644.5 696v-10M1645.5 696v-12M1647.5 696v-4M1649.5 696v-7M1651.5 696v-4M1655.5 696v-5M1656.5 696v-5M1657.5 696v-9M1659.5 696v-5M1662.5 696v-10M1664.5 696v-4M1666.5 696v-8M1667.5 696v-4M1668.5 696v-12M1670.5 696v-5M1673.5 696v-8M1674.5 696v-4M1676.5 696v-5M1677.5 696v-11M1680.5 696v-4M1681.5 696v-10M1683.5 696v-6M1684.5 696v-5M1685.5 696v-5M1686.5 696v-11M1687.5 696v-7M1688.5 696v-4M1689.5 696v-7M1690.5 696v-4M1697.5 696v-5M1698.5 696v-9M1700.5 696v-10M1704.5 696v-6M1705.5 696v-4M1707.5 696v-4M1708.5 696v-7M1714.5 696v-4M1715.5 696v-9M1716.5 696v-13M1717.5 696v-4M1719.5 696v-6M1720.5 696v-8M1721.5 696v-5M1723.5 696v-5M1724.5 696v-12M1726.5 696v-4M1727.5 696v-7M1728.5 696v-4M1729.5 696v-6M1734.5 696v-10M1735.5 696v-5M1737.5 696v-4M1741.5 696v-6M1742.5 696v-4M1743.5 696v-9M1744.5 696v-4M1616.5 696v-3M1618.5 696v-4M1621.5 696v-4M1622.5 696v-5M1623.5 696v-5M1624.5 696v-5M1625.5 696v-5M1626.5 696v-4M1627.5 696v-5M1628.5 696v-4M1629.5 696v-3M1630.5 696v-4M1631.5 696v-5M1632.5 696v-5M1637.5 696v-4M1638.5 696v-5M1639.5 696v-4M1640.5 696v-5M1642.5 696v-6M1643.5 696v-6M1647.5 696v-4M1648.5 696v-6M1650.5 696v-6M1651.5 696v-5M1652.5 696v-5M1654.5 696v-7M1657.5 696v-5M1659.5 696v-5M1660.5 696v-7M1665.5 696v-6M1668.5 696v-4M1669.5 696v-8M1670.5 696v-6M1671.5 696v-8M1672.5 696v-5M1674.5 696v-5M1675.5 696v-8M1676.5 696v-6M1677.5 696v-8M1680.5 696v-5M1682.5 696v-7M1683.5 696v-6M1684.5 696v-5M1686.5 696v-4M1687.5 696v-5M1689.5 696v-8M1691.5 696v-9M1692.5 696v-7M1693.5 696v-8M1695.5 696v-9M1696.5 696v-6M1700.5 696v-9M1705.5 696v-9M1707.5 696v-8M1708.5 696v-10M1709.5 696v-9M1712.5 696v-5M1714.5 696v-7M1716.5 696v-10M1720.5 696v-5M1725.5 696v-6M1727.5 696v-9M1730.5 696v-10M1731.5 696v-8M1734.5 696v-10M1735.5 696v-8M1738.5 696v-5M1739.5 696v-11M1740.5 696v-11" stroke="#2e2ed0" stroke-width="1" fill="none"/><path d="M3 112.5L4 112.5L5 112.5L6 112.5L7 112.5L8 112.5L9 112.5L10 112.5L11 112.5L12 112.5L13 112.5L14 112.5L15 112.5L16 112.5L17 112.5L18 112.5L19 112.5L20 112.5L21 112.5L22 112.5L23 112.5L24 112.5L25 112.5L26 112.5L27 112.5L28 112.5L29 112.5L30 112.5L31 112.5L32 112.5L33 112.5L34 112.5L35 112.5L36 112.5L37 112.5L38 112.5L39 112.5L40 112.5L41 112.5L42 112.5L43 112.5L44 112.5L45 112.5L46 112.5L47 112.5L48 112.5L49 112.5L50 112.5L51 112.5L52 112.5L53 112.5L54 112.5L55 112.5L56 112.5L57 112.5L58 112.5L59 112.5L60 112.5L61 112.5L62 112.5L63 112.5L64 112.5L65 112.5L66 112.5L67 112.5L68 112.5L69 112.5L70 112.5L71 112.5L72 112.5L73 112.5L74 112.5L75 112.5L76 112.5L77 112.5L78 112.5L79 112.5L80 112.5L81 112.5L82 112.5L83 112.5L84 112.5L85 112.5L86 112.5L87 112.5L88 112.5L89 112.5L90 112.5L91 112.5L92 112.5L93 112.5L94 112.5L95 112.5L96 112.5L97 112.5L98 112.5L99 112.5L100 112.5L101 112.5L102 112.5L103 112.5L104 112.5L105 112.5L106 112.5L107 112.5L108 112.5L109 112.5L110 112.5L111 112.5L112 112.5L113 112.5L114 112.5L115 112.5L116 112.5L117 112.5L118 112.5L119 112.5L120 112.5L121 112.5L122 112.5L123 112.5L124 112.5L125 112.5L126 112.5L127 112.5L128 112.5L129 112.5L130 112.5L131 112.5L132 112.5L133 112.5L134 112.5L135 112.5L136 112.5L137 112.5L138 112.5L139 112.5L140 112.5L141 112.5L142 112.5L143 112.5L144 112.5L145 112.5L146 112.5L147 112.5L148 112.5L149 112.5L150 112.5L151 112.5L152 112.5L153 112.5L154 112.5L155 112.5L156 112.5L157 112.5L158 112.5L159 112.5L160 112.5L161 112.5L162 112.5L163 112.5L164 112.5L165 112.5L166 112.5L167 112.5L168 112.5L169 112.5L170 112.5L171 112.5L172 112.5L173 112.5L174 112.5L175 112.5L176 112.5L177 112.5L178 112.5L179 112.5L180 112.5L181 112.5L182 112.5L183 112.5L184 112.5L185 112.5L186 112.5L187 112.5L188 112.5L189 112.5L190 112.5L191 112.5L192 110.5L193 110.5L194 109.5L195 108.5L196 108.5L197 107.5L198 106.5L199 106.5L200 105.5L201 105.5L202 104.5L203 104.5L204 104.5L205 104.5L206 103.5L207 103.5L208 103.5L209 103.5L210 102.5L211 103.5L212 102.5L213 101.5L214 101.5L215 101.5L216 101.5L217 100.5L218 100.5L219 100.5L220 99.5L221 99.5L222 99.5L223 98.5L224 98.5L225 98.5L226 99.5L227 97.5L228 97.5L229 97.5L230 96.5L231 96.5L232 95.5L233 95.5L234 95.5L235 95.5L236 95.5L237 94.5L238 94.5L239 94.5L240 93.5L241 93.5L242 92.5L243 92.5L244 92.5L245 91.5L246 91.5L247 90.5L248 89.5L249 89.5L250 90.5L251 89.5L252 88.5L253 87.5L254 88.5L255 88.5L256 88.5L257 88.5L258 87.5L259 86.5L260 87.5L261 88.5L262 87.5L263 87.5L264 87.5L265 87.5L266 87.5L267 87.5L268 87.5L269 87.5L270 88.5L271 87.5L272 88.5L273 87.5L274 86.5L275 87.5L276 87.5L277 87.5L278 86.5L279 87.5L280 87.5L281 87.5L282 87.5L283 87.5L284 86.5L285 87.5L286 87.5L287 88.5L288 87.5L289 86.5L290 86.5L291 86.5L292 86.5L293 86.5L294 86.5L295 86.5L296 86.5L297 86.5L298 86.5L299 86.5L300 86.5L301 86.5L302 86.5L303 86.5L304 86.5L305 85.5L306 85.5L307 84.5L308 85.5L309 85.5L310 85.5L311 85.5L312 85.5L313 85.5L314 85.5L315 85.5L316 85.5L317 85.5L318 85.5L319 85.5L320 85.5L321 85.5L322 84.5L323 85.5L324 85.5L325 86.5L326 85.5L327 85.5L328 86.5L329 85.5L330 85.5L331 85.5L332 85.5L333 85.5L334 85.5L335 85.5L336 85.5L337 85.5L338 85.5L339 84.5L340 85.5L341 85.5L342 85.5L343 84.5L344 85.5L345 85.5L346 85.5L347 85.5L348 86.5L349 85.5L350 85.5L351 86.5L352 86.5L353 86.5L354 87.5L355 87.5L356 88.5L357 89.5L358 89.5L359 90.5L360 91.5L361 91.5L362 91.5L363 91.5L364 91.5L365 91.5L366 91.5L367 90.5L368 91.5L369 92.5L370 92.5L371 92.5L372 92.5L373 92.5L374 92.5L375 92.5L376 91.5L377 92.5L378 91.5L379 92.5L380 92.5L381 92.5L382 92.5L383 92.5L384 92.5L385 93.5L386 93.5L387 93.5L388 93.5L389 93.5L390 93.5L391 93.5L392 93.5L393 93.5L394 93.5L395 93.5L396 93.5L397 93.5L398 93.5L399 93.5L400 94.5L401 94.5L402 94.5L403 94.5L404 94.5L405 94.5L406 94.5L407 93.5L408 94.5L409 94.5L410 94.5L411 94.5L412 94.5L413 94.5L414 95.5L415 95.5L416 95.5L417 95.5L418 95.5L419 95.5L420 95.5L421 94.5L422 95.5L423 95.5L424 95.5L425 95.5L426 95.5L427 96.5L428 96.5L429 96.5L430 96.5L431 96.5L432 96.5L433 96.5L434 96.5L435 96.5L436 96.5L437 95.5L438 96.5L439 96.5L440 96.5L441 96.5L442 96.5L443 96.5L444 96.5L445 96.5L446 97.5L447 96.5L448 96.5L449 97.5L450 97.5L451 97.5L452 97.5L453 97.5L454 97.5L455 97.5L456 97.5L457 97.5L458 98.5L459 97.5L460 97.5L461 97.5L462 97.5L463 97.5L464 97.5L465 97.5L466 97.5L467 97.5L468 97.5L469 97.5L470 97.5L471 98.5L472 98.5L473 98.5L474 98.5L475 98.5L476 98.5L477 98.5L478 98.5L479 98.5L480 98.5L481 98.5L482 98.5L483 98.5L484 98.5L485 99.5L486 98.5L487 98.5L488 98.5L489 98.5L490 98.5L491 98.5L492 98.5L493 99.5L494 98.5L495 98.5L496 98.5L497 98.5L498 98.5L499 98.5L500 98.5L501 98.5L502 98.5L503 98.5L504 98.5L505 98.5L506 98.5L507 98.5L508 98.5L509 98.5L510 98.5L511 98.5L512 98.5L513 98.5L514 98.5L515 99.5L516 99.5L517 99.5L518 99.5L519 99.5L520 99.5L521 99.5L522 99.5L523 99.5L524 98.5L525 99.5L526 98.5L527 99.5L528 99.5L529 99.5L530 99.5L531 99.5L532 99.5L533 100.5L534 99.5L535 99.5L536 99.5L537 99.5L538 99.5L539 99.5L540 99.5L541 99.5L542 99.5L543 99.5L544 99.5L545 99.5L546 99.5L547 99.5L548 99.5L549 99.5L550 98.5L551 99.5L552 100.5L553 99.5L554 99.5L555 99.5L556 98.5L557 99.5L558 99.5L559 99.5L560 99.5L561 99.5L562 100.5L563 99.5L564 99.5L565 99.5L566 99.5L567 99.5L568 99.5L569 99.5L570 99.5L571 99.5L572 99.5L573 99.5L574 99.5L575 99.5L576 99.5L577 99.5L578 99.5L579 99.5L580 99.5L581 99.5L582 98.5L583 99.5L584 100.5L585 100.5L586 99.5L587 99.5L588 99.5L589 99.5L590 99.5L591 100.5L592 99.5L593 99.5L594 100.5L595 99.5L596 99.5L597 99.5L598 98.5L599 100.5L600 99.5L601 99.5L602 99.5L603 99.5L604 99.5L605 99.5L606 98.5L607 99.5L608 99.5L609 98.5L610 99.5L611 99.5L612 99.5L613 99.5L614 99.5L615 98.5L616 99.5L617 99.5L618 99.5L619 99.5L620 99.5L621 99.5L622 99.5L623 99.5L624 98.5L625 99.5L626 99.5L627 99.5L628 99.5L629 99.5L630 99.5L631 99.5L632 99.5L633 99.5L634 99.5L635 99.5L636 99.5L637 99.5L638 99.5L639 99.5L640 99.5L641 99.5L642 99.5L643 99.5L644 99.5L645 99.5L646 99.5L647 100.5L648 99.5L649 100.5L650 99.5L651 99.5L652 100.5L653 99.5L654 99.5L655 99.5L656 99.5L657 99.5L658 99.5L659 99.5L660 99.5L661 99.5L662 99.5L663 99.5L664 99.5L665 98.5L666 99.5L667 99.5L668 99.5L669 98.5L670 99.5L671 100.5L672 99.5L673 99.5L674 99.5L675 99.5L676 99.5L677 99.5L678 99.5L679 99.5L680 99.5L681 98.5L682 99.5L683 99.5L684 99.5L685 99.5L686 99.5L687 99.5L688 99.5L689 99.5L690 99.5L691 99.5L692 99.5L693 99.5L694 99.5L695 99.5L696 99.5L697 99.5L698 99.5L699 99.5L700 98.5L701 99.5L702 99.5L703 99.5L704 99.5L705 100.5L706 99.5L707 100.5L708 98.5L709 99.5L710 99.5L711 99.5L712 99.5L713 99.5L714 99.5L715 99.5L716 99.5L717 99.5L718 99.5L719 99.5L720 100.5L721 99.5L722 99.5L723 98.5L724 99.5L725 99.5L726 99.5L727 99.5L728 99.5L729 99.5L730 99.5L731 99.5L732 99.5L733 99.5L734 99.5L735 99.5L736 99.5L737 100.5L738 99.5L739 99.5L740 99.5L741 99.5L742 99.5L743 99.5L744 99.5L745 99.5L746 99.5L747 99.5L748 99.5L749 99.5L750 99.5L751 99.5L752 98.5L753 100.5L754 99.5L755 99.5L756 100.5L757 98.5L758 99.5L759 99.5L760 99.5L761 99.5L762 99.5L763 99.5L764 99.5L765 99.5L766 99.5L767 99.5L768 99.5L769 99.5L770 99.5L771 99.5L772 99.5L773 99.5L774 99.5L775 98.5L776 98.5L777 98.5L778 98.5L779 98.5L780 98.5L781 98.5L782 98.5L783 98.5L784 98.5L785 98.5L786 98.5L787 98.5L788 98.5L789 98.5L790 98.5L791 98.5L792 98.5L793 98.5L794 99.5L795 98.5L796 98.5L797 99.5L798 98.5L799 98.5L800 98.5L801 98.5L802 98.5L803 98.5L804 98.5L805 98.5L806 98.5L807 98.5L808 98.5L809 98.5L810 98.5L811 98.5L812 98.5L813 98.5L814 98.5L815 98.5L816 98.5L817 98.5L818 98.5L819 99.5L820 99.5L821 98.5L822 98.5L823 98.5L824 98.5L825 98.5L826 98.5L827 98.5L828 98.5L829 99.5L830 98.5L831 98.5L832 97.5L833 98.5L834 98.5L835 98.5L836 98.5L837 98.5L838 99.5L839 98.5L840 97.5L841 98.5L842 99.5L843 97.5L844 99.5L845 98.5L846 98.5L847 98.5L848 98.5L849 98.5L850 98.5L851 98.5L852 98.5L853 98.5L854 98.5L855 98.5L856 98.5L857 98.5L858 98.5L859 98.5L860 98.5L861 98.5L862 98.5L863 98.5L864 98.5L865 98.5L866 98.5L867 98.5L868 98.5L869 98.5L870 98.5L871 98.5L872 98.5L873 98.5L874 98.5L875 98.5L876 98.5L877 98.5L878 98.5L879 98.5L880 98.5L881 98.5L882 99.5L883 98.5L884 98.5L885 98.5L886 98.5L887 98.5L888 98.5L889 99.5L890 98.5L891 97.5L892 98.5L893 98.5L894 98.5L895 98.5L896 98.5L897 98.5L898 98.5L899 98.5L900 98.5L901 98.5L902 98.5L903 98.5L904 98.5L905 98.5L906 98.5L907 98.5L908 98.5L909 98.5L910 98.5L911 98.5L912 97.5L913 98.5L914 98.5L915 98.5L916 98.5L917 98.5L918 98.5L919 98.5L920 98.5L921 97.5L922 98.5L923 98.5L924 98.5L925 98.5L926 98.5L927 98.5L928 98.5L929 98.5L930 98.5L931 98.5L932 98.5L933 98.5L934 98.5L935 98.5L936 98.5L937 98.5L938 97.5L939 97.5L940 98.5L941 99.5L942 98.5L943 98.5L944 98.5L945 98.5L946 99.5L947 97.5L948 98.5L949 98.5L950 99.5L951 98.5L952 98.5L953 98.5L954 98.5L955 98.5L956 98.5L957 98.5L958 99.5L959 98.5L960 98.5L961 97.5L962 98.5L963 99.5L964 98.5L965 98.5L966 98.5L967 98.5L968 98.5L969 98.5L970 98.5L971 98.5L972 98.5L973 97.5L974 98.5L975 98.5L976 98.5L977 98.5L978 98.5L979 98.5L980 98.5L981 98.5L982 98.5L983 98.5L984 98.5L985 97.5L986 98.5L987 98.5L988 98.5L989 98.5L990 98.5L991 98.5L992 98.5L993 98.5L994 97.5L995 98.5L996 98.5L997 98.5L998 98.5L999 98.5L1000 99.5L1001 98.5L1002 97.5L1003 97.5L1004 98.5L1005 98.5L1006 98.5L1007 98.5L1008 98.5L1009 98.5L1010 98.5L1011 98.5L1012 98.5L1013 98.5L1014 98.5L1015 98.5L1016 98.5L1017 98.5L1018 98.5L1019 98.5L1020 98.5L1021 98.5L1022 98.5L1023 98.5L1024 98.5L1025 98.5L1026 98.5L1027 98.5L1028 98.5L1029 98.5L1030 98.5L1031 97.5L1032 98.5L1033 98.5L1034 98.5L1035 98.5L1036 98.5L1037 98.5L1038 98.5L1039 98.5L1040 98.5L1041 98.5L1042 98.5L1043 98.5L1044 98.5L1045 97.5L1046 98.5L1047 98.5L1048 98.5L1049 98.5L1050 98.5L1051 99.5L1052 98.5L1053 98.5L1054 98.5L1055 98.5L1056 98.5L1057 98.5L1058 98.5L1059 99.5L1060 98.5L1061 98.5L1062 98.5L1063 98.5L1064 98.5L1065 98.5L1066 99.5L1067 98.5L1068 98.5L1069 98.5L1070 98.5L1071 98.5L1072 97.5L1073 98.5L1074 98.5L1075 98.5L1076 98.5L1077 98.5L1078 98.5L1079 98.5L1080 98.5L1081 98.5L1082 98.5L1083 98.5L1084 98.5L1085 98.5L1086 99.5L1087 99.5L1088 98.5L1089 98.5L1090 98.5L1091 98.5L1092 98.5L1093 98.5L1094 97.5L1095 98.5L1096 98.5L1097 99.5L1098 98.5L1099 98.5L1100 98.5L1101 98.5L1102 98.5L1103 98.5L1104 98.5L1105 98.5L1106 98.5L1107 98.5L1108 98.5L1109 98.5L1110 98.5L1111 98.5L1112 98.5L1113 98.5L1114 98.5L1115 98.5L1116 99.5L1117 98.5L1118 98.5L1119 98.5L1120 98.5L1121 98.5L1122 97.5L1123 98.5L1124 98.5L1125 98.5L1126 98.5L1127 98.5L1128 97.5L1129 98.5L1130 98.5L1131 98.5L1132 98.5L1133 98.5L1134 98.5L1135 98.5L1136 98.5L1137 98.5L1138 98.5L1139 98.5L1140 98.5L1141 98.5L1142 98.5L1143 97.5L1144 98.5L1145 98.5L1146 98.5L1147 97.5L1148 98.5L1149 97.5L1150 100.5L1151 99.5L1152 99.5L1153 99.5L1154 99.5L1155 98.5L1156 99.5L1157 99.5L1158 99.5L1159 99.5L1160 99.5L1161 99.5L1162 99.5L1163 99.5L1164 99.5L1165 99.5L1166 100.5L1167 99.5L1168 99.5L1169 99.5L1170 99.5L1171 99.5L1172 99.5L1173 99.5L1174 99.5L1175 99.5L1176 99.5L1177 98.5L1178 99.5L1179 99.5L1180 99.5L1181 99.5L1182 99.5L1183 99.5L1184 99.5L1185 99.5L1186 99.5L1187 99.5L1188 99.5L1189 99.5L1190 99.5L1191 99.5L1192 99.5L1193 99.5L1194 99.5L1195 99.5L1196 99.5L1197 99.5L1198 99.5L1199 98.5L1200 99.5L1201 99.5L1202 99.5L1203 99.5L1204 99.5L1205 99.5L1206 99.5L1207 98.5L1208 99.5L1209 100.5L1210 99.5L1211 99.5L1212 99.5L1213 99.5L1214 99.5L1215 99.5L1216 99.5L1217 99.5L1218 98.5L1219 99.5L1220 100.5L1221 99.5L1222 99.5L1223 100.5L1224 98.5L1225 99.5L1226 99.5L1227 99.5L1228 99.5L1229 99.5L1230 99.5L1231 99.5L1232 99.5L1233 99.5L1234 99.5L1235 99.5L1236 99.5L1237 99.5L1238 99.5L1239 99.5L1240 99.5L1241 99.5L1242 99.5L1243 99.5L1244 99.5L1245 99.5L1246 99.5L1247 99.5L1248 99.5L1249 99.5L1250 98.5L1251 99.5L1252 99.5L1253 99.5L1254 99.5L1255 100.5L1256 99.5L1257 99.5L1258 99.5L1259 99.5L1260 98.5L1261 99.5L1262 99.5L1263 99.5L1264 99.5L1265 99.5L1266 99.5L1267 99.5L1268 100.5L1269 99.5L1270 99.5L1271 99.5L1272 99.5L1273 99.5L1274 99.5L1275 99.5L1276 99.5L1277 99.5L1278 99.5L1279 99.5L1280 99.5L1281 99.5L1282 99.5L1283 99.5L1284 99.5L1285 99.5L1286 99.5L1287 99.5L1288 99.5L1289 99.5L1290 99.5L1291 99.5L1292 99.5L1293 99.5L1294 100.5L1295 99.5L1296 99.5L1297 99.5L1298 99.5L1299 99.5L1300 98.5L1301 99.5L1302 99.5L1303 99.5L1304 99.5L1305 99.5L1306 98.5L1307 99.5L1308 98.5L1309 99.5L1310 99.5L1311 99.5L1312 99.5L1313 100.5L1314 99.5L1315 99.5L1316 99.5L1317 100.5L1318 100.5L1319 100.5L1320 100.5L1321 100.5L1322 100.5L1323 100.5L1324 100.5L1325 100.5L1326 101.5L1327 100.5L1328 100.5L1329 100.5L1330 100.5L1331 100.5L1332 100.5L1333 100.5L1334 100.5L1335 100.5L1336 100.5L1337 100.5L1338 100.5L1339 100.5L1340 100.5L1341 101.5L1342 100.5L1343 100.5L1344 99.5L1345 100.5L1346 100.5L1347 100.5L1348 100.5L1349 100.5L1350 99.5L1351 100.5L1352 100.5L1353 100.5L1354 100.5L1355 100.5L1356 100.5L1357 101.5L1358 100.5L1359 100.5L1360 100.5L1361 100.5L1362 100.5L1363 100.5L1364 100.5L1365 100.5L1366 100.5L1367 100.5L1368 100.5L1369 100.5L1370 100.5L1371 100.5L1372 100.5L1373 100.5L1374 100.5L1375 100.5L1376 100.5L1377 100.5L1378 100.5L1379 100.5L1380 100.5L1381 100.5L1382 100.5L1383 100.5L1384 100.5L1385 100.5L1386 100.5L1387 101.5L1388 100.5L1389 100.5L1390 99.5L1391 100.5L1392 100.5L1393 101.5L1394 100.5L1395 99.5L1396 100.5L1397 100.5L1398 100.5L1399 100.5L1400 100.5L1401 100.5L1402 100.5L1403 100.5L1404 101.5L1405 101.5L1406 100.5L1407 100.5L1408 100.5L1409 100.5L1410 100.5L1411 100.5L1412 100.5L1413 100.5L1414 100.5L1415 100.5L1416 100.5L1417 100.5L1418 100.5L1419 100.5L1420 100.5L1421 100.5L1422 100.5L1423 100.5L1424 100.5L1425 100.5L1426 100.5L1427 100.5L1428 100.5L1429 100.5L1430 100.5L1431 100.5L1432 100.5L1433 100.5L1434 99.5L1435 100.5L1436 100.5L1437 100.5L1438 100.5L1439 100.5L1440 100.5L1441 100.5L1442 100.5L1443 100.5L1444 100.5L1445 100.5L1446 100.5L1447 100.5L1448 100.5L1449 100.5L1450 100.5L1451 100.5L1452 100.5L1453 100.5L1454 100.5L1455 100.5L1456 100.5L1457 99.5L1458 100.5L1459 100.5L1460 100.5L1461 100.5L1462 99.5L1463 100.5L1464 100.5L1465 100.5L1466 100.5L1467 100.5L1468 100.5L1469 101.5L1470 100.5L1471 100.5L1472 101.5L1473 100.5L1474 99.5L1475 100.5L1476 100.5L1477 100.5L1478 100.5L1479 100.5L1480 100.5L1481 100.5L1482 100.5L1483 100.5L1484 101.5L1485 101.5L1486 101.5L1487 101.5L1488 101.5L1489 101.5L1490 101.5L1491 101.5L1492 101.5L1493 101.5L1494 101.5L1495 100.5L1496 101.5L1497 101.5L1498 101.5L1499 101.5L1500 101.5L1501 101.5L1502 102.5L1503 101.5L1504 102.5L1505 101.5L1506 101.5L1507 101.5L1508 101.5L1509 101.5L1510 101.5L1511 101.5L1512 101.5L1513 101.5L1514 101.5L1515 101.5L1516 101.5L1517 101.5L1518 101.5L1519 101.5L1520 101.5L1521 101.5L1522 101.5L1523 101.5L1524 101.5L1525 101.5L1526 101.5L1527 101.5L1528 101.5L1529 101.5L1530 101.5L1531 101.5L1532 101.5L1533 101.5L1534 101.5L1535 101.5L1536 101.5L1537 101.5L1538 101.5L1539 101.5L1540 101.5L1541 101.5L1542 101.5L1543 101.5L1544 101.5L1545 101.5L1546 101.5L1547 101.5L1548 101.5L1549 101.5L1550 101.5L1551 102.5L1552 101.5L1553 101.5L1554 101.5L1555 101.5L1556 101.5L1557 101.5L1558 101.5L1559 101.5L1560 101.5L1561 101.5L1562 101.5L1563 101.5L1564 101.5L1565 102.5L1566 101.5L1567 101.5L1568 101.5L1569 101.5L1570 101.5L1571 101.5L1572 101.5L1573 101.5L1574 101.5L1575 100.5L1576 101.5L1577 101.5L1578 100.5L1579 102.5L1580 101.5L1581 102.5L1582 101.5L1583 101.5L1584 101.5L1585 101.5L1586 101.5L1587 101.5L1588 101.5L1589 101.5L1590 102.5L1591 101.5L1592 101.5L1593 101.5L1594 101.5L1595 101.5L1596 101.5L1597 101.5L1598 101.5L1599 100.5L1600 101.5L1601 101.5L1602 101.5L1603 102.5L1604 102.5L1605 100.5L1606 102.5L1607 102.5L1608 101.5L1609 101.5L1610 101.5L1611 101.5L1612 101.5L1613 101.5L1614 101.5L1615 101.5L1616 102.5L1617 101.5L1618 101.5L1619 101.5L1620 101.5L1621 100.5L1622 101.5L1623 101.5L1624 101.5L1625 101.5L1626 101.5L1627 101.5L1628 101.5L1629 101.5L1630 101.5L1631 101.5L1632 101.5L1633 102.5L1634 101.5L1635 101.5L1636 100.5L1637 101.5L1638 101.5L1639 101.5L1640 100.5L1641 101.5L1642 101.5L1643 102.5L1644 101.5L1645 101.5L1646 101.5L1647 101.5L1648 101.5L1649 101.5L1650 101.5L1651 101.5L1652 101.5L1653 102.5L1654 101.5L1655 101.5L1656 101.5L1657 101.5L1658 101.5L1659 101.5L1660 101.5L1661 101.5L1662 101.5L1663 101.5L1664 101.5L1665 101.5L1666 101.5L1667 101.5L1668 101.5L1669 101.5L1670 101.5L1671 101.5L1672 101.5L1673 101.5L1674 101.5L1675 101.5L1676 101.5L1677 101.5L1678 102.5L1679 101.5L1680 101.5L1681 101.5L1682 101.5L1683 101.5L1684 101.5L1685 100.5L1686 101.5L1687 101.5L1688 101.5L1689 100.5L1690 101.5L1691 101.5L1692 101.5L1693 101.5L1694 101.5L1695 101.5L1696 101.5L1697 101.5L1698 101.5L1699 101.5L1700 101.5L1701 101.5L1702 101.5L1703 101.5L1704 101.5L1705 101.5L1706 101.5L1707 101.5L1708 101.5L1709 101.5L1710 101.5L1711 100.5L1712 101.5L1713 101.5L1714 101.5L1715 101.5L1716 101.5L1717 101.5L1718 101.5L1719 101.5L1720 101.5L1721 102.5L1722 101.5L1723 101.5L1724 101.5L1725 101.5L1726 101.5L1727 101.5L1728 101.5L1729 101.5L1730 101.5L1731 101.5L1732 101.5L1733 100.5L1734 101.5L1735 101.5L1736 101.5L1737 101.5L1738 101.5L1739 101.5L1740 102.5L1741 101.5L1742 100.5L1743 101.5L1744 101.5L1745 101.5L1746 101.5L1747 101.5L1748 101.5L1749 101.5L1750 101.5" stroke="#ecec2c" stroke-width="1.6" fill="none"/><path d="M3 932.5H177.5V895.5H1751" stroke="#12d8a2" stroke-width="1.5" fill="none"/><line x1="3" y1="112.5" x2="1721" y2="112.5" stroke="#c8c8c8" stroke-width="1" stroke-dasharray="5 5" stroke-dashoffset="7"/><line x1="3" y1="229.5" x2="1721" y2="229.5" stroke="#c8c8c8" stroke-width="1" stroke-dasharray="5 5" stroke-dashoffset="7"/><line x1="3" y1="346.5" x2="1721" y2="346.5" stroke="#c8c8c8" stroke-width="1" stroke-dasharray="5 5" stroke-dashoffset="7"/><line x1="3" y1="407.5" x2="1721" y2="407.5" stroke="#c8c8c8" stroke-width="1" stroke-dasharray="5 5" stroke-dashoffset="7"/><line x1="3" y1="534.5" x2="1721" y2="534.5" stroke="#c8c8c8" stroke-width="1" stroke-dasharray="5 5" stroke-dashoffset="7"/><line x1="3" y1="697.5" x2="1721" y2="697.5" stroke="#c8c8c8" stroke-width="1" stroke-dasharray="5 5" stroke-dashoffset="7"/><line x1="3" y1="814.5" x2="1721" y2="814.5" stroke="#c8c8c8" stroke-width="1" stroke-dasharray="5 5" stroke-dashoffset="7"/><line x1="3" y1="933.5" x2="1721" y2="933.5" stroke="#c8c8c8" stroke-width="1" stroke-dasharray="5 5" stroke-dashoffset="7"/><rect x="168" y="854" width="19" height="14" fill="#000" /><text x="169.44" y="866.00" font-size="13.19" font-weight="normal" fill="#bcbcbc" textLength="18.03" lengthAdjust="spacingAndGlyphs" >0 s</text><rect x="338" y="854" width="30" height="14" fill="#000" /><text x="338.58" y="866.00" font-size="13.19" font-weight="normal" fill="#bcbcbc" textLength="29.29" lengthAdjust="spacingAndGlyphs" >3 ms</text><rect x="512" y="854" width="30" height="14" fill="#000" /><text x="513.27" y="866.00" font-size="13.19" font-weight="normal" fill="#bcbcbc" textLength="29.29" lengthAdjust="spacingAndGlyphs" >6 ms</text><rect x="687" y="854" width="30" height="14" fill="#000" /><text x="688.05" y="866.00" font-size="13.19" font-weight="normal" fill="#bcbcbc" textLength="29.29" lengthAdjust="spacingAndGlyphs" >9 ms</text><rect x="858" y="854" width="37" height="14" fill="#000" /><text x="858.81" y="866.00" font-size="13.19" font-weight="normal" fill="#bcbcbc" textLength="36.81" lengthAdjust="spacingAndGlyphs" >12 ms</text><rect x="1033" y="854" width="37" height="14" fill="#000" /><text x="1033.56" y="866.00" font-size="13.19" font-weight="normal" fill="#bcbcbc" textLength="36.81" lengthAdjust="spacingAndGlyphs" >15 ms</text><rect x="1208" y="854" width="37" height="14" fill="#000" /><text x="1208.31" y="866.00" font-size="13.19" font-weight="normal" fill="#bcbcbc" textLength="36.81" lengthAdjust="spacingAndGlyphs" >18 ms</text><rect x="1382" y="854" width="38" height="14" fill="#000" /><text x="1383.23" y="866.00" font-size="13.19" font-weight="normal" fill="#bcbcbc" textLength="36.81" lengthAdjust="spacingAndGlyphs" >21 ms</text><rect x="1557" y="854" width="38" height="14" fill="#000" /><text x="1557.98" y="866.00" font-size="13.19" font-weight="normal" fill="#bcbcbc" textLength="36.81" lengthAdjust="spacingAndGlyphs" >24 ms</text><line x1="178.5" y1="54" x2="178.5" y2="992" stroke="#c8c8c8" stroke-width="1" stroke-dasharray="5 5" stroke-dashoffset="8"/><path d="M168 54H188L178 64Z" fill="#f28a1e"/><path d="M169 874H187V893H182L178 898L174 893H169Z" fill="#000" stroke="#f28a1e" stroke-width="2"/><text x="173.35" y="889.00" font-size="13.81" font-weight="bold" fill="#f28a1e" textLength="9.32" lengthAdjust="spacingAndGlyphs" >T</text><path d="M1730 908.5L1742 898.5V905.5H1751V911.5H1742V918.5Z" fill="#12d8a2"/><path d="M1710.5 61H1743.5Q1744.5 61 1744.5 62V95Z" fill="#505050"/><circle cx="1737.2" cy="67.4" r="3.9" fill="none" stroke="#a4a4a4" stroke-width="1.6"/><line x1="1734.4" y1="70.3" x2="1728.3" y2="76.3" stroke="#a4a4a4" stroke-width="2.4" stroke-linecap="round"/><path d="M9.5 99.7H29.5L41.3 112L29.5 124.3H9.5Q7 124.3 7 121.8V102.2Q7 99.7 9.5 99.7Z" fill="#1c1a08" stroke="#ecec2c" stroke-width="1.5" stroke-linejoin="round"/><text x="14.48" y="115.30" font-size="12.35" font-weight="normal" fill="#ecec2c" textLength="7.51" lengthAdjust="spacingAndGlyphs" >C</text><text x="25.47" y="115.30" font-size="12.35" font-weight="normal" fill="#ecec2c" textLength="6.90" lengthAdjust="spacingAndGlyphs" >1</text><text x="53.19" y="116.90" font-size="19.48" font-weight="normal" fill="#ecec2c" textLength="80.47" lengthAdjust="spacingAndGlyphs" >U_loop b</text><path d="M9.5 216.7H29.5L41.3 229L29.5 241.3H9.5Q7 241.3 7 238.8V219.2Q7 216.7 9.5 216.7Z" fill="#061a1c" stroke="#22c2cc" stroke-width="1.5" stroke-linejoin="round"/><text x="14.48" y="232.30" font-size="12.35" font-weight="normal" fill="#22c2cc" textLength="7.51" lengthAdjust="spacingAndGlyphs" >C</text><text x="25.81" y="232.30" font-size="12.35" font-weight="normal" fill="#22c2cc" textLength="6.60" lengthAdjust="spacingAndGlyphs" >2</text><text x="53.28" y="233.90" font-size="19.48" font-weight="normal" fill="#22c2cc" textLength="51.27" lengthAdjust="spacingAndGlyphs" >YAP a</text><path d="M9.5 333.7H29.5L41.3 346L29.5 358.3H9.5Q7 358.3 7 355.8V336.2Q7 333.7 9.5 333.7Z" fill="#200a0e" stroke="#e8485e" stroke-width="1.5" stroke-linejoin="round"/><text x="14.48" y="349.30" font-size="12.35" font-weight="normal" fill="#e8485e" textLength="7.51" lengthAdjust="spacingAndGlyphs" >C</text><text x="25.95" y="349.30" font-size="12.35" font-weight="normal" fill="#e8485e" textLength="6.32" lengthAdjust="spacingAndGlyphs" >3</text><text x="52.70" y="350.90" font-size="19.48" font-weight="normal" fill="#e8485e" textLength="56.95" lengthAdjust="spacingAndGlyphs" >CeBr-a</text><path d="M9.5 450.7H29.5L41.3 463L29.5 475.3H9.5Q7 475.3 7 472.8V453.2Q7 450.7 9.5 450.7Z" fill="#101806" stroke="#8cc83c" stroke-width="1.5" stroke-linejoin="round"/><text x="14.48" y="466.30" font-size="12.35" font-weight="normal" fill="#8cc83c" textLength="7.51" lengthAdjust="spacingAndGlyphs" >C</text><text x="26.19" y="466.30" font-size="12.35" font-weight="normal" fill="#8cc83c" textLength="5.95" lengthAdjust="spacingAndGlyphs" >4</text><text x="52.68" y="467.90" font-size="19.48" font-weight="normal" fill="#8cc83c" textLength="63.68" lengthAdjust="spacingAndGlyphs" >CebR-b</text><path d="M9.5 567.7H29.5L41.3 580L29.5 592.3H9.5Q7 592.3 7 589.8V570.2Q7 567.7 9.5 567.7Z" fill="#1c1006" stroke="#f6921e" stroke-width="1.5" stroke-linejoin="round"/><text x="14.48" y="583.30" font-size="12.35" font-weight="normal" fill="#f6921e" textLength="7.51" lengthAdjust="spacingAndGlyphs" >C</text><text x="25.95" y="583.30" font-size="12.35" font-weight="normal" fill="#f6921e" textLength="6.32" lengthAdjust="spacingAndGlyphs" >5</text><text x="52.50" y="584.90" font-size="19.48" font-weight="normal" fill="#f6921e" textLength="61.67" lengthAdjust="spacingAndGlyphs" >NaITl-a</text><path d="M9.5 684.7H29.5L41.3 697L29.5 709.3H9.5Q7 709.3 7 706.8V687.2Q7 684.7 9.5 684.7Z" fill="#08081a" stroke="#2e2ed0" stroke-width="1.5" stroke-linejoin="round"/><text x="14.48" y="700.30" font-size="12.35" font-weight="normal" fill="#2e2ed0" textLength="7.51" lengthAdjust="spacingAndGlyphs" >C</text><text x="25.82" y="700.30" font-size="12.35" font-weight="normal" fill="#2e2ed0" textLength="6.46" lengthAdjust="spacingAndGlyphs" >6</text><text x="52.92" y="701.90" font-size="19.48" font-weight="normal" fill="#2e2ed0" textLength="44.83" lengthAdjust="spacingAndGlyphs" >LYSO</text><path d="M9.5 801.7H29.5L41.3 814L29.5 826.3H9.5Q7 826.3 7 823.8V804.2Q7 801.7 9.5 801.7Z" fill="#e452b4" stroke="#e452b4" stroke-width="1.5" stroke-linejoin="round"/><text x="14.48" y="817.30" font-size="12.35" font-weight="normal" fill="#1a0a18" textLength="7.51" lengthAdjust="spacingAndGlyphs" >C</text><text x="25.81" y="817.30" font-size="12.35" font-weight="normal" fill="#1a0a18" textLength="6.60" lengthAdjust="spacingAndGlyphs" >7</text><text x="51.94" y="818.90" font-size="19.48" font-weight="normal" fill="#e452b4" textLength="34.96" lengthAdjust="spacingAndGlyphs" >null</text><path d="M9.5 919.7H29.5L41.3 932L29.5 944.3H9.5Q7 944.3 7 941.8V922.2Q7 919.7 9.5 919.7Z" fill="#061610" stroke="#12d8a2" stroke-width="1.5" stroke-linejoin="round"/><text x="14.48" y="935.30" font-size="12.35" font-weight="normal" fill="#12d8a2" textLength="7.51" lengthAdjust="spacingAndGlyphs" >C</text><text x="25.88" y="935.30" font-size="12.35" font-weight="normal" fill="#12d8a2" textLength="6.39" lengthAdjust="spacingAndGlyphs" >8</text><text x="52.70" y="936.90" font-size="19.48" font-weight="normal" fill="#12d8a2" textLength="62.71" lengthAdjust="spacingAndGlyphs" >Trigger</text><text x="1726.41" y="93.00" font-size="13.04" font-weight="normal" fill="#ecec2c" textLength="7.34" lengthAdjust="spacingAndGlyphs" >8</text><rect x="1769.5" y="26.5" width="149" height="968" fill="#2e2e2e" stroke="#5e5852" stroke-width="1"/><rect x="1919" y="26" width="1" height="969" fill="#cfcfcf" /><text x="1805.87" y="40.75" font-size="14.97" font-weight="bold" fill="#f0f0f0" textLength="77.69" lengthAdjust="spacingAndGlyphs" >Add New...</text><rect x="1777.5" y="53.5" width="62" height="36" rx="5" fill="url(#btn)" stroke="#6a625a" stroke-width="1"/><rect x="1849.5" y="53.5" width="62" height="36" rx="5" fill="url(#btn)" stroke="#6a625a" stroke-width="1"/><rect x="1777.5" y="99.5" width="62" height="36" rx="5" fill="url(#btn)" stroke="#6a625a" stroke-width="1"/><rect x="1849.5" y="99.5" width="62" height="36" rx="5" fill="url(#btn)" stroke="#6a625a" stroke-width="1"/><rect x="1777.5" y="145.5" width="62" height="36" rx="5" fill="url(#btn)" stroke="#6a625a" stroke-width="1"/><rect x="1849.5" y="145.5" width="62" height="36" rx="5" fill="url(#btn)" stroke="#6a625a" stroke-width="1"/><text x="1783.01" y="76.00" font-size="15.70" font-weight="normal" fill="#ececec" textLength="51.77" lengthAdjust="spacingAndGlyphs" >Cursors</text><text x="1863.49" y="75.70" font-size="15.41" font-weight="normal" fill="#ececec" textLength="34.48" lengthAdjust="spacingAndGlyphs" >Note</text><text x="1777.49" y="121.90" font-size="15.70" font-weight="normal" fill="#ececec" textLength="61.23" lengthAdjust="spacingAndGlyphs" >Measure</text><text x="1856.83" y="121.90" font-size="15.70" font-weight="normal" fill="#ececec" textLength="47.19" lengthAdjust="spacingAndGlyphs" >Search</text><text x="1783.32" y="160.20" font-size="15.70" font-weight="normal" fill="#ececec" textLength="49.19" lengthAdjust="spacingAndGlyphs" >Results</text><text x="1790.44" y="176.20" font-size="15.70" font-weight="normal" fill="#ececec" textLength="36.50" lengthAdjust="spacingAndGlyphs" >Table</text><text x="1864.90" y="168.20" font-size="15.70" font-weight="normal" fill="#ececec" textLength="28.98" lengthAdjust="spacingAndGlyphs" >Plot</text><rect x="1773" y="190" width="144" height="1" fill="#5e5852" /><rect x="1773" y="943" width="144" height="1" fill="#5e5852" /><rect x="1776.5" y="952.5" width="63" height="37" rx="6" fill="url(#btn)" stroke="#6a625a" stroke-width="1"/><path d="M1795 959h2v2h-2zM1799 959h2v2h-2zM1803 959h2v2h-2zM1807 959h2v2h-2zM1795 963h2v2h-2zM1795 967h2v2h-2zM1795 971h2v2h-2zM1799 971h2v2h-2zM1807 963h2v2h-2z" fill="#9a9a9a"/><circle cx="1809.5" cy="972.5" r="5" fill="#808080" stroke="#c4c4c4" stroke-width="1.6"/><line x1="1813" y1="976" x2="1818.5" y2="981.5" stroke="#c4c4c4" stroke-width="2.6" stroke-linecap="round"/><path d="M1870.5 962.5H1896.5L1893.5 985Q1893 987 1891 987H1876Q1874 987 1873.5 985Z" fill="none" stroke="#d4d4d4" stroke-width="1.3"/><ellipse cx="1883.5" cy="961" rx="13" ry="4.5" fill="#2e2e2e" stroke="#d4d4d4" stroke-width="1.3"/><path d="M1879.5 958Q1883.5 955 1887.5 958" fill="none" stroke="#d4d4d4" stroke-width="1.2"/><path d="M1878.5 967L1879.5 983M1883.5 967V983M1888.5 967L1887.5 983" stroke="#d4d4d4" stroke-width="1"/><circle cx="1762" cy="502" r="2.1" fill="#cccccc"/><circle cx="1762" cy="510.5" r="2.1" fill="#cccccc"/><circle cx="1762" cy="519" r="2.1" fill="#cccccc"/><rect x="0" y="995" width="1920" height="85" fill="#2d2d2d" /><rect x="3.5" y="983.5" width="89" height="94" rx="3" fill="#c9c9c9" stroke="#d6d6d6" stroke-width="1"/><path d="M3 986Q3 983 6 983H90Q93 983 93 986V1002H3Z" fill="#4c4822"/><rect x="3" y="1002" width="90" height="1" fill="#9a9a9a" /><rect x="3" y="1003" width="90" height="1" fill="#d8d8d8" /><rect x="3" y="1004" width="90" height="2" fill="#bdbdbd" /><text x="7.88" y="996.90" font-size="14.97" font-weight="normal" fill="#ecec2c" textLength="30.30" lengthAdjust="spacingAndGlyphs" >Ch 1</text><rect x="3" y="1007" width="90" height="17" fill="#ff0000" /><path d="M10.8 1009.8L18.2 1022.6H3.5Z" fill="#f2f20a" stroke="#2a2a6a" stroke-width="1"/><path d="M10.9 1013.5V1020" stroke="#8a8a30" stroke-width="1.6"/><text x="18.99" y="1020.00" font-size="16.57" font-weight="normal" fill="#ffffff" textLength="58.72" lengthAdjust="spacingAndGlyphs" >Clipping</text><text x="10.29" y="1039.00" font-size="15.41" font-weight="normal" fill="#141414" textLength="47.10" lengthAdjust="spacingAndGlyphs" >4 V/div</text><text x="9.44" y="1058.00" font-size="15.41" font-weight="normal" fill="#141414" textLength="37.20" lengthAdjust="spacingAndGlyphs" >1 MΩ</text><text x="9.83" y="1076.80" font-size="15.41" font-weight="normal" fill="#141414" textLength="56.52" lengthAdjust="spacingAndGlyphs" >200 kHz</text><text x="76.11" y="1071.10" font-size="10.03" font-weight="normal" fill="#141414" textLength="6.61" lengthAdjust="spacingAndGlyphs" >B</text><text x="81.90" y="1073.90" font-size="6.98" font-weight="normal" fill="#141414" textLength="5.98" lengthAdjust="spacingAndGlyphs" >w</text><rect x="98.5" y="999.5" width="89" height="78" rx="3" fill="#c9c9c9" stroke="#d6d6d6" stroke-width="1"/><path d="M98 1002Q98 999 101 999H185Q188 999 188 1002V1018H98Z" fill="#1c3e42"/><rect x="98" y="1018" width="90" height="1" fill="#9a9a9a" /><rect x="98" y="1019" width="90" height="1" fill="#d8d8d8" /><rect x="98" y="1020" width="90" height="2" fill="#bdbdbd" /><text x="102.88" y="1012.90" font-size="14.97" font-weight="normal" fill="#22c2cc" textLength="30.37" lengthAdjust="spacingAndGlyphs" >Ch 2</text><text x="104.98" y="1035.60" font-size="15.41" font-weight="normal" fill="#141414" textLength="68.51" lengthAdjust="spacingAndGlyphs" >50 mV/div</text><text x="104.98" y="1055.60" font-size="15.41" font-weight="normal" fill="#141414" textLength="32.94" lengthAdjust="spacingAndGlyphs" >50 Ω</text><text x="104.83" y="1074.60" font-size="15.41" font-weight="normal" fill="#141414" textLength="56.52" lengthAdjust="spacingAndGlyphs" >200 kHz</text><text x="171.11" y="1068.90" font-size="10.03" font-weight="normal" fill="#141414" textLength="6.61" lengthAdjust="spacingAndGlyphs" >B</text><text x="176.90" y="1071.70" font-size="6.98" font-weight="normal" fill="#141414" textLength="5.98" lengthAdjust="spacingAndGlyphs" >w</text><rect x="193.5" y="999.5" width="89" height="78" rx="3" fill="#c9c9c9" stroke="#d6d6d6" stroke-width="1"/><path d="M193 1002Q193 999 196 999H280Q283 999 283 1002V1018H193Z" fill="#44242a"/><rect x="193" y="1018" width="90" height="1" fill="#9a9a9a" /><rect x="193" y="1019" width="90" height="1" fill="#d8d8d8" /><rect x="193" y="1020" width="90" height="2" fill="#bdbdbd" /><text x="197.88" y="1012.90" font-size="14.97" font-weight="normal" fill="#e8485e" textLength="30.22" lengthAdjust="spacingAndGlyphs" >Ch 3</text><text x="199.44" y="1035.60" font-size="15.41" font-weight="normal" fill="#141414" textLength="77.07" lengthAdjust="spacingAndGlyphs" >100 mV/div</text><text x="199.98" y="1055.60" font-size="15.41" font-weight="normal" fill="#141414" textLength="32.94" lengthAdjust="spacingAndGlyphs" >50 Ω</text><text x="199.83" y="1074.60" font-size="15.41" font-weight="normal" fill="#141414" textLength="56.52" lengthAdjust="spacingAndGlyphs" >200 kHz</text><text x="266.11" y="1068.90" font-size="10.03" font-weight="normal" fill="#141414" textLength="6.61" lengthAdjust="spacingAndGlyphs" >B</text><text x="271.90" y="1071.70" font-size="6.98" font-weight="normal" fill="#141414" textLength="5.98" lengthAdjust="spacingAndGlyphs" >w</text><rect x="288.5" y="983.5" width="89" height="94" rx="3" fill="#c9c9c9" stroke="#d6d6d6" stroke-width="1"/><path d="M288 986Q288 983 291 983H375Q378 983 378 986V1002H288Z" fill="#364622"/><rect x="288" y="1002" width="90" height="1" fill="#9a9a9a" /><rect x="288" y="1003" width="90" height="1" fill="#d8d8d8" /><rect x="288" y="1004" width="90" height="2" fill="#bdbdbd" /><text x="292.89" y="996.90" font-size="14.97" font-weight="normal" fill="#8cc83c" textLength="30.07" lengthAdjust="spacingAndGlyphs" >Ch 4</text><rect x="288" y="1007" width="90" height="17" fill="#ff0000" /><path d="M295.8 1009.8L303.2 1022.6H288.5Z" fill="#f2f20a" stroke="#2a2a6a" stroke-width="1"/><path d="M295.9 1013.5V1020" stroke="#8a8a30" stroke-width="1.6"/><text x="303.99" y="1020.00" font-size="16.57" font-weight="normal" fill="#ffffff" textLength="58.72" lengthAdjust="spacingAndGlyphs" >Clipping</text><text x="294.98" y="1039.00" font-size="15.41" font-weight="normal" fill="#141414" textLength="68.51" lengthAdjust="spacingAndGlyphs" >50 mV/div</text><text x="294.98" y="1058.00" font-size="15.41" font-weight="normal" fill="#141414" textLength="32.94" lengthAdjust="spacingAndGlyphs" >50 Ω</text><text x="294.83" y="1076.80" font-size="15.41" font-weight="normal" fill="#141414" textLength="56.52" lengthAdjust="spacingAndGlyphs" >200 kHz</text><text x="361.11" y="1071.10" font-size="10.03" font-weight="normal" fill="#141414" textLength="6.61" lengthAdjust="spacingAndGlyphs" >B</text><text x="366.90" y="1073.90" font-size="6.98" font-weight="normal" fill="#141414" textLength="5.98" lengthAdjust="spacingAndGlyphs" >w</text><rect x="383.5" y="983.5" width="89" height="94" rx="3" fill="#c9c9c9" stroke="#d6d6d6" stroke-width="1"/><path d="M383 986Q383 983 386 983H470Q473 983 473 986V1002H383Z" fill="#4a3622"/><rect x="383" y="1002" width="90" height="1" fill="#9a9a9a" /><rect x="383" y="1003" width="90" height="1" fill="#d8d8d8" /><rect x="383" y="1004" width="90" height="2" fill="#bdbdbd" /><text x="387.88" y="996.90" font-size="14.97" font-weight="normal" fill="#f6921e" textLength="30.22" lengthAdjust="spacingAndGlyphs" >Ch 5</text><rect x="383" y="1007" width="90" height="17" fill="#ff0000" /><path d="M390.8 1009.8L398.2 1022.6H383.5Z" fill="#f2f20a" stroke="#2a2a6a" stroke-width="1"/><path d="M390.9 1013.5V1020" stroke="#8a8a30" stroke-width="1.6"/><text x="398.99" y="1020.00" font-size="16.57" font-weight="normal" fill="#ffffff" textLength="58.72" lengthAdjust="spacingAndGlyphs" >Clipping</text><text x="389.98" y="1039.00" font-size="15.41" font-weight="normal" fill="#141414" textLength="68.51" lengthAdjust="spacingAndGlyphs" >50 mV/div</text><text x="389.98" y="1058.00" font-size="15.41" font-weight="normal" fill="#141414" textLength="32.94" lengthAdjust="spacingAndGlyphs" >50 Ω</text><text x="389.83" y="1076.80" font-size="15.41" font-weight="normal" fill="#141414" textLength="56.52" lengthAdjust="spacingAndGlyphs" >200 kHz</text><text x="456.11" y="1071.10" font-size="10.03" font-weight="normal" fill="#141414" textLength="6.61" lengthAdjust="spacingAndGlyphs" >B</text><text x="461.90" y="1073.90" font-size="6.98" font-weight="normal" fill="#141414" textLength="5.98" lengthAdjust="spacingAndGlyphs" >w</text><rect x="478.5" y="999.5" width="89" height="78" rx="3" fill="#c9c9c9" stroke="#d6d6d6" stroke-width="1"/><path d="M478 1002Q478 999 481 999H565Q568 999 568 1002V1018H478Z" fill="#1e1e3a"/><rect x="478" y="1018" width="90" height="1" fill="#9a9a9a" /><rect x="478" y="1019" width="90" height="1" fill="#d8d8d8" /><rect x="478" y="1020" width="90" height="2" fill="#bdbdbd" /><text x="482.88" y="1012.90" font-size="14.97" font-weight="normal" fill="#3434cc" textLength="30.22" lengthAdjust="spacingAndGlyphs" >Ch 6</text><text x="484.44" y="1035.60" font-size="15.41" font-weight="normal" fill="#141414" textLength="47.10" lengthAdjust="spacingAndGlyphs" >1 V/div</text><text x="484.98" y="1055.60" font-size="15.41" font-weight="normal" fill="#141414" textLength="32.94" lengthAdjust="spacingAndGlyphs" >50 Ω</text><text x="484.83" y="1074.60" font-size="15.41" font-weight="normal" fill="#141414" textLength="56.52" lengthAdjust="spacingAndGlyphs" >200 kHz</text><text x="551.11" y="1068.90" font-size="10.03" font-weight="normal" fill="#141414" textLength="6.61" lengthAdjust="spacingAndGlyphs" >B</text><text x="556.90" y="1071.70" font-size="6.98" font-weight="normal" fill="#141414" textLength="5.98" lengthAdjust="spacingAndGlyphs" >w</text><rect x="573.5" y="999.5" width="89" height="78" rx="3" fill="#c9c9c9" stroke="#d6d6d6" stroke-width="1"/><path d="M573 1002Q573 999 576 999H660Q663 999 663 1002V1018H573Z" fill="#e452b4"/><rect x="573" y="1018" width="90" height="1" fill="#9a9a9a" /><rect x="573" y="1019" width="90" height="1" fill="#d8d8d8" /><rect x="573" y="1020" width="90" height="2" fill="#bdbdbd" /><text x="577.88" y="1012.90" font-size="14.97" font-weight="normal" fill="#1e1e1e" textLength="30.37" lengthAdjust="spacingAndGlyphs" >Ch 7</text><text x="579.44" y="1035.60" font-size="15.41" font-weight="normal" fill="#141414" textLength="55.67" lengthAdjust="spacingAndGlyphs" >10 V/div</text><text x="579.44" y="1055.60" font-size="15.41" font-weight="normal" fill="#141414" textLength="37.20" lengthAdjust="spacingAndGlyphs" >1 MΩ</text><text x="579.83" y="1074.60" font-size="15.41" font-weight="normal" fill="#141414" textLength="56.52" lengthAdjust="spacingAndGlyphs" >200 kHz</text><text x="646.11" y="1068.90" font-size="10.03" font-weight="normal" fill="#141414" textLength="6.61" lengthAdjust="spacingAndGlyphs" >B</text><text x="651.90" y="1071.70" font-size="6.98" font-weight="normal" fill="#141414" textLength="5.98" lengthAdjust="spacingAndGlyphs" >w</text><rect x="668.5" y="983.5" width="89" height="94" rx="3" fill="#c9c9c9" stroke="#d6d6d6" stroke-width="1"/><path d="M668 986Q668 983 671 983H755Q758 983 758 986V1002H668Z" fill="#1c4638"/><rect x="668" y="1002" width="90" height="1" fill="#9a9a9a" /><rect x="668" y="1003" width="90" height="1" fill="#d8d8d8" /><rect x="668" y="1004" width="90" height="2" fill="#bdbdbd" /><text x="672.88" y="996.90" font-size="14.97" font-weight="normal" fill="#12d8a2" textLength="30.22" lengthAdjust="spacingAndGlyphs" >Ch 8</text><rect x="668" y="1007" width="90" height="17" fill="#ff0000" /><path d="M675.8 1009.8L683.2 1022.6H668.5Z" fill="#f2f20a" stroke="#2a2a6a" stroke-width="1"/><path d="M675.9 1013.5V1020" stroke="#8a8a30" stroke-width="1.6"/><text x="683.99" y="1020.00" font-size="16.57" font-weight="normal" fill="#ffffff" textLength="58.72" lengthAdjust="spacingAndGlyphs" >Clipping</text><text x="674.83" y="1039.00" font-size="15.41" font-weight="normal" fill="#141414" textLength="47.10" lengthAdjust="spacingAndGlyphs" >2 V/div</text><text x="674.44" y="1058.00" font-size="15.41" font-weight="normal" fill="#141414" textLength="37.20" lengthAdjust="spacingAndGlyphs" >1 MΩ</text><text x="674.83" y="1076.80" font-size="15.41" font-weight="normal" fill="#141414" textLength="56.52" lengthAdjust="spacingAndGlyphs" >200 kHz</text><text x="741.11" y="1071.10" font-size="10.03" font-weight="normal" fill="#141414" textLength="6.61" lengthAdjust="spacingAndGlyphs" >B</text><text x="746.90" y="1073.90" font-size="6.98" font-weight="normal" fill="#141414" textLength="5.98" lengthAdjust="spacingAndGlyphs" >w</text><rect x="1119" y="999" width="1" height="78" fill="#4a4a4a" /><rect x="1270" y="999" width="1" height="78" fill="#4a4a4a" /><rect x="1130.5" y="998.5" width="39" height="78" rx="7" fill="url(#bbtn)" stroke="#6a625a" stroke-width="1"/><rect x="1134" y="1006" width="32" height="2" fill="#f28a1e" /><text x="1136.00" y="1028.60" font-size="16.28" font-weight="normal" fill="#eaeaf2" textLength="29.57" lengthAdjust="spacingAndGlyphs" >Add</text><text x="1133.53" y="1044.50" font-size="16.28" font-weight="normal" fill="#eaeaf2" textLength="31.70" lengthAdjust="spacingAndGlyphs" >New</text><text x="1130.59" y="1060.10" font-size="16.28" font-weight="normal" fill="#eaeaf2" textLength="39.11" lengthAdjust="spacingAndGlyphs" >Math</text><rect x="1175.5" y="998.5" width="39" height="78" rx="7" fill="url(#bbtn)" stroke="#6a625a" stroke-width="1"/><rect x="1179" y="1006" width="32" height="2" fill="#b8b8c0" /><text x="1181.00" y="1028.60" font-size="16.28" font-weight="normal" fill="#eaeaf2" textLength="29.05" lengthAdjust="spacingAndGlyphs" >Add</text><text x="1178.21" y="1044.50" font-size="16.28" font-weight="normal" fill="#eaeaf2" textLength="32.32" lengthAdjust="spacingAndGlyphs" >New</text><text x="1182.36" y="1060.10" font-size="16.28" font-weight="normal" fill="#eaeaf2" textLength="24.08" lengthAdjust="spacingAndGlyphs" >Ref</text><rect x="1220.5" y="998.5" width="40" height="78" rx="7" fill="url(#bbtn)" stroke="#6a625a" stroke-width="1"/><rect x="1224" y="1006" width="33" height="2" fill="#c45ce8" /><text x="1225.90" y="1028.60" font-size="16.28" font-weight="normal" fill="#eaeaf2" textLength="29.47" lengthAdjust="spacingAndGlyphs" >Add</text><text x="1223.51" y="1044.50" font-size="16.28" font-weight="normal" fill="#eaeaf2" textLength="32.32" lengthAdjust="spacingAndGlyphs" >New</text><text x="1227.11" y="1060.10" font-size="16.28" font-weight="normal" fill="#eaeaf2" textLength="25.69" lengthAdjust="spacingAndGlyphs" >Bus</text><rect x="1281" y="998" width="200" height="79" rx="4" fill="#c9c9c9"/><path d="M1281 1017V1002Q1281 998 1285 998H1477Q1481 998 1481 1002V1017Z" fill="#58585a"/><rect x="1281" y="1017" width="200" height="3" fill="#b4b4b4" /><text x="1285.46" y="1011.60" font-size="15.12" font-weight="normal" fill="#f0f0f0" textLength="75.26" lengthAdjust="spacingAndGlyphs" >Horizontal</text><text x="1287.90" y="1034.70" font-size="14.53" font-weight="normal" fill="#161616" textLength="56.25" lengthAdjust="spacingAndGlyphs" >3 ms/div</text><text x="1394.01" y="1034.70" font-size="14.53" font-weight="normal" fill="#161616" textLength="40.08" lengthAdjust="spacingAndGlyphs" >30 ms</text><text x="1287.88" y="1053.40" font-size="14.53" font-weight="normal" fill="#161616" textLength="69.63" lengthAdjust="spacingAndGlyphs" >SR: 1 MS/s</text><text x="1394.46" y="1053.40" font-size="14.53" font-weight="normal" fill="#161616" textLength="45.95" lengthAdjust="spacingAndGlyphs" >1 µs/pt</text><text x="1287.30" y="1072.30" font-size="14.53" font-weight="normal" fill="#161616" textLength="75.80" lengthAdjust="spacingAndGlyphs" >RL: 30 kpts</text><text x="1408.67" y="1072.30" font-size="14.53" font-weight="normal" fill="#161616" textLength="30.18" lengthAdjust="spacingAndGlyphs" >10%</text><path d="M1394.5 1060.5H1403.5V1070.5H1400.5L1399 1073L1397.5 1070.5H1394.5Z" fill="#111" stroke="#f28a1e" stroke-width="1.4"/><text x="1396.52" y="1068.60" font-size="8.72" font-weight="bold" fill="#f0f0f0" textLength="4.97" lengthAdjust="spacingAndGlyphs" >T</text><rect x="1491" y="998" width="160" height="79" rx="4" fill="#c9c9c9"/><path d="M1491 1017V1002Q1491 998 1495 998H1647Q1651 998 1651 1002V1017Z" fill="#58585a"/><rect x="1491" y="1017" width="160" height="3" fill="#b4b4b4" /><text x="1496.18" y="1011.60" font-size="15.12" font-weight="normal" fill="#f0f0f0" textLength="49.46" lengthAdjust="spacingAndGlyphs" >Trigger</text><rect x="1498.5" y="1023" width="29" height="15.5" rx="4" fill="#12d8a2" stroke="#1a3a30" stroke-width="1"/><text x="1509.14" y="1035.20" font-size="14.83" font-weight="normal" fill="#111" textLength="8.17" lengthAdjust="spacingAndGlyphs" >8</text><path d="M1538.5 1035.5H1542L1550 1025.5H1554" fill="none" stroke="#3a3aa0" stroke-width="1.2"/><text x="1564.11" y="1035.20" font-size="15.41" font-weight="normal" fill="#161616" textLength="21.98" lengthAdjust="spacingAndGlyphs" >4 V</text><rect x="1661" y="998" width="150" height="79" rx="4" fill="#c9c9c9"/><path d="M1661 1017V1002Q1661 998 1665 998H1807Q1811 998 1811 1002V1017Z" fill="#58585a"/><rect x="1661" y="1017" width="150" height="3" fill="#b4b4b4" /><text x="1667.00" y="1011.60" font-size="15.12" font-weight="normal" fill="#f0f0f0" textLength="77.86" lengthAdjust="spacingAndGlyphs" >Acquisition</text><text x="1667.17" y="1035.20" font-size="15.41" font-weight="normal" fill="#161616" textLength="58.98" lengthAdjust="spacingAndGlyphs" >Manual,</text><text x="1746.70" y="1035.20" font-size="15.41" font-weight="normal" fill="#161616" textLength="55.14" lengthAdjust="spacingAndGlyphs" >Analyze</text><text x="1667.28" y="1054.20" font-size="15.41" font-weight="normal" fill="#161616" textLength="116.05" lengthAdjust="spacingAndGlyphs" >High Res: 16 bits</text><text x="1667.82" y="1073.00" font-size="15.41" font-weight="normal" fill="#161616" textLength="75.10" lengthAdjust="spacingAndGlyphs" >Single: 1 /1</text><rect x="1822.5" y="998.5" width="88" height="35" rx="6" fill="#f21c1c" stroke="#5a3a3a" stroke-width="1"/><text x="1840.22" y="1019.80" font-size="13.95" font-weight="bold" fill="#ffffff" textLength="51.21" lengthAdjust="spacingAndGlyphs" >Stopped</text><rect x="1822" y="1042" width="89" height="35" rx="4" fill="#c9c9c9"/><text x="1824.81" y="1056.50" font-size="14.97" font-weight="normal" fill="#161616" textLength="82.81" lengthAdjust="spacingAndGlyphs" >18 Sep 2025</text><text x="1837.18" y="1073.70" font-size="15.55" font-weight="normal" fill="#161616" textLength="58.16" lengthAdjust="spacingAndGlyphs" >15:10:25</text></svg></body></html>
